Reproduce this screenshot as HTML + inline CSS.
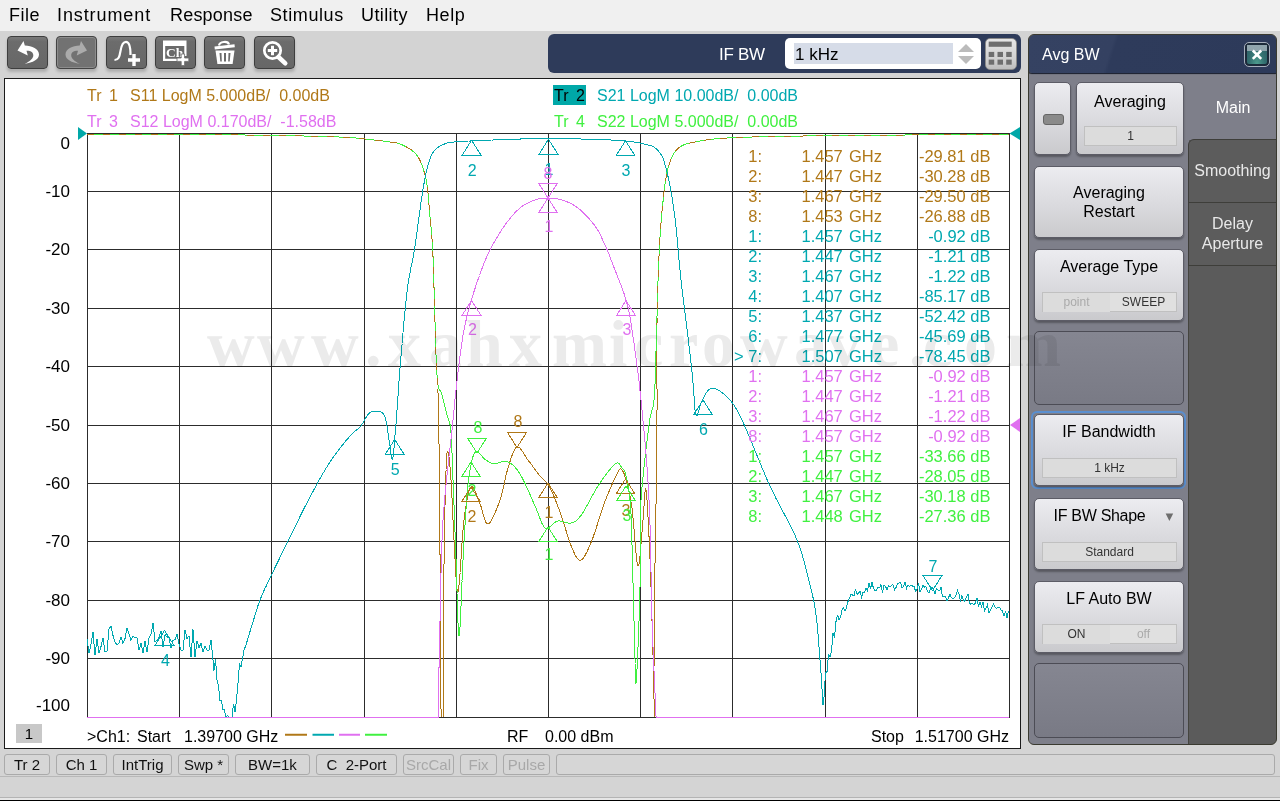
<!DOCTYPE html>
<html><head><meta charset="utf-8">
<style>
*{margin:0;padding:0;box-sizing:border-box}
html,body{width:1280px;height:801px;overflow:hidden;background:#d4d4d4;font-family:"Liberation Sans",sans-serif}
.abs{position:absolute}
#menubar{position:absolute;left:0;top:0;width:1280px;height:31px;background:#f0f0f0}
#menubar span{position:absolute;top:5px;font-size:18px;color:#000}
#toolbar{position:absolute;left:0;top:31px;width:1280px;height:47px;background:#d3d3d3}
.tb{position:absolute;top:36px;width:41px;height:33px;border-radius:4px;background:linear-gradient(#7a7a7a,#6c6c6c 15%,#676767);border:1px solid #3e3e3e;box-shadow:0 3px 3px rgba(0,0,0,0.18)}
.tb.dis{background:#727272;border-color:#444;box-shadow:inset 0 0 0 1px #8c8c8c,0 3px 3px rgba(0,0,0,0.18)}
#ifbw{position:absolute;left:548px;top:34px;width:473px;height:39px;background:#2e3b5a;border-radius:6px}
#chart{position:absolute;left:4px;top:78px;width:1017px;height:671px;background:#fff;border:1px solid #1a1a1a}
.bt{position:absolute;top:728px;font-size:16px;line-height:18px;white-space:pre;color:#000}
.leg{position:absolute;font-size:16px;white-space:pre;line-height:18px}
.mr{position:absolute;left:0;height:20px;font-size:16.5px;line-height:20px;white-space:pre}
.mr span{position:absolute;top:0}
.ma{left:720px;width:42px;text-align:right}
.mb{left:801.5px}
.mc{left:849px}
.md{left:881.5px;width:109px;text-align:right}
.yl{position:absolute;left:20px;width:50px;text-align:right;font-size:17px;line-height:20px;color:#000}
#panel{position:absolute;left:1028px;top:34px;width:249px;height:711px;border-radius:6px;background:#5b5b5b;border:1px solid #3a3a30;overflow:hidden}
#phead{position:absolute;left:0;top:0;width:249px;height:38px;border-radius:5px 5px 3px 3px;background:linear-gradient(108deg,#354262 0%,#344161 33%,#2e3b5b 34.5%,#2d3a5a 100%);box-shadow:0 1px 1px #1a2030}
#pleft{position:absolute;left:0;top:39px;width:160px;height:672px;background:#7e7f8a}
#maintab{position:absolute;left:159px;top:39px;width:90px;height:66px;background:#7e7f8a}
.tab{position:absolute;left:159px;width:89px;background:#5c5c5c;border:1px solid #3e3e3a;color:#e8e8e8;font-size:16px;text-align:center}
.btn{position:absolute;left:5px;width:150px;border-radius:5px;background:linear-gradient(#ececf0,#d8d8dc 60%,#cacacd);border:1px solid #5c5c66;box-shadow:0 2px 2px rgba(0,0,0,0.3);text-align:center;font-size:16px;color:#000}
.blank{position:absolute;left:5px;width:150px;border-radius:5px;background:linear-gradient(#858691,#797a85);border:1px solid #4c4c55}
.val{position:absolute;left:7px;width:135px;height:20px;background:#dcdcdc;border:1px solid #c0c0c0;font-size:12px;line-height:19px;color:#333;text-align:center}
.tog{position:absolute;left:7px;width:135px;height:20px;background:#e0e0e0;border:1px solid #c0c0c0;font-size:12px;line-height:19px}
.tog span{position:absolute;top:0;width:67px;text-align:center}
#status{position:absolute;left:0;top:749px;width:1280px;height:52px;background:#d3d3d3}
.sb{position:absolute;top:754px;height:21px;border:1px solid #aaa;border-radius:3px;background:#d6d6d6;font-size:15px;line-height:19px;text-align:center;color:#111}
.sb.dis{color:#a8a8a8}
</style></head><body>
<div id="menubar">
<span style="left:9px;letter-spacing:0.5px">File</span><span style="left:57px;letter-spacing:0.9px">Instrument</span><span style="left:170px;letter-spacing:0.2px">Response</span><span style="left:270px;letter-spacing:0.6px">Stimulus</span><span style="left:361px;letter-spacing:0.4px">Utility</span><span style="left:426px;letter-spacing:0.6px">Help</span>
</div>
<div id="toolbar"></div>
<div class="tb" style="left:7px"><svg width="41" height="33" style="position:absolute;left:-1px;top:-1px"><path d="M10.5 14.5 L16.5 5 L17.8 9.5 C25 9.5 32 13 32 18.5 C32 23.5 26 26.5 17.5 28 C23.5 25 26.5 22 26.3 19 C26 15.5 22.5 14.5 19.5 14.8 L20.8 19.5 Z" fill="#fff"/></svg></div>
<div class="tb dis" style="left:56px"><svg width="41" height="33" style="position:absolute;left:-1px;top:-1px"><path d="M31 14.5 L25 5 L23.7 9.5 C16.5 9.5 9.5 13 9.5 18.5 C9.5 23.5 15.5 26.5 24 28 C18 25 15 22 15.2 19 C15.5 15.5 19 14.5 22 14.8 L20.7 19.5 Z" fill="#ababab"/></svg></div>
<div class="tb" style="left:106px"><svg width="41" height="33" style="position:absolute;left:-1px;top:-1px"><path d="M8.5 24 C12.5 24 13.5 21 14.5 15 C15.5 8.5 17 5.8 20 5.8 C23.5 5.8 24.5 11 24.5 19" fill="none" stroke="#fff" stroke-width="2.2"/><path d="M26.3 18 h3.4 v4.3 h4.3 v3.4 h-4.3 v4.3 h-3.4 v-4.3 h-4.3 v-3.4 h4.3 z" fill="#fff"/></svg></div>
<div class="tb" style="left:155px"><svg width="41" height="33" style="position:absolute;left:-1px;top:-1px"><path d="M8 4.5 H31.5 V20 H24 V25 H8 Z M10.2 10 V22.8 H24 V20 H29.3 V10 Z" fill="#fff" fill-rule="evenodd"/><text x="11" y="21" font-family="Liberation Serif" font-weight="bold" font-size="13.5" fill="#fff">Ch</text><path d="M26.2 18 h3.4 v4 h4.2 v3.4 h-4.2 v4.2 h-3.4 v-4.2 h-4.2 v-3.4 h4.2 z" fill="#fff" stroke="#6a6a6a" stroke-width="0.8"/></svg></div>
<div class="tb" style="left:204px"><svg width="41" height="33" style="position:absolute;left:-1px;top:-1px"><path d="M15 9.5 C15.5 5.5 24 4.5 25 8.5" fill="none" stroke="#fff" stroke-width="2.2"/><path d="M10.5 10.5 L30.5 8.2 L30.8 11.2 L10.8 13.5 Z" fill="#fff"/><path d="M11.5 14.5 L30.5 14.5 L28.6 28 L13.4 28 Z" fill="#fff"/><path d="M15.5 17 L17.5 17 L17.8 25.5 L16.3 25.5 Z M20 17 L22 17 L22 25.5 L20 25.5 Z M24.5 17 L26.5 17 L25.7 25.5 L24.2 25.5 Z" fill="#6a6a6a"/></svg></div>
<div class="tb" style="left:254px"><svg width="41" height="33" style="position:absolute;left:-1px;top:-1px"><circle cx="18.5" cy="14.5" r="8.2" fill="none" stroke="#fff" stroke-width="2.7"/><path d="M13.8 14.5 h9.4 M18.5 9.8 v9.4" stroke="#fff" stroke-width="3"/><path d="M24.5 21 L31.3 27.3" stroke="#fff" stroke-width="4.5" stroke-linecap="round"/></svg></div>

<div id="ifbw">
<div class="abs" style="left:171px;top:11px;font-size:17px;color:#fff;letter-spacing:-0.3px">IF BW</div>
<div class="abs" style="left:237px;top:4px;width:196px;height:31px;background:#fff;border-radius:5px"></div>
<div class="abs" style="left:246px;top:9px;width:159px;height:21px;background:#d6dce8"></div>
<div class="abs" style="left:247px;top:10px;font-size:17px;color:#000;line-height:21px">1 kHz</div>
<svg class="abs" style="left:408px;top:8px" width="22" height="24"><path d="M2 10 L10 2 L18 10 Z" fill="#bbb"/><path d="M2 14 L10 22 L18 14 Z" fill="#bbb"/></svg>
<div class="abs" style="left:437px;top:4px;width:32px;height:32px;border-radius:5px;background:linear-gradient(#e6e6e6,#cfcfcf 70%,#bdbdbd);border:1px solid #8a8a8a">
<svg width="29" height="29" style="position:absolute;left:0;top:0"><rect x="2.7" y="2.6" width="23" height="5.2" fill="#6e6e6e"/><rect x="2.7" y="12.9" width="5.5" height="5.1" fill="#6e6e6e"/><rect x="11.5" y="12.9" width="5.5" height="5.1" fill="#6e6e6e"/><rect x="20.2" y="12.9" width="5.5" height="5.1" fill="#6e6e6e"/><rect x="2.7" y="20.6" width="5.5" height="5.1" fill="#6e6e6e"/><rect x="11.5" y="20.6" width="5.5" height="5.1" fill="#6e6e6e"/><rect x="20.2" y="20.6" width="5.5" height="5.1" fill="#6e6e6e"/></svg></div>
</div>

<div id="chart"></div>
<svg width="1280" height="801" style="position:absolute;left:0;top:0">
<line x1="87.5" y1="133" x2="87.5" y2="718" stroke="#2c2c2c" stroke-width="1" shape-rendering="crispEdges"/>
<line x1="179.5" y1="133" x2="179.5" y2="718" stroke="#2c2c2c" stroke-width="1" shape-rendering="crispEdges"/>
<line x1="271.5" y1="133" x2="271.5" y2="718" stroke="#2c2c2c" stroke-width="1" shape-rendering="crispEdges"/>
<line x1="364.5" y1="133" x2="364.5" y2="718" stroke="#2c2c2c" stroke-width="1" shape-rendering="crispEdges"/>
<line x1="456.5" y1="133" x2="456.5" y2="718" stroke="#2c2c2c" stroke-width="1" shape-rendering="crispEdges"/>
<line x1="548.5" y1="133" x2="548.5" y2="718" stroke="#2c2c2c" stroke-width="1" shape-rendering="crispEdges"/>
<line x1="640.5" y1="133" x2="640.5" y2="718" stroke="#2c2c2c" stroke-width="1" shape-rendering="crispEdges"/>
<line x1="732.5" y1="133" x2="732.5" y2="718" stroke="#2c2c2c" stroke-width="1" shape-rendering="crispEdges"/>
<line x1="825.5" y1="133" x2="825.5" y2="718" stroke="#2c2c2c" stroke-width="1" shape-rendering="crispEdges"/>
<line x1="917.5" y1="133" x2="917.5" y2="718" stroke="#2c2c2c" stroke-width="1" shape-rendering="crispEdges"/>
<line x1="1009.5" y1="133" x2="1009.5" y2="718" stroke="#2c2c2c" stroke-width="1" shape-rendering="crispEdges"/>
<line x1="87" y1="133.5" x2="1010" y2="133.5" stroke="#2c2c2c" stroke-width="1" shape-rendering="crispEdges"/>
<line x1="87" y1="191.5" x2="1010" y2="191.5" stroke="#2c2c2c" stroke-width="1" shape-rendering="crispEdges"/>
<line x1="87" y1="249.5" x2="1010" y2="249.5" stroke="#2c2c2c" stroke-width="1" shape-rendering="crispEdges"/>
<line x1="87" y1="308.5" x2="1010" y2="308.5" stroke="#2c2c2c" stroke-width="1" shape-rendering="crispEdges"/>
<line x1="87" y1="366.5" x2="1010" y2="366.5" stroke="#2c2c2c" stroke-width="1" shape-rendering="crispEdges"/>
<line x1="87" y1="425.5" x2="1010" y2="425.5" stroke="#2c2c2c" stroke-width="1" shape-rendering="crispEdges"/>
<line x1="87" y1="483.5" x2="1010" y2="483.5" stroke="#2c2c2c" stroke-width="1" shape-rendering="crispEdges"/>
<line x1="87" y1="541.5" x2="1010" y2="541.5" stroke="#2c2c2c" stroke-width="1" shape-rendering="crispEdges"/>
<line x1="87" y1="600.5" x2="1010" y2="600.5" stroke="#2c2c2c" stroke-width="1" shape-rendering="crispEdges"/>
<line x1="87" y1="658.5" x2="1010" y2="658.5" stroke="#2c2c2c" stroke-width="1" shape-rendering="crispEdges"/>
<line x1="87" y1="717.5" x2="1010" y2="717.5" stroke="#2c2c2c" stroke-width="1" shape-rendering="crispEdges"/>
<polyline fill="none" stroke="#b07818" stroke-width="1" shape-rendering="crispEdges" points="437.8,388.5 437.8,389.4 437.8,390.3 437.9,391.2 437.9,392.1 438.0,393.1 438.0,394.0 438.0,395.0 438.1,395.9 438.1,396.7 438.1,397.5 438.2,398.3 438.2,399.0 438.2,399.6 438.3,400.3 438.3,400.9 438.3,401.5 438.3,402.0 438.3,402.6 438.4,403.2 438.4,403.7 438.4,404.3 438.4,404.9 438.4,405.5 438.5,406.2 438.5,406.9 438.5,407.6 438.5,408.4 438.5,409.2 438.5,410.1 438.5,411.1 438.6,412.1 438.6,413.2 438.6,414.4 438.6,415.7 438.6,417.1 438.7,418.6 438.7,420.2 438.7,421.9 438.7,423.7 438.7,425.7 438.8,427.8 438.8,430.0 438.8,430.6 438.8,431.3 438.8,431.9 438.8,432.6 438.8,433.3 438.8,434.0 438.9,434.7 438.9,435.4 438.9,436.1 438.9,436.8 438.9,437.5 438.9,438.3 438.9,439.0 438.9,439.7 438.9,440.5 438.9,441.3 438.9,442.1 438.9,442.8 439.0,443.6 439.0,444.4 439.0,445.2 439.0,446.1 439.0,446.9 439.0,447.7 439.0,448.5 439.0,449.4 439.0,450.2 439.0,451.1 439.0,452.0 439.1,452.8 439.1,453.7 439.1,454.6 439.1,455.5 439.1,456.4 439.1,457.3 439.1,458.2 439.1,459.1 439.1,460.0 439.1,461.0 439.1,461.9 439.2,462.8 439.2,463.8 439.2,464.7 439.2,465.7 439.2,466.7 439.2,467.6 439.2,468.6 439.2,469.6 439.2,470.6 439.2,471.5 439.2,472.5 439.3,473.5 439.3,474.5 439.3,475.5 439.3,476.6 439.3,477.6 439.3,478.6 439.3,479.6 439.3,480.7 439.3,481.7 439.3,482.7 439.4,483.8 439.4,484.8 439.4,485.9 439.4,486.9 439.4,488.0 439.4,489.0 439.4,490.1 439.4,491.2 439.4,492.2 439.4,493.3 439.5,494.4 439.5,495.5 439.5,496.5 439.5,497.6 439.5,498.7 439.5,499.8 439.5,500.9 439.5,502.0 439.5,503.1 439.5,504.2 439.5,505.3 439.6,506.4 439.6,507.5 439.6,508.6 439.6,509.7 439.6,510.8 439.6,511.9 439.6,513.0 439.6,514.2 439.6,515.3 439.6,516.4 439.7,517.5 439.7,518.6 439.7,519.7 439.7,520.9 439.7,522.0 439.7,523.1 439.7,524.2 439.7,525.4 439.7,526.5 439.7,527.6 439.7,528.7 439.8,529.9 439.8,531.0 439.8,532.1 439.8,533.2 439.8,534.4 439.8,535.5 439.8,536.6 439.8,537.7 439.8,538.9 439.8,540.0 439.9,541.1 439.9,542.2 439.9,543.4 439.9,544.5 439.9,545.6 439.9,546.7 439.9,547.8 439.9,548.9 439.9,550.1 439.9,551.2 439.9,552.3 439.9,553.4 440.0,554.5 440.0,555.6 440.0,556.7 440.0,557.8 440.0,558.9 440.0,560.0 440.0,560.9 440.0,561.8 440.0,562.8 440.0,563.7 440.0,564.6 440.0,565.6 440.0,566.6 440.1,567.5 440.1,568.5 440.1,569.5 440.1,570.5 440.1,571.5 440.1,572.5 440.1,573.5 440.1,574.5 440.1,575.5 440.1,576.5 440.1,577.6 440.1,578.6 440.1,579.7 440.2,580.7 440.2,581.8 440.2,582.8 440.2,583.9 440.2,585.0 440.2,586.1 440.2,587.1 440.2,588.2 440.2,589.3 440.2,590.4 440.2,591.5 440.2,592.6 440.2,593.7 440.2,594.8 440.3,596.0 440.3,597.1 440.3,598.2 440.3,599.3 440.3,600.5 440.3,601.6 440.3,602.7 440.3,603.9 440.3,605.0 440.3,606.2 440.3,607.3 440.3,608.5 440.3,609.6 440.4,610.8 440.4,611.9 440.4,613.1 440.4,614.2 440.4,615.4 440.4,616.5 440.4,617.7 440.4,618.9 440.4,620.0 440.4,621.2 440.4,622.3 440.4,623.5 440.4,624.7 440.4,625.8 440.5,627.0 440.5,628.2 440.5,629.3 440.5,630.5 440.5,631.6 440.5,632.8 440.5,634.0 440.5,635.1 440.5,636.3 440.5,637.4 440.5,638.6 440.5,639.7 440.5,640.9 440.5,642.0 440.6,643.2 440.6,644.3 440.6,645.5 440.6,646.6 440.6,647.8 440.6,648.9 440.6,650.0 440.6,651.2 440.6,652.3 440.6,653.4 440.6,654.5 440.6,655.6 440.6,656.8 440.6,657.9 440.6,659.0 440.7,660.1 440.7,661.2 440.7,662.3 440.7,663.3 440.7,664.4 440.7,665.5 440.7,666.6 440.7,667.6 440.7,668.7 440.7,669.8 440.7,670.8 440.7,671.9 440.7,672.9 440.7,673.9 440.7,675.0 440.8,676.0 440.8,677.0 440.8,678.0 440.8,679.0 440.8,680.0 440.8,681.0 440.8,682.0 440.8,682.9 440.8,683.9 440.8,684.9 440.8,685.8 440.8,686.8 440.8,687.7 440.8,688.6 440.8,689.5 440.8,690.4 440.8,691.4 440.8,692.2 440.9,693.1 440.9,694.0 440.9,694.9 440.9,695.7 440.9,696.6 440.9,697.4 440.9,698.2 440.9,699.1 440.9,699.9 440.9,700.7 440.9,701.5 440.9,702.2 440.9,703.0 440.9,703.8 440.9,704.5 440.9,705.3 440.9,706.0 440.9,706.7 440.9,707.4 440.9,708.1 440.9,708.8 441.0,709.4 441.0,710.1 441.0,710.7 441.0,711.4 441.0,712.0 441.0,712.6 441.0,713.2 441.0,713.8 441.0,714.3 441.0,714.9 441.0,715.4 441.0,716.0 441.0,716.5 441.0,717.0"/>
<polyline fill="none" stroke="#b07818" stroke-width="1" shape-rendering="crispEdges" points="443.0,717.0 443.0,716.5 443.0,716.0 443.0,715.4 443.0,714.9 443.0,714.3 443.0,713.8 443.0,713.2 443.0,712.6 443.0,711.9 443.0,711.3 443.0,710.6 443.0,710.0 443.0,709.3 443.0,708.6 443.1,707.9 443.1,707.2 443.1,706.5 443.1,705.8 443.1,705.0 443.1,704.2 443.1,703.5 443.1,702.7 443.1,701.9 443.1,701.1 443.1,700.3 443.1,699.4 443.1,698.6 443.1,697.7 443.1,696.9 443.1,696.0 443.1,695.1 443.1,694.2 443.1,693.3 443.1,692.4 443.1,691.5 443.1,690.5 443.1,689.6 443.1,688.7 443.2,687.7 443.2,686.7 443.2,685.8 443.2,684.8 443.2,683.8 443.2,682.8 443.2,681.8 443.2,680.8 443.2,679.7 443.2,678.7 443.2,677.7 443.2,676.6 443.2,675.6 443.2,674.5 443.2,673.5 443.2,672.4 443.2,671.3 443.2,670.2 443.2,669.1 443.3,668.1 443.3,667.0 443.3,665.9 443.3,664.7 443.3,663.6 443.3,662.5 443.3,661.4 443.3,660.3 443.3,659.1 443.3,658.0 443.3,656.9 443.3,655.7 443.3,654.6 443.3,653.4 443.3,652.3 443.3,651.1 443.3,650.0 443.4,648.8 443.4,647.6 443.4,646.5 443.4,645.3 443.4,644.1 443.4,643.0 443.4,641.8 443.4,640.6 443.4,639.4 443.4,638.3 443.4,637.1 443.4,635.9 443.4,634.7 443.4,633.5 443.4,632.4 443.4,631.2 443.5,630.0 443.5,628.8 443.5,627.6 443.5,626.5 443.5,625.3 443.5,624.1 443.5,622.9 443.5,621.7 443.5,620.6 443.5,619.4 443.5,618.2 443.5,617.1 443.5,615.9 443.5,614.7 443.6,613.6 443.6,612.4 443.6,611.3 443.6,610.1 443.6,609.0 443.6,607.8 443.6,606.7 443.6,605.5 443.6,604.4 443.6,603.3 443.6,602.1 443.6,601.0 443.6,599.9 443.7,598.8 443.7,597.7 443.7,596.6 443.7,595.5 443.7,594.4 443.7,593.3 443.7,592.2 443.7,591.1 443.7,590.1 443.7,589.0 443.7,587.9 443.7,586.9 443.7,585.8 443.8,584.8 443.8,583.8 443.8,582.7 443.8,581.7 443.8,580.7 443.8,579.7 443.8,578.7 443.8,577.7 443.8,576.8 443.8,575.8 443.8,574.8 443.9,573.9 443.9,572.9 443.9,572.0 443.9,571.1 443.9,570.2 443.9,569.3 443.9,568.4 443.9,567.5 443.9,566.6 443.9,565.7 443.9,564.9 444.0,564.1 444.0,563.2 444.0,562.4 444.0,561.6 444.0,560.8 444.0,560.0 444.0,558.7 444.0,557.3 444.0,556.0 444.1,554.7 444.1,553.4 444.1,552.1 444.1,550.8 444.1,549.5 444.2,548.2 444.2,546.9 444.2,545.7 444.2,544.4 444.2,543.2 444.2,541.9 444.3,540.7 444.3,539.5 444.3,538.3 444.3,537.0 444.3,535.8 444.4,534.6 444.4,533.5 444.4,532.3 444.4,531.1 444.5,529.9 444.5,528.8 444.5,527.6 444.5,526.5 444.5,525.4 444.6,524.2 444.6,523.1 444.6,522.0 444.6,520.9 444.6,519.8 444.7,518.7 444.7,517.6 444.7,516.6 444.7,515.5 444.8,514.5 444.8,513.4 444.8,512.4 444.8,511.3 444.8,510.3 444.9,509.3 444.9,508.3 444.9,507.3 444.9,506.3 445.0,505.3 445.0,504.4 445.0,503.4 445.0,502.4 445.1,501.5 445.1,500.6 445.1,499.6 445.1,498.7 445.1,497.8 445.2,496.9 445.2,496.0 445.2,495.1 445.2,494.2 445.3,493.3 445.3,492.5 445.3,491.6 445.3,490.8 445.4,489.9 445.4,489.1 445.4,488.3 445.4,487.5 445.5,486.7 445.5,485.9 445.5,485.1 445.5,484.3 445.5,483.5 445.6,482.8 445.6,482.0 445.6,481.3 445.6,480.5 445.7,479.8 445.7,479.1 445.7,478.4 445.7,477.7 445.8,477.0 445.8,476.3 445.8,475.6 445.8,475.0 445.8,474.3 445.9,473.7 445.9,473.0 445.9,472.4 445.9,471.8 446.0,471.2 446.0,470.6 446.0,470.0 446.1,467.4 446.2,465.1 446.3,463.0 446.4,461.1 446.5,459.4 446.6,457.9 446.7,456.5 446.8,455.4 446.8,454.4 446.9,453.6 447.0,453.0 447.1,452.4 447.2,452.0 447.3,451.8 447.4,451.6 447.5,451.5 447.6,451.5 447.8,451.6 447.9,451.8 448.0,452.0 448.1,452.2 448.2,452.4 448.3,452.8 448.3,453.1 448.4,453.6 448.5,454.0 448.6,454.6 448.7,455.2 448.8,455.8 448.9,456.5 449.0,457.2 449.1,458.0 449.2,458.9 449.3,459.7 449.4,460.7 449.5,461.6 449.6,462.6 449.7,463.6 449.8,464.7 449.9,465.8 450.0,467.0 450.1,468.2 450.2,469.4 450.3,470.6 450.4,471.9 450.5,473.2 450.6,474.5 450.7,475.8 450.8,477.2 450.9,478.6 451.0,480.0 451.0,480.7 451.1,481.4 451.1,482.2 451.2,482.9 451.2,483.7 451.3,484.5 451.3,485.3 451.4,486.1 451.4,487.0 451.5,487.8 451.5,488.7 451.6,489.5 451.6,490.4 451.6,491.3 451.7,492.2 451.7,493.2 451.8,494.1 451.8,495.0 451.9,496.0 451.9,497.0 452.0,497.9 452.0,498.9 452.1,499.9 452.1,500.9 452.1,501.9 452.2,502.9 452.2,503.9 452.3,504.9 452.3,505.9 452.4,507.0 452.4,508.0 452.5,509.0 452.5,510.1 452.6,511.1 452.6,512.1 452.6,513.2 452.7,514.2 452.7,515.2 452.8,516.3 452.8,517.3 452.9,518.4 452.9,519.4 453.0,520.4 453.0,521.5 453.1,522.5 453.1,523.5 453.2,524.6 453.2,525.6 453.3,526.6 453.3,527.6 453.4,528.6 453.4,529.6 453.5,530.6 453.5,531.6 453.6,532.5 453.6,533.5 453.7,534.5 453.7,535.4 453.8,536.4 453.8,537.3 453.9,538.2 453.9,539.1 454.0,540.0 454.1,541.0 454.1,542.1 454.2,543.1 454.3,544.3 454.3,545.4 454.4,546.5 454.4,547.7 454.5,548.9 454.6,550.2 454.6,551.4 454.7,552.6 454.8,553.9 454.8,555.2 454.9,556.5 454.9,557.8 455.0,559.1 455.1,560.4 455.1,561.7 455.2,563.0 455.3,564.2 455.3,565.5 455.4,566.8 455.5,568.1 455.5,569.4 455.6,570.6 455.7,571.8 455.7,573.1 455.8,574.2 455.9,575.4 456.0,576.6 456.0,577.7 456.1,578.8 456.2,579.9 456.2,580.9 456.3,581.9 456.4,582.9 456.5,583.8 456.5,584.7 456.6,585.6 456.7,586.4 456.8,587.2 456.8,587.9 456.9,588.6 457.0,589.2 457.1,589.8 457.2,590.3 457.2,590.7 457.3,591.1 457.4,591.5 457.5,591.8 457.6,592.0 457.7,592.1 457.7,592.2 457.8,592.2 457.9,592.1 458.0,592.0 458.1,591.8 458.1,591.7 458.2,591.4 458.3,591.1 458.3,590.8 458.4,590.4 458.5,590.0 458.5,589.6 458.6,589.1 458.7,588.5 458.7,588.0 458.8,587.4 458.9,586.7 458.9,586.1 459.0,585.3 459.1,584.6 459.2,583.8 459.2,583.1 459.3,582.2 459.4,581.4 459.4,580.5 459.5,579.6 459.6,578.7 459.7,577.7 459.7,576.7 459.8,575.7 459.9,574.7 460.0,573.7 460.0,572.6 460.1,571.6 460.2,570.5 460.3,569.4 460.3,568.3 460.4,567.1 460.5,566.0 460.6,564.8 460.7,563.7 460.7,562.5 460.8,561.3 460.9,560.1 461.0,558.9 461.0,557.7 461.1,556.5 461.2,555.3 461.3,554.1 461.4,552.9 461.4,551.7 461.5,550.5 461.6,549.3 461.7,548.1 461.8,546.9 461.9,545.7 461.9,544.5 462.0,543.3 462.1,542.2 462.2,541.0 462.3,539.9 462.3,538.7 462.4,537.6 462.5,536.5 462.6,535.4 462.7,534.3 462.8,533.3 462.8,532.2 462.9,531.2 463.0,530.2 463.1,529.2 463.2,528.2 463.3,527.3 463.3,526.4 463.4,525.5 463.5,524.6 463.6,523.8 463.7,522.9 463.8,522.2 463.8,521.4 463.9,520.7 464.0,520.0 464.2,518.7 464.3,517.4 464.5,516.1 464.7,514.9 464.8,513.7 465.0,512.5 465.1,511.3 465.3,510.1 465.5,509.0 465.6,507.8 465.8,506.7 466.0,505.7 466.1,504.6 466.3,503.6 466.5,502.6 466.6,501.6 466.8,500.6 467.0,499.7 467.1,498.8 467.3,497.9 467.5,497.1 467.7,496.3 467.8,495.5 468.0,494.7 468.2,494.0 468.4,493.3 468.5,492.6 468.7,492.0 468.9,491.4 469.1,490.8 469.3,490.3 469.5,489.8 469.6,489.3 469.8,488.9 470.0,488.5 470.2,488.1 470.4,487.8 470.6,487.5 470.8,487.2 471.0,487.0 471.3,486.8 471.6,486.7 472.0,486.7 472.3,486.8 472.6,487.1 473.0,487.4 473.3,487.9 473.7,488.4 474.0,489.1 474.4,489.8 474.7,490.5 475.1,491.3 475.4,492.2 475.8,493.1 476.2,494.0 476.5,495.0 476.9,495.9 477.2,496.9 477.6,497.9 478.0,498.8 478.3,499.8 478.7,500.7 479.0,501.6 479.3,502.5 479.7,503.3 480.0,504.0 480.3,504.7 480.6,505.4 480.9,506.2 481.2,507.1 481.4,508.0 481.7,508.9 482.0,509.8 482.2,510.8 482.5,511.7 482.8,512.7 483.0,513.7 483.3,514.7 483.5,515.6 483.8,516.6 484.1,517.5 484.3,518.3 484.6,519.2 484.9,520.0 485.2,520.7 485.5,521.4 485.7,522.0 486.0,522.6 486.3,523.0 486.7,523.4 487.0,523.7 487.3,523.9 487.6,524.0 488.0,524.0 488.3,523.9 488.6,523.8 488.9,523.6 489.2,523.3 489.5,523.0 489.8,522.6 490.1,522.2 490.5,521.8 490.8,521.3 491.2,520.7 491.5,520.2 491.9,519.6 492.2,518.9 492.6,518.2 492.9,517.5 493.3,516.8 493.6,516.0 494.0,515.2 494.4,514.4 494.7,513.6 495.1,512.8 495.4,511.9 495.8,511.1 496.1,510.2 496.5,509.3 496.8,508.5 497.2,507.6 497.5,506.7 497.9,505.8 498.2,505.0 498.5,504.1 498.8,503.3 499.1,502.4 499.4,501.6 499.7,500.8 500.0,500.0 500.2,499.3 500.5,498.6 500.7,497.8 501.0,497.1 501.2,496.3 501.4,495.5 501.6,494.7 501.8,493.9 502.1,493.1 502.3,492.3 502.5,491.5 502.7,490.6 502.9,489.8 503.1,489.0 503.2,488.1 503.4,487.2 503.6,486.4 503.8,485.5 504.0,484.7 504.2,483.8 504.4,483.0 504.6,482.1 504.7,481.2 504.9,480.4 505.1,479.5 505.3,478.7 505.5,477.9 505.7,477.0 505.8,476.2 506.0,475.4 506.2,474.6 506.4,473.8 506.6,473.0 506.8,472.3 507.0,471.5 507.2,470.8 507.4,470.1 507.6,469.4 507.8,468.7 508.0,468.0 508.3,467.1 508.6,466.2 508.9,465.3 509.1,464.4 509.4,463.5 509.7,462.6 510.0,461.6 510.3,460.7 510.6,459.8 510.9,458.9 511.1,458.0 511.4,457.2 511.7,456.3 512.0,455.5 512.3,454.7 512.6,453.9 512.9,453.1 513.2,452.4 513.5,451.7 513.8,451.1 514.1,450.5 514.4,449.9 514.7,449.3 515.1,448.8 515.4,448.4 515.7,448.0 516.0,447.7 516.3,447.4 516.7,447.2 517.0,447.0 517.4,446.9 517.8,446.9 518.3,447.0 518.7,447.2 519.1,447.4 519.6,447.8 520.0,448.2 520.5,448.7 520.9,449.3 521.4,449.9 521.9,450.5 522.3,451.2 522.8,451.9 523.2,452.6 523.7,453.4 524.2,454.2 524.7,455.0 525.1,455.7 525.6,456.5 526.1,457.3 526.6,458.0 527.0,458.7 527.5,459.4 528.0,460.0 528.4,460.5 528.8,461.1 529.3,461.6 529.7,462.2 530.1,462.8 530.6,463.3 531.0,463.9 531.4,464.5 531.9,465.1 532.3,465.7 532.8,466.3 533.2,467.0 533.7,467.6 534.1,468.2 534.6,468.8 535.0,469.4 535.5,470.0 535.9,470.6 536.3,471.2 536.8,471.8 537.2,472.4 537.6,472.9 538.0,473.5 538.4,474.0 538.8,474.5 539.2,475.0 539.6,475.5 540.0,476.0 540.5,476.6 541.1,477.2 541.6,477.7 542.1,478.2 542.5,478.7 543.0,479.1 543.5,479.4 543.9,479.8 544.3,480.2 544.8,480.6 545.2,481.0 545.7,481.4 546.1,481.9 546.6,482.4 547.0,482.9 547.5,483.6 548.0,484.3 548.5,485.1 549.0,486.0 549.3,486.5 549.5,487.0 549.8,487.5 550.1,488.1 550.4,488.6 550.7,489.2 550.9,489.8 551.2,490.4 551.5,491.0 551.8,491.6 552.1,492.2 552.4,492.9 552.7,493.6 553.0,494.2 553.3,494.9 553.6,495.6 553.9,496.3 554.2,497.0 554.5,497.7 554.8,498.5 555.1,499.2 555.4,500.0 555.7,500.7 556.0,501.5 556.3,502.3 556.6,503.0 556.9,503.8 557.2,504.6 557.5,505.4 557.8,506.2 558.1,507.0 558.4,507.9 558.8,508.7 559.1,509.5 559.4,510.3 559.7,511.2 560.0,512.0 560.2,512.7 560.5,513.3 560.7,514.0 561.0,514.7 561.2,515.4 561.5,516.2 561.7,516.9 562.0,517.7 562.2,518.5 562.5,519.3 562.7,520.1 563.0,520.9 563.3,521.7 563.5,522.5 563.8,523.3 564.0,524.1 564.3,525.0 564.6,525.8 564.8,526.7 565.1,527.5 565.3,528.3 565.6,529.2 565.9,530.0 566.1,530.9 566.4,531.7 566.6,532.5 566.9,533.4 567.2,534.2 567.4,535.0 567.7,535.8 567.9,536.6 568.2,537.4 568.4,538.2 568.7,539.0 568.9,539.7 569.2,540.5 569.4,541.2 569.7,541.9 569.9,542.6 570.2,543.3 570.4,543.9 570.6,544.6 570.9,545.2 571.1,545.8 571.3,546.4 571.6,547.0 571.8,547.5 572.0,548.0 572.5,549.1 573.0,550.2 573.4,551.3 573.9,552.3 574.3,553.2 574.7,554.1 575.1,555.0 575.6,555.8 576.0,556.5 576.4,557.2 576.8,557.8 577.2,558.4 577.6,558.8 578.0,559.3 578.4,559.6 578.8,559.9 579.2,560.1 579.6,560.2 580.1,560.2 580.5,560.1 581.0,560.0 581.3,559.8 581.7,559.6 582.0,559.4 582.3,559.1 582.6,558.8 583.0,558.4 583.3,558.0 583.7,557.5 584.0,557.0 584.4,556.5 584.7,555.9 585.1,555.3 585.4,554.7 585.8,554.0 586.1,553.4 586.5,552.6 586.9,551.9 587.2,551.2 587.6,550.4 587.9,549.6 588.3,548.8 588.7,547.9 589.0,547.1 589.4,546.2 589.8,545.4 590.1,544.5 590.5,543.6 590.9,542.7 591.3,541.8 591.6,540.9 592.0,540.0 592.2,539.4 592.5,538.8 592.7,538.2 593.0,537.5 593.2,536.9 593.5,536.2 593.7,535.5 593.9,534.8 594.2,534.1 594.4,533.4 594.7,532.7 594.9,531.9 595.2,531.2 595.4,530.4 595.7,529.7 595.9,528.9 596.2,528.1 596.4,527.3 596.7,526.5 596.9,525.7 597.2,524.9 597.4,524.1 597.7,523.3 597.9,522.5 598.2,521.7 598.4,520.9 598.7,520.1 598.9,519.2 599.2,518.4 599.5,517.6 599.7,516.8 600.0,516.0 600.2,515.2 600.5,514.4 600.7,513.6 601.0,512.8 601.2,512.0 601.5,511.3 601.7,510.5 602.0,509.7 602.2,509.0 602.5,508.2 602.7,507.5 603.0,506.8 603.2,506.1 603.5,505.4 603.7,504.7 604.0,504.0 604.3,503.2 604.6,502.4 604.9,501.6 605.2,500.8 605.5,500.0 605.9,499.2 606.2,498.4 606.5,497.6 606.8,496.7 607.2,495.9 607.5,495.1 607.8,494.4 608.1,493.6 608.5,492.8 608.8,492.0 609.1,491.2 609.5,490.4 609.8,489.7 610.1,488.9 610.4,488.2 610.8,487.5 611.1,486.7 611.4,486.0 611.7,485.3 612.0,484.6 612.3,483.9 612.6,483.3 612.9,482.6 613.2,482.0 613.5,481.3 613.8,480.7 614.0,480.1 614.3,479.5 614.6,479.0 614.8,478.4 615.1,477.9 615.3,477.4 615.6,476.9 615.8,476.4 616.0,476.0 616.7,474.6 617.2,473.4 617.7,472.4 618.2,471.4 618.6,470.7 618.9,470.1 619.3,469.6 619.6,469.2 619.9,469.0 620.2,468.9 620.6,468.9 621.0,469.0 621.3,469.2 621.6,469.4 621.9,469.7 622.2,470.1 622.5,470.5 622.8,471.1 623.1,471.7 623.4,472.3 623.7,473.0 624.1,473.8 624.4,474.7 624.7,475.6 625.0,476.6 625.3,477.7 625.7,478.8 626.0,480.0 626.2,480.6 626.3,481.2 626.5,481.7 626.7,482.3 626.8,482.9 627.0,483.5 627.2,484.2 627.3,484.8 627.5,485.4 627.7,486.1 627.9,486.7 628.0,487.4 628.2,488.1 628.4,488.8 628.6,489.6 628.8,490.3 628.9,491.1 629.1,491.8 629.3,492.7 629.5,493.5 629.7,494.3 629.8,495.2 630.0,496.1 630.2,497.0 630.4,498.0 630.6,499.0 630.7,500.0 630.9,501.0 631.1,502.1 631.3,503.2 631.5,504.4 631.6,505.5 631.8,506.8 632.0,508.0 632.1,508.7 632.2,509.4 632.3,510.2 632.4,511.0 632.5,511.8 632.6,512.7 632.7,513.6 632.8,514.5 632.9,515.5 632.9,516.5 633.0,517.5 633.1,518.5 633.2,519.6 633.3,520.6 633.4,521.7 633.5,522.8 633.6,524.0 633.7,525.1 633.8,526.2 633.9,527.4 634.0,528.6 634.1,529.7 634.2,530.9 634.3,532.1 634.4,533.3 634.5,534.5 634.6,535.7 634.7,536.9 634.8,538.1 634.9,539.3 635.0,540.5 635.1,541.6 635.2,542.8 635.3,543.9 635.3,545.1 635.4,546.2 635.5,547.3 635.6,548.4 635.7,549.5 635.8,550.5 635.9,551.6 636.0,552.6 636.1,553.6 636.2,554.5 636.3,555.5 636.4,556.4 636.5,557.3 636.6,558.1 636.7,558.9 636.8,559.7 636.8,560.4 636.9,561.1 637.0,561.8 637.1,562.4 637.2,563.0 637.3,563.5 637.4,564.0 637.5,564.4 637.6,564.8 637.7,565.2 637.7,565.5 637.8,565.7 637.9,565.9 638.0,566.0 638.1,566.1 638.2,566.1 638.3,566.0 638.4,565.8 638.5,565.6 638.6,565.3 638.8,564.9 638.9,564.4 639.0,563.9 639.1,563.3 639.2,562.7 639.3,562.0 639.4,561.2 639.5,560.4 639.6,559.6 639.7,558.7 639.8,557.8 639.9,556.8 640.0,555.8 640.1,554.7 640.2,553.7 640.3,552.6 640.4,551.4 640.5,550.3 640.6,549.1 640.7,547.9 640.8,546.7 640.9,545.5 641.0,544.2 641.1,543.0 641.2,541.7 641.3,540.5 641.4,539.2 641.5,538.0 641.6,536.8 641.7,535.5 641.8,534.3 641.9,533.1 642.0,531.9 642.1,530.8 642.2,529.6 642.3,528.5 642.3,527.4 642.4,526.3 642.5,525.3 642.6,524.3 642.7,523.4 642.8,522.5 642.8,521.6 642.9,520.8 643.0,520.0 643.1,518.8 643.2,517.6 643.3,516.3 643.5,515.0 643.6,513.6 643.7,512.2 643.8,510.8 643.8,509.4 643.9,508.0 644.0,506.5 644.1,505.1 644.2,503.7 644.3,502.3 644.4,501.0 644.4,499.6 644.5,498.4 644.6,497.1 644.7,496.0 644.8,494.9 644.8,493.8 644.9,492.9 645.0,492.0 645.1,491.2 645.2,490.5 645.2,490.0 645.3,489.5 645.4,489.2 645.5,488.9 645.6,488.9 645.7,488.9 645.8,489.1 645.9,489.5 646.0,490.0 646.0,490.3 646.1,490.6 646.1,491.0 646.2,491.3 646.2,491.7 646.3,492.2 646.3,492.6 646.4,493.1 646.4,493.6 646.5,494.2 646.6,494.8 646.6,495.4 646.7,496.0 646.7,496.6 646.8,497.3 646.8,498.0 646.9,498.7 646.9,499.5 647.0,500.2 647.0,501.0 647.1,501.8 647.1,502.6 647.2,503.5 647.3,504.3 647.3,505.2 647.4,506.1 647.4,507.0 647.5,508.0 647.5,508.9 647.6,509.9 647.7,510.9 647.7,511.9 647.8,512.9 647.8,513.9 647.9,514.9 647.9,516.0 648.0,517.1 648.1,518.1 648.1,519.2 648.2,520.3 648.2,521.4 648.3,522.5 648.3,523.7 648.4,524.8 648.5,525.9 648.5,527.1 648.6,528.2 648.6,529.4 648.7,530.6 648.7,531.7 648.8,532.9 648.9,534.1 648.9,535.3 649.0,536.5 649.0,537.7 649.1,538.9 649.1,540.0 649.2,541.2 649.2,542.4 649.3,543.6 649.3,544.8 649.4,546.0 649.4,547.2 649.5,548.4 649.6,549.6 649.6,550.8 649.7,551.9 649.7,553.1 649.8,554.3 649.8,555.4 649.9,556.6 649.9,557.7 650.0,558.9 650.0,560.0 650.0,560.8 650.1,561.7 650.1,562.6 650.1,563.5 650.2,564.4 650.2,565.3 650.2,566.2 650.3,567.1 650.3,568.1 650.4,569.0 650.4,570.0 650.4,571.0 650.5,572.0 650.5,573.0 650.5,574.0 650.6,575.0 650.6,576.1 650.6,577.1 650.7,578.2 650.7,579.2 650.7,580.3 650.8,581.4 650.8,582.4 650.9,583.5 650.9,584.6 650.9,585.7 651.0,586.8 651.0,587.9 651.0,589.1 651.1,590.2 651.1,591.3 651.1,592.4 651.2,593.5 651.2,594.7 651.2,595.8 651.3,597.0 651.3,598.1 651.3,599.2 651.4,600.4 651.4,601.5 651.5,602.7 651.5,603.8 651.5,604.9 651.6,606.1 651.6,607.2 651.6,608.4 651.7,609.5 651.7,610.6 651.7,611.7 651.8,612.9 651.8,614.0 651.8,615.1 651.8,616.2 651.9,617.3 651.9,618.4 651.9,619.5 652.0,620.6 652.0,621.7 652.0,622.8 652.1,623.9 652.1,625.0 652.1,626.0 652.2,627.1 652.2,628.1 652.2,629.1 652.2,630.2 652.3,631.2 652.3,632.2 652.3,633.2 652.4,634.2 652.4,635.2 652.4,636.1 652.4,637.1 652.5,638.0 652.5,638.9 652.5,639.9 652.5,640.8 652.6,641.6 652.6,642.5 652.6,643.4 652.6,644.2 652.7,645.1 652.7,645.9 652.7,646.7 652.7,647.4 652.7,648.2 652.8,649.0 652.8,649.7 652.8,650.4 652.8,651.1 652.8,651.8 652.9,652.4 652.9,653.1 652.9,653.7 652.9,654.3 652.9,654.9 653.0,655.4 653.0,656.0 653.0,656.5 653.0,657.0"/>
<polyline fill="none" stroke="#b07818" stroke-width="1" shape-rendering="crispEdges" points="654.0,717.0 654.0,716.5 654.0,716.0 654.0,715.4 654.0,714.8 654.0,714.2 654.0,713.6 654.0,713.0 654.0,712.3 654.0,711.6 654.0,710.9 654.0,710.2 654.0,709.4 654.0,708.7 654.0,707.9 654.0,707.1 654.0,706.3 654.0,705.4 654.0,704.6 654.0,703.7 654.0,702.8 654.0,701.9 654.0,701.0 654.0,700.0 654.0,699.1 653.9,698.1 653.9,697.1 653.9,696.1 653.9,695.1 653.9,694.1 653.9,693.1 653.9,692.0 653.9,690.9 653.9,689.9 653.9,688.8 653.9,687.7 653.9,686.5 653.9,685.4 653.9,684.3 653.9,683.1 653.9,682.0 653.9,680.8 653.9,679.6 653.9,678.4 653.9,677.2 653.9,676.0 653.9,674.8 653.9,673.6 653.9,672.3 653.9,671.1 653.9,669.8 653.9,668.6 653.9,667.3 654.0,666.0 654.0,664.8 654.0,663.5 654.0,662.2 654.0,660.9 654.0,659.6 654.0,658.3 654.0,657.0 654.0,656.2 654.0,655.4 654.0,654.5 654.0,653.7 654.0,652.9 654.0,652.0 654.0,651.1 654.0,650.2 654.1,649.4 654.1,648.5 654.1,647.5 654.1,646.6 654.1,645.7 654.1,644.8 654.1,643.8 654.1,642.9 654.1,641.9 654.1,640.9 654.1,640.0 654.1,639.0 654.1,638.0 654.2,637.0 654.2,636.0 654.2,635.0 654.2,634.0 654.2,633.0 654.2,631.9 654.2,630.9 654.2,629.9 654.2,628.8 654.2,627.8 654.3,626.7 654.3,625.7 654.3,624.6 654.3,623.6 654.3,622.5 654.3,621.4 654.3,620.4 654.3,619.3 654.3,618.2 654.3,617.2 654.4,616.1 654.4,615.0 654.4,613.9 654.4,612.8 654.4,611.8 654.4,610.7 654.4,609.6 654.4,608.5 654.4,607.4 654.5,606.3 654.5,605.2 654.5,604.2 654.5,603.1 654.5,602.0 654.5,600.9 654.5,599.8 654.5,598.8 654.6,597.7 654.6,596.6 654.6,595.6 654.6,594.5 654.6,593.4 654.6,592.4 654.6,591.3 654.6,590.3 654.6,589.2 654.7,588.2 654.7,587.1 654.7,586.1 654.7,585.1 654.7,584.0 654.7,583.0 654.7,582.0 654.7,581.0 654.8,580.0 654.8,579.0 654.8,578.0 654.8,577.0 654.8,576.1 654.8,575.1 654.8,574.1 654.8,573.2 654.8,572.2 654.9,571.3 654.9,570.4 654.9,569.5 654.9,568.5 654.9,567.6 654.9,566.8 654.9,565.9 654.9,565.0 654.9,564.1 655.0,563.3 655.0,562.5 655.0,561.6 655.0,560.8 655.0,560.0 655.0,558.7 655.0,557.5 655.0,556.3 655.1,555.1 655.1,553.9 655.1,552.8 655.1,551.7 655.1,550.6 655.1,549.5 655.2,548.5 655.2,547.5 655.2,546.5 655.2,545.5 655.2,544.5 655.2,543.6 655.3,542.6 655.3,541.7 655.3,540.8 655.3,539.9 655.3,539.0 655.3,538.2 655.4,537.3 655.4,536.4 655.4,535.6 655.4,534.8 655.4,533.9 655.4,533.1 655.5,532.3 655.5,531.4 655.5,530.6 655.5,529.8 655.5,528.9 655.5,528.1 655.6,527.3 655.6,526.5 655.6,525.6 655.6,524.8 655.6,523.9 655.6,523.0 655.7,522.2 655.7,521.3 655.7,520.4 655.7,519.5 655.7,518.6 655.7,517.7 655.8,516.7 655.8,515.7 655.8,514.8 655.8,513.8 655.8,512.7 655.8,511.7 655.9,510.7 655.9,509.6 655.9,508.5 655.9,507.3 655.9,506.2 655.9,505.0 656.0,503.8 656.0,502.6 656.0,501.3 656.0,500.0 656.0,499.2 656.0,498.4 656.0,497.6 656.0,496.7 656.1,495.9 656.1,495.0 656.1,494.2 656.1,493.3 656.1,492.4 656.1,491.5 656.1,490.6 656.1,489.7 656.1,488.7 656.2,487.8 656.2,486.8 656.2,485.9 656.2,484.9 656.2,483.9 656.2,482.9 656.2,482.0 656.2,481.0 656.2,480.0 656.3,478.9 656.3,477.9 656.3,476.9 656.3,475.9 656.3,474.8 656.3,473.8 656.3,472.7 656.3,471.7 656.4,470.6 656.4,469.6 656.4,468.5 656.4,467.4 656.4,466.3 656.4,465.3 656.4,464.2 656.4,463.1 656.5,462.0 656.5,460.9 656.5,459.8 656.5,458.7 656.5,457.6 656.5,456.5 656.5,455.4 656.5,454.3 656.6,453.2 656.6,452.1 656.6,451.0 656.6,449.9 656.6,448.8 656.6,447.7 656.6,446.6 656.6,445.5 656.6,444.4 656.7,443.3 656.7,442.2 656.7,441.1 656.7,440.1 656.7,439.0 656.7,437.9 656.7,436.8 656.7,435.7 656.7,434.7 656.8,433.6 656.8,432.5 656.8,431.5 656.8,430.4 656.8,429.4 656.8,428.3 656.8,427.3 656.8,426.2 656.8,425.2 656.8,424.2 656.8,423.2 656.9,422.2 656.9,421.2 656.9,420.2 656.9,419.2 656.9,418.2 656.9,417.2 656.9,416.3 656.9,415.3 656.9,414.4 656.9,413.5 656.9,412.5 656.9,411.6 656.9,410.7 657.0,409.8 657.0,408.9 657.0,408.1 657.0,407.2 657.0,406.4 657.0,405.5 657.0,404.7 657.0,403.9 657.0,403.1 657.0,402.3 657.0,401.5 657.0,400.7 657.0,400.0 657.0,398.5 657.0,397.1 657.0,395.8 657.0,394.4 657.0,393.2 657.0,392.0 657.0,390.8 657.0,389.7 657.0,388.6 656.9,387.5 656.9,386.5 656.9,385.5 656.9,384.6 656.9,383.6 656.9,382.7 656.8,381.9 656.8,381.0 656.8,380.2 656.8,379.4 656.8,378.6 656.7,377.8 656.7,377.0 656.7,376.2 656.7,375.5 656.7,374.7 656.6,373.9 656.6,373.2 656.6,372.4 656.6,371.6 656.6,370.8 656.5,370.0 656.5,369.2 656.5,368.4 656.5,367.6 656.5,366.7 656.5,365.9 656.5,365.0 656.4,364.0 656.4,363.1 656.4,362.1 656.4,361.1 656.4,360.0 656.4,358.9 656.4,357.8 656.4,356.6 656.4,355.4 656.5,354.1 656.5,352.8 656.5,351.4 656.5,350.0 656.5,349.2 656.5,348.5 656.5,347.7 656.5,346.9 656.6,346.1 656.6,345.3 656.6,344.5 656.6,343.6 656.6,342.8 656.6,341.9 656.6,341.1 656.7,340.2 656.7,339.3 656.7,338.4 656.7,337.5 656.7,336.6 656.7,335.6 656.7,334.7 656.8,333.7 656.8,332.8 656.8,331.8 656.8,330.9 656.8,329.9 656.9,328.9 656.9,327.9 656.9,326.9 656.9,325.9 656.9,324.9 656.9,323.9 657.0,322.9 657.0,321.9 657.0,320.8"/>
<polyline fill="none" stroke="#40f040" stroke-width="1" shape-rendering="crispEdges" points="87.0,134.0 87.5,134.0 88.0,134.0 88.6,134.0 89.2,134.0 89.7,134.0 90.4,134.0 91.0,134.0 91.6,134.0 92.3,134.0 93.0,134.0 93.7,134.0 94.4,134.0 95.1,134.0 95.8,134.0 96.6,134.0 97.4,134.0 98.2,134.0 99.0,134.0 99.8,134.0 100.7,134.1 101.5,134.1 102.4,134.1 103.2,134.1 104.1,134.1 105.0,134.1 106.0,134.1 106.9,134.1 107.8,134.1 108.8,134.1 109.8,134.1 110.7,134.1 111.7,134.1 112.7,134.1 113.7,134.1 114.8,134.1 115.8,134.1 116.8,134.1 117.9,134.1 118.9,134.1 120.0,134.1 121.1,134.1 122.1,134.1 123.2,134.1 124.3,134.1 125.4,134.1 126.5,134.1 127.7,134.1 128.8,134.2 129.9,134.2 131.0,134.2 132.2,134.2 133.3,134.2 134.5,134.2 135.6,134.2 136.8,134.2 137.9,134.2 139.1,134.2 140.2,134.2 141.4,134.2 142.6,134.2 143.8,134.2 144.9,134.2 146.1,134.2 147.3,134.2 148.5,134.2 149.6,134.2 150.8,134.2 152.0,134.2 153.2,134.2 154.3,134.3 155.5,134.3 156.7,134.3 157.9,134.3 159.0,134.3 160.2,134.3 161.4,134.3 162.5,134.3 163.7,134.3 164.9,134.3 166.0,134.3 167.2,134.3 168.3,134.3 169.4,134.3 170.6,134.3 171.7,134.3 172.8,134.3 173.9,134.3 175.1,134.3 176.2,134.4 177.3,134.4 178.4,134.4 179.4,134.4 180.5,134.4 181.6,134.4 182.7,134.4 183.7,134.4 184.7,134.4 185.8,134.4 186.8,134.4 187.8,134.4 188.8,134.4 189.8,134.4 190.8,134.4 191.8,134.4 192.7,134.4 193.7,134.5 194.6,134.5 195.6,134.5 196.5,134.5 197.4,134.5 198.3,134.5 199.1,134.5 200.0,134.5 201.2,134.5 202.4,134.5 203.5,134.5 204.7,134.5 205.9,134.5 207.0,134.6 208.2,134.6 209.3,134.6 210.4,134.6 211.6,134.6 212.7,134.6 213.8,134.6 214.9,134.6 216.0,134.6 217.1,134.6 218.2,134.7 219.3,134.7 220.4,134.7 221.5,134.7 222.5,134.7 223.6,134.7 224.6,134.7 225.7,134.7 226.7,134.7 227.8,134.8 228.8,134.8 229.9,134.8 230.9,134.8 231.9,134.8 232.9,134.8 233.9,134.8 234.9,134.8 235.9,134.8 236.9,134.9 237.9,134.9 238.9,134.9 239.9,134.9 240.9,134.9 241.9,134.9 242.8,134.9 243.8,134.9 244.8,135.0 245.7,135.0 246.7,135.0 247.6,135.0 248.6,135.0 249.5,135.0 250.5,135.0 251.4,135.0 252.3,135.1 253.3,135.1 254.2,135.1 255.1,135.1 256.0,135.1 257.0,135.1 257.9,135.1 258.8,135.2 259.7,135.2 260.6,135.2 261.5,135.2 262.4,135.2 263.3,135.2 264.2,135.2 265.1,135.2 266.0,135.3 266.9,135.3 267.8,135.3 268.6,135.3 269.5,135.3 270.4,135.3 271.3,135.3 272.2,135.4 273.0,135.4 273.9,135.4 274.8,135.4 275.7,135.4 276.5,135.4 277.4,135.5 278.3,135.5 279.1,135.5 280.0,135.5 281.1,135.5 282.3,135.5 283.4,135.6 284.6,135.6 285.7,135.6 286.8,135.6 288.0,135.6 289.1,135.7 290.2,135.7 291.3,135.7 292.4,135.7 293.5,135.7 294.6,135.8 295.7,135.8 296.8,135.8 297.9,135.8 299.0,135.9 300.1,135.9 301.2,135.9 302.2,135.9 303.3,135.9 304.4,136.0 305.4,136.0 306.5,136.0 307.5,136.0 308.5,136.1 309.6,136.1 310.6,136.1 311.6,136.1 312.6,136.1 313.6,136.2 314.6,136.2 315.6,136.2 316.6,136.2 317.6,136.3 318.5,136.3 319.5,136.3 320.5,136.3 321.4,136.4 322.3,136.4 323.3,136.4 324.2,136.4 325.1,136.5 326.0,136.5 326.9,136.5 327.8,136.5 328.7,136.6 329.5,136.6 330.4,136.6 331.3,136.7 332.1,136.7 332.9,136.7 333.8,136.8 334.6,136.8 335.4,136.8 336.2,136.8 337.0,136.9 337.7,136.9 338.5,136.9 339.3,137.0 340.0,137.0 341.4,137.1 342.7,137.1 344.0,137.2 345.3,137.3 346.5,137.3 347.6,137.4 348.8,137.5 349.8,137.6 350.9,137.6 351.9,137.7 352.9,137.8 353.9,137.9 354.8,137.9 355.7,138.0 356.6,138.1 357.5,138.2 358.3,138.3 359.2,138.4 360.0,138.4 360.8,138.5 361.6,138.6 362.4,138.7 363.1,138.8 363.9,138.9 364.7,138.9 365.4,139.0 366.2,139.1 366.9,139.2 367.7,139.3 368.5,139.3 369.2,139.4 370.0,139.5 371.1,139.6 372.2,139.7 373.3,139.8 374.4,140.0 375.4,140.1 376.4,140.2 377.4,140.3 378.4,140.4 379.4,140.5 380.3,140.7 381.2,140.8 382.1,140.9 383.0,141.0 383.9,141.1 384.7,141.2 385.5,141.4 386.3,141.5 387.1,141.6 387.9,141.7 388.6,141.8 389.3,141.9 390.0,142.0 391.2,142.2 392.2,142.3 393.2,142.4 394.0,142.5 394.8,142.6 395.5,142.8 396.2,142.9 396.9,143.0 397.6,143.2 398.3,143.4 399.1,143.7 400.0,144.0 400.6,144.2 401.3,144.5 401.9,144.8 402.6,145.1 403.3,145.4 404.0,145.8 404.8,146.1 405.5,146.5 406.2,146.9 406.9,147.3 407.6,147.7 408.3,148.1 409.0,148.5 409.6,148.9 410.3,149.3 410.9,149.7 411.5,150.1 412.0,150.5 412.6,151.0 413.2,151.5 413.8,151.9 414.3,152.4 414.8,152.9 415.3,153.4 415.7,153.8 416.2,154.3 416.6,154.9 417.0,155.4 417.4,156.0 417.8,156.6 418.2,157.2 418.6,157.8 419.0,158.5 419.3,159.1 419.7,159.7 420.0,160.4 420.3,161.1 420.6,161.7 420.9,162.5 421.2,163.2 421.5,163.9 421.8,164.7 422.0,165.4 422.3,166.2 422.6,167.0 422.8,167.7 423.1,168.5 423.3,169.3 423.5,170.0 423.8,170.8 424.0,171.5 424.2,172.3 424.5,173.0 424.7,173.7 424.9,174.4 425.1,175.1 425.3,175.8 425.5,176.4 425.7,177.1 425.8,177.8 426.0,178.6 426.2,179.4 426.3,180.3 426.5,181.2 426.7,182.2 426.8,183.3 427.0,184.5 427.1,185.2 427.2,185.9 427.3,186.7 427.4,187.4 427.5,188.2 427.5,189.0 427.6,189.8 427.7,190.7 427.8,191.5 427.9,192.4 428.0,193.3 428.0,194.2 428.1,195.1 428.2,196.0 428.3,197.0 428.4,197.9 428.4,198.9 428.5,199.9 428.6,200.9 428.7,201.9 428.8,202.9 428.9,204.0 429.0,205.0 429.0,206.1 429.1,207.1 429.2,208.2 429.3,209.3 429.4,210.4 429.5,211.5 429.6,212.3 429.6,213.1 429.7,213.9 429.8,214.7 429.9,215.5 429.9,216.4 430.0,217.2 430.1,218.0 430.2,218.8 430.3,219.7 430.3,220.5 430.4,221.3 430.5,222.2 430.6,223.1 430.7,223.9 430.8,224.8 430.8,225.7 430.9,226.6 431.0,227.4 431.1,228.3 431.2,229.3 431.3,230.2 431.3,231.1 431.4,232.0 431.5,233.0 431.6,233.9 431.7,234.9 431.7,235.9 431.8,236.9 431.9,237.9 432.0,238.9 432.1,239.9 432.1,240.9 432.2,242.0 432.3,243.0 432.3,244.1 432.4,245.2 432.5,246.3 432.5,247.4 432.6,248.5 432.6,249.3 432.7,250.2 432.7,251.0 432.8,251.9 432.8,252.7 432.9,253.6 432.9,254.5 432.9,255.4 433.0,256.3 433.0,257.2 433.0,258.1 433.1,259.1 433.1,260.0 433.2,260.9 433.2,261.9 433.2,262.8 433.3,263.8 433.3,264.8 433.3,265.7 433.4,266.7 433.4,267.7 433.4,268.7 433.5,269.7 433.5,270.7 433.5,271.7 433.5,272.7 433.6,273.7 433.6,274.7 433.6,275.7 433.7,276.7 433.7,277.7 433.7,278.8 433.8,279.8 433.8,280.8 433.8,281.8 433.8,282.8 433.9,283.9 433.9,284.9 433.9,285.9 434.0,286.9 434.0,287.9 434.0,289.0 434.0,290.0 434.1,291.0 434.1,292.0 434.1,293.0 434.2,294.0 434.2,295.1 434.2,296.1 434.2,297.1 434.3,298.1 434.3,299.0 434.3,300.0 434.4,301.0 434.4,302.0 434.4,303.0 434.5,304.0 434.5,305.0 434.5,306.0 434.6,307.0 434.6,308.0 434.6,309.0 434.6,310.1 434.7,311.1 434.7,312.1 434.7,313.2 434.8,314.2 434.8,315.3 434.8,316.3 434.8,317.4 434.9,318.4 434.9,319.5 434.9,320.5 435.0,321.6 435.0,322.7 435.0,323.7 435.0,324.8 435.1,325.8 435.1,326.9 435.1,327.9 435.1,329.0 435.2,330.0 435.2,331.1 435.2,332.1 435.3,333.1 435.3,334.1 435.3,335.2 435.3,336.2 435.4,337.2 435.4,338.2 435.4,339.2 435.5,340.2 435.5,341.1 435.5,342.1 435.5,343.1 435.6,344.0 435.6,344.9 435.6,345.9 435.7,346.8 435.7,347.7 435.7,348.6 435.7,349.5 435.8,350.3 435.8,351.2 435.8,352.0 435.9,352.9 435.9,353.7 435.9,354.5 436.0,355.2 436.0,356.0 436.1,357.3 436.1,358.6 436.2,359.9 436.2,361.1 436.3,362.3 436.3,363.5 436.4,364.6 436.4,365.8 436.5,366.8 436.6,367.9 436.6,368.9 436.7,370.0 436.7,370.9 436.8,371.9 436.8,372.9 436.9,373.8 437.0,374.7 437.0,375.5 437.1,376.4 437.1,377.2 437.2,378.0 437.3,378.8 437.4,379.6 437.4,380.3 437.5,381.0 437.6,381.7 437.7,382.4 437.7,383.1 437.8,383.7 437.9,384.4 438.0,385.0 438.2,386.4 438.5,387.5 438.8,388.4 439.0,389.0 439.3,389.6 439.6,390.0 440.0,390.4 440.3,390.9 440.6,391.4 441.0,392.0 441.3,392.9 441.7,394.0 441.9,394.6 442.1,395.2 442.2,395.9 442.4,396.6 442.6,397.4 442.8,398.1 443.1,399.0 443.3,399.8 443.5,400.6 443.7,401.5 443.9,402.3 444.1,403.2 444.4,404.1 444.6,405.0 444.8,405.9 445.0,406.8 445.2,407.7 445.4,408.6 445.6,409.5 445.9,410.3 446.1,411.2 446.3,412.0 446.5,412.8 446.6,413.5 446.8,414.3 447.0,415.0 447.2,415.9 447.5,416.7 447.7,417.4 448.0,418.1 448.2,418.6 448.4,419.1 448.6,419.7 448.8,420.2 449.0,420.7 449.2,421.3 449.4,421.9 449.6,422.6 449.8,423.5 450.0,424.4 450.2,425.5 450.4,426.8 450.5,428.3 450.7,430.0 450.8,430.6 450.8,431.3 450.9,431.9 450.9,432.6 451.0,433.3 451.0,434.0 451.1,434.7 451.1,435.5 451.2,436.2 451.2,437.0 451.3,437.7 451.3,438.5 451.4,439.3 451.4,440.2 451.4,441.0 451.5,441.8 451.5,442.7 451.6,443.5 451.6,444.4 451.7,445.3 451.7,446.2 451.7,447.1 451.8,448.1 451.8,449.0 451.9,450.0 451.9,450.9 451.9,451.9 452.0,452.9 452.0,453.9 452.0,454.9 452.1,456.0 452.1,457.0 452.2,458.0 452.2,459.1 452.2,460.2 452.3,461.3 452.3,462.4 452.4,463.5 452.4,464.6 452.5,465.7 452.5,466.8 452.5,468.0 452.6,469.1 452.6,470.3 452.7,471.5 452.7,472.7 452.8,473.9 452.8,475.1 452.9,476.3 452.9,477.5 452.9,478.8 453.0,480.0 453.0,480.8 453.1,481.6 453.1,482.4 453.1,483.2 453.2,484.0 453.2,484.9 453.2,485.7 453.3,486.5 453.3,487.4 453.3,488.3 453.4,489.1 453.4,490.0 453.4,490.9 453.5,491.8 453.5,492.7 453.5,493.6 453.6,494.5 453.6,495.4 453.6,496.4 453.7,497.3 453.7,498.2 453.7,499.2 453.8,500.1 453.8,501.1 453.9,502.0 453.9,503.0 453.9,503.9 454.0,504.9 454.0,505.9 454.0,506.9 454.1,507.9 454.1,508.8 454.1,509.8 454.2,510.8 454.2,511.8 454.3,512.8 454.3,513.8 454.3,514.8 454.4,515.8 454.4,516.9 454.4,517.9 454.5,518.9 454.5,519.9 454.5,520.9 454.6,521.9 454.6,523.0 454.7,524.0 454.7,525.0 454.7,526.0 454.8,527.1 454.8,528.1 454.8,529.1 454.9,530.1 454.9,531.2 455.0,532.2 455.0,533.2 455.0,534.2 455.1,535.2 455.1,536.3 455.1,537.3 455.2,538.3 455.2,539.3 455.3,540.3 455.3,541.4 455.3,542.4 455.4,543.4 455.4,544.4 455.4,545.4 455.5,546.4 455.5,547.4 455.6,548.4 455.6,549.4 455.6,550.4 455.7,551.3 455.7,552.3 455.7,553.3 455.8,554.3 455.8,555.2 455.9,556.2 455.9,557.2 455.9,558.1 456.0,559.1 456.0,560.0 456.0,561.0 456.1,562.0 456.1,563.1 456.2,564.1 456.2,565.2 456.2,566.3 456.3,567.4 456.3,568.6 456.3,569.7 456.4,570.9 456.4,572.1 456.4,573.3 456.5,574.5 456.5,575.7 456.6,576.9 456.6,578.1 456.6,579.4 456.7,580.6 456.7,581.9 456.7,583.2 456.8,584.4 456.8,585.7 456.8,587.0 456.9,588.3 456.9,589.5 457.0,590.8 457.0,592.1 457.0,593.4 457.1,594.7 457.1,596.0 457.1,597.2 457.2,598.5 457.2,599.8 457.2,601.0 457.3,602.3 457.3,603.5 457.3,604.7 457.4,605.9 457.4,607.2 457.5,608.3 457.5,609.5 457.5,610.7 457.6,611.9 457.6,613.0 457.6,614.1 457.7,615.2 457.7,616.3 457.8,617.4 457.8,618.4 457.8,619.4 457.9,620.5 457.9,621.4 457.9,622.4 458.0,623.3 458.0,624.2 458.1,625.1 458.1,626.0 458.1,626.8 458.2,627.6 458.2,628.4 458.2,629.1 458.3,629.8 458.3,630.5 458.4,631.1 458.4,631.7 458.4,632.3 458.5,632.8 458.5,633.3 458.6,633.7 458.6,634.2 458.7,634.5 458.7,634.9 458.7,635.2 458.8,635.4 458.8,635.6 458.9,635.8 458.9,635.9 459.0,636.0 459.0,636.0 459.0,636.0 459.1,635.9 459.1,635.8 459.2,635.6 459.2,635.4 459.3,635.1 459.3,634.8 459.4,634.5 459.4,634.1 459.5,633.7 459.5,633.2 459.5,632.7 459.6,632.2 459.6,631.6 459.7,631.0 459.7,630.4 459.8,629.7 459.8,629.0 459.9,628.2 459.9,627.4 460.0,626.6 460.0,625.8 460.1,624.9 460.1,624.0 460.2,623.1 460.2,622.2 460.3,621.2 460.3,620.2 460.4,619.2 460.4,618.1 460.5,617.1 460.5,616.0 460.6,614.9 460.6,613.8 460.7,612.7 460.7,611.5 460.8,610.4 460.8,609.2 460.9,608.0 460.9,606.8 461.0,605.6 461.0,604.4 461.1,603.2 461.1,601.9 461.2,600.7 461.2,599.4 461.3,598.2 461.4,596.9 461.4,595.6 461.5,594.4 461.5,593.1 461.6,591.8 461.6,590.6 461.7,589.3 461.7,588.0 461.8,586.8 461.8,585.5 461.9,584.3 461.9,583.0 462.0,581.8 462.0,580.6 462.1,579.3 462.1,578.1 462.2,576.9 462.2,575.7 462.3,574.6 462.3,573.4 462.4,572.3 462.4,571.1 462.5,570.0 462.5,568.9 462.6,567.8 462.6,566.8 462.7,565.7 462.7,564.7 462.8,563.7 462.8,562.8 462.9,561.8 462.9,560.9 463.0,560.0 463.1,559.0 463.1,558.0 463.2,556.9 463.2,555.9 463.3,554.9 463.3,553.8 463.4,552.8 463.5,551.8 463.5,550.7 463.6,549.7 463.6,548.6 463.7,547.6 463.8,546.6 463.8,545.5 463.9,544.5 463.9,543.5 464.0,542.4 464.0,541.4 464.1,540.3 464.2,539.3 464.2,538.3 464.3,537.2 464.3,536.2 464.4,535.2 464.4,534.2 464.5,533.2 464.6,532.1 464.6,531.1 464.7,530.1 464.7,529.1 464.8,528.1 464.9,527.1 464.9,526.1 465.0,525.1 465.0,524.1 465.1,523.2 465.1,522.2 465.2,521.2 465.3,520.2 465.3,519.3 465.4,518.3 465.4,517.4 465.5,516.4 465.6,515.5 465.6,514.6 465.7,513.7 465.7,512.8 465.8,511.9 465.8,511.0 465.9,510.1 466.0,509.2 466.0,508.3 466.1,507.5 466.1,506.6 466.2,505.8 466.2,504.9 466.3,504.1 466.4,503.3 466.4,502.5 466.5,501.7 466.5,500.9 466.6,500.1 466.7,499.3 466.7,498.6 466.8,497.9 466.8,497.1 466.9,496.4 466.9,495.7 467.0,495.0 467.1,493.6 467.2,492.3 467.3,491.0 467.5,489.8 467.6,488.6 467.7,487.4 467.8,486.3 467.9,485.2 468.0,484.1 468.1,483.1 468.3,482.1 468.4,481.1 468.5,480.2 468.6,479.3 468.7,478.4 468.8,477.6 468.9,476.8 469.1,475.9 469.2,475.2 469.3,474.4 469.4,473.7 469.5,472.9 469.6,472.2 469.8,471.5 469.9,470.8 470.0,470.1 470.1,469.5 470.2,468.8 470.4,468.2 470.5,467.5 470.6,466.9 470.7,466.3 470.9,465.6 471.0,465.0 471.2,463.8 471.5,462.7 471.7,461.6 471.9,460.6 472.2,459.6 472.4,458.6 472.6,457.7 472.9,456.9 473.1,456.1 473.4,455.4 473.6,454.7 473.9,454.1 474.2,453.6 474.5,453.2 474.9,452.8 475.2,452.4 475.6,452.2 476.0,452.0 476.4,451.9 476.9,452.0 477.4,452.2 477.9,452.4 478.5,452.8 479.0,453.3 479.6,453.8 480.2,454.4 480.8,455.0 481.4,455.6 482.0,456.2 482.6,456.9 483.2,457.5 483.8,458.1 484.4,458.7 484.9,459.2 485.5,459.6 486.0,460.0 486.8,460.5 487.5,460.9 488.2,461.4 488.8,461.8 489.5,462.1 490.1,462.5 490.8,462.8 491.5,463.1 492.2,463.3 492.9,463.5 493.7,463.6 494.6,463.7 495.4,463.7 496.2,463.6 497.1,463.4 497.9,463.1 498.8,462.8 499.8,462.4 500.7,462.1 501.6,461.8 502.6,461.5 503.6,461.3 504.5,461.2 505.4,461.2 506.4,461.3 507.3,461.6 507.8,461.8 508.3,462.0 508.8,462.3 509.3,462.6 509.8,462.8 510.3,463.1 510.8,463.5 511.3,463.8 511.8,464.2 512.3,464.6 512.8,465.0 513.3,465.4 513.8,465.9 514.3,466.4 514.8,466.9 515.3,467.5 515.8,468.1 516.3,468.7 516.8,469.3 517.3,470.0 517.8,470.8 518.4,471.5 518.9,472.3 519.4,473.1 520.0,474.0 520.3,474.5 520.6,475.0 520.9,475.5 521.2,476.1 521.5,476.6 521.9,477.2 522.2,477.8 522.5,478.4 522.8,479.1 523.2,479.7 523.5,480.4 523.8,481.1 524.2,481.8 524.5,482.5 524.8,483.2 525.2,483.9 525.5,484.6 525.9,485.4 526.2,486.1 526.6,486.9 526.9,487.6 527.3,488.4 527.6,489.1 527.9,489.9 528.3,490.7 528.6,491.4 529.0,492.2 529.3,493.0 529.6,493.7 530.0,494.5 530.3,495.2 530.6,496.0 530.9,496.7 531.3,497.5 531.6,498.2 531.9,498.9 532.2,499.6 532.5,500.3 532.8,501.0 533.1,501.7 533.4,502.4 533.7,503.0 534.0,503.6 534.2,504.3 534.5,504.9 534.7,505.4 535.0,506.0 535.4,506.9 535.8,507.8 536.2,508.8 536.6,509.6 536.9,510.5 537.3,511.4 537.6,512.3 538.0,513.1 538.3,514.0 538.6,514.8 538.9,515.6 539.2,516.4 539.5,517.2 539.8,517.9 540.1,518.6 540.4,519.4 540.6,520.1 540.9,520.7 541.2,521.4 541.4,522.0 541.7,522.6 541.9,523.2 542.2,523.7 542.4,524.2 542.7,524.7 542.9,525.2 543.2,525.6 543.4,526.0 544.4,527.4 545.2,528.1 546.0,528.3 546.8,528.2 547.6,527.8 548.7,527.4 549.2,527.2 549.7,526.9 550.2,526.5 550.8,526.0 551.4,525.5 552.0,525.0 552.6,524.4 553.2,523.9 553.8,523.3 554.5,522.8 555.2,522.3 555.8,521.9 556.5,521.5 557.3,521.2 558.0,521.0 558.8,520.9 559.6,520.9 560.4,521.0 561.3,521.2 562.1,521.4 563.0,521.7 564.0,522.0 564.9,522.3 565.8,522.5 566.7,522.8 567.6,523.0 568.5,523.1 569.4,523.2 570.2,523.2 571.0,523.0 571.6,522.8 572.2,522.7 572.7,522.5 573.3,522.3 573.8,522.1 574.3,521.8 574.8,521.6 575.3,521.3 575.8,521.0 576.3,520.6 576.8,520.2 577.3,519.7 577.9,519.2 578.4,518.6 579.0,517.9 579.6,517.2 580.2,516.4 580.9,515.6 581.6,514.6 581.9,514.2 582.2,513.7 582.5,513.3 582.8,512.8 583.2,512.3 583.5,511.7 583.8,511.2 584.2,510.6 584.5,510.0 584.9,509.4 585.2,508.8 585.6,508.2 585.9,507.5 586.3,506.9 586.7,506.2 587.0,505.5 587.4,504.9 587.8,504.2 588.2,503.5 588.5,502.8 588.9,502.0 589.3,501.3 589.7,500.6 590.1,499.9 590.5,499.2 590.9,498.4 591.3,497.7 591.6,497.0 592.0,496.2 592.4,495.5 592.8,494.8 593.2,494.1 593.6,493.4 594.0,492.7 594.4,492.0 594.8,491.3 595.2,490.6 595.6,489.9 596.0,489.3 596.3,488.6 596.7,488.0 597.1,487.3 597.5,486.7 597.9,486.1 598.2,485.6 598.6,485.0 599.1,484.3 599.5,483.6 600.0,483.0 600.4,482.3 600.9,481.6 601.4,480.9 601.9,480.2 602.4,479.5 602.9,478.8 603.3,478.1 603.8,477.5 604.3,476.8 604.8,476.1 605.3,475.4 605.8,474.8 606.3,474.1 606.8,473.5 607.3,472.9 607.8,472.2 608.2,471.6 608.7,471.0 609.2,470.4 609.7,469.9 610.1,469.3 610.6,468.8 611.0,468.3 611.5,467.7 611.9,467.3 612.3,466.8 612.7,466.4 613.1,465.9 613.5,465.5 613.9,465.2 614.3,464.8 614.6,464.5 615.0,464.2 615.3,463.9 615.6,463.7 616.7,463.1 617.6,462.9 618.4,463.0 619.0,463.4 619.6,464.0 620.1,464.8 620.6,465.6 621.0,466.5 621.5,467.3 622.0,468.0 622.4,468.5 622.8,468.9 623.2,469.2 623.5,469.6 623.8,470.0 624.1,470.4 624.4,470.9 624.7,471.6 625.0,472.4 625.3,473.4 625.7,474.6 626.0,476.0 626.1,476.6 626.3,477.1 626.4,477.7 626.5,478.3 626.7,478.9 626.8,479.5 626.9,480.2 627.1,480.8 627.2,481.5 627.4,482.2 627.5,482.9 627.6,483.6 627.8,484.3 627.9,485.1 628.1,485.9 628.2,486.7 628.4,487.5 628.5,488.4 628.7,489.2 628.8,490.1 628.9,491.1 629.1,492.0 629.2,493.0 629.3,494.0 629.5,495.1 629.6,496.1 629.7,497.2 629.8,498.4 630.0,499.6 630.1,500.8 630.2,502.0 630.3,503.3 630.4,504.6 630.5,506.0 630.5,506.7 630.6,507.5 630.6,508.2 630.7,509.0 630.7,509.7 630.8,510.5 630.8,511.3 630.9,512.1 630.9,513.0 631.0,513.8 631.0,514.6 631.0,515.5 631.1,516.4 631.1,517.2 631.1,518.1 631.2,519.0 631.2,519.9 631.3,520.8 631.3,521.8 631.3,522.7 631.4,523.6 631.4,524.6 631.4,525.6 631.4,526.5 631.5,527.5 631.5,528.5 631.5,529.5 631.6,530.4 631.6,531.4 631.6,532.5 631.7,533.5 631.7,534.5 631.7,535.5 631.7,536.5 631.8,537.6 631.8,538.6 631.8,539.6 631.8,540.7 631.9,541.7 631.9,542.8 631.9,543.8 632.0,544.9 632.0,545.9 632.0,547.0 632.0,548.0 632.1,549.1 632.1,550.1 632.1,551.2 632.1,552.3 632.2,553.3 632.2,554.4 632.2,555.4 632.2,556.5 632.3,557.5 632.3,558.6 632.3,559.6 632.3,560.7 632.4,561.7 632.4,562.8 632.4,563.8 632.5,564.9 632.5,565.9 632.5,566.9 632.5,568.0 632.6,569.0 632.6,570.0 632.6,570.9 632.7,571.9 632.7,572.9 632.7,573.8 632.7,574.8 632.8,575.8 632.8,576.8 632.8,577.8 632.9,578.8 632.9,579.8 632.9,580.8 632.9,581.8 633.0,582.8 633.0,583.8 633.0,584.9 633.0,585.9 633.1,586.9 633.1,588.0 633.1,589.0 633.2,590.1 633.2,591.1 633.2,592.1 633.2,593.2 633.3,594.2 633.3,595.3 633.3,596.3 633.4,597.4 633.4,598.4 633.4,599.5 633.4,600.5 633.5,601.6 633.5,602.6 633.5,603.7 633.5,604.7 633.6,605.8 633.6,606.8 633.6,607.9 633.7,608.9 633.7,610.0 633.7,611.0 633.7,612.0 633.8,613.0 633.8,614.1 633.8,615.1 633.8,616.1 633.9,617.1 633.9,618.1 633.9,619.1 633.9,620.1 634.0,621.1 634.0,622.1 634.0,623.0 634.1,624.0 634.1,625.0 634.1,625.9 634.1,626.9 634.2,627.8 634.2,628.8 634.2,629.7 634.2,630.6 634.3,631.5 634.3,632.4 634.3,633.3 634.3,634.2 634.4,635.0 634.4,635.9 634.4,636.7 634.4,637.6 634.5,638.4 634.5,639.2 634.5,640.0 634.5,641.3 634.6,642.6 634.6,644.0 634.6,645.3 634.7,646.7 634.7,648.1 634.7,649.5 634.8,650.9 634.8,652.3 634.8,653.7 634.9,655.1 634.9,656.5 634.9,657.9 635.0,659.3 635.0,660.7 635.0,662.1 635.0,663.4 635.1,664.8 635.1,666.1 635.1,667.3 635.2,668.6 635.2,669.8 635.2,671.0 635.2,672.1 635.3,673.3 635.3,674.3 635.3,675.3 635.4,676.3 635.4,677.2 635.4,678.1 635.5,678.9 635.5,679.6 635.5,680.3 635.6,681.0 635.6,681.5 635.6,682.0 635.7,682.4 635.7,682.7 635.8,683.0 635.8,683.2 635.9,683.3 635.9,683.3 635.9,683.2 636.0,683.0 636.0,682.8 636.1,682.6 636.1,682.3 636.1,682.0 636.2,681.6 636.2,681.2 636.3,680.8 636.3,680.3 636.3,679.8 636.4,679.2 636.4,678.6 636.5,678.0 636.5,677.3 636.6,676.6 636.6,675.8 636.7,675.0 636.7,674.2 636.8,673.4 636.8,672.5 636.8,671.6 636.9,670.7 636.9,669.7 637.0,668.8 637.0,667.8 637.1,666.7 637.1,665.7 637.2,664.6 637.2,663.6 637.3,662.5 637.3,661.4 637.4,660.2 637.4,659.1 637.5,657.9 637.6,656.8 637.6,655.6 637.7,654.4 637.7,653.2 637.8,652.0 637.8,650.8 637.9,649.6 637.9,648.4 638.0,647.1 638.0,645.9 638.1,644.7 638.1,643.5 638.2,642.3 638.2,641.0 638.2,639.8 638.3,638.6 638.3,637.4 638.4,636.2 638.4,635.0 638.5,633.9 638.5,632.7 638.6,631.6 638.6,630.4 638.7,629.3 638.7,628.2 638.7,627.1 638.8,626.0 638.8,625.0 638.9,623.9 638.9,622.9 638.9,621.9 639.0,620.9 639.0,620.0 639.0,619.0 639.1,618.0 639.1,617.0 639.1,616.0 639.2,615.0 639.2,614.0 639.2,613.0 639.3,612.0 639.3,611.0 639.3,610.0 639.4,609.0 639.4,608.0 639.4,607.0 639.5,606.0 639.5,605.0 639.5,604.0 639.6,603.1 639.6,602.1 639.6,601.1 639.6,600.1 639.7,599.1 639.7,598.1 639.7,597.2 639.7,596.2 639.8,595.2 639.8,594.2 639.8,593.2 639.8,592.3 639.9,591.3 639.9,590.3 639.9,589.3 639.9,588.3 640.0,587.4 640.0,586.4 640.0,585.4 640.0,584.4 640.1,583.5 640.1,582.5 640.1,581.5 640.1,580.5 640.1,579.6 640.2,578.6 640.2,577.6 640.2,576.6 640.2,575.7 640.2,574.7 640.3,573.7 640.3,572.7 640.3,571.8 640.3,570.8 640.3,569.8 640.3,568.8 640.4,567.8 640.4,566.9 640.4,565.9 640.4,564.9 640.4,563.9 640.5,562.9 640.5,562.0 640.5,561.0 640.5,560.0 640.5,559.0 640.5,558.0 640.5,557.0 640.5,556.0 640.6,555.0 640.6,554.1 640.6,553.1 640.6,552.1 640.6,551.1 640.6,550.2 640.5,549.2 640.5,548.2 640.5,547.3 640.5,546.3 640.5,545.4 640.5,544.4 640.5,543.4 640.5,542.5 640.5,541.5 640.5,540.6 640.5,539.6 640.4,538.6 640.4,537.7 640.4,536.7 640.4,535.8 640.4,534.8 640.4,533.8 640.4,532.9 640.4,531.9 640.3,530.9 640.3,530.0 640.3,529.0 640.3,528.0 640.3,527.0 640.3,526.1 640.3,525.1 640.3,524.1 640.3,523.1 640.3,522.1 640.3,521.1 640.3,520.1 640.3,519.1 640.3,518.1 640.4,517.1 640.4,516.1 640.4,515.0 640.4,514.0 640.4,513.0 640.5,511.9 640.5,510.9 640.5,509.8 640.6,508.8 640.6,507.7 640.7,506.6 640.7,505.5 640.8,504.4 640.8,503.3 640.9,502.2 640.9,501.1 641.0,500.0 641.1,499.2 641.1,498.4 641.2,497.5 641.2,496.7 641.3,495.8 641.4,494.9 641.4,494.0 641.5,493.2 641.6,492.3 641.6,491.3 641.7,490.4 641.8,489.5 641.9,488.6 641.9,487.6 642.0,486.7 642.1,485.7 642.2,484.8 642.3,483.8 642.4,482.8 642.5,481.9 642.6,480.9 642.7,479.9 642.8,478.9 642.9,477.9 643.0,476.9 643.1,475.9 643.2,474.9 643.3,473.9 643.4,472.9 643.5,471.9 643.6,470.9 643.7,469.9 643.8,468.9 643.9,467.9 644.0,466.9 644.1,465.8 644.2,464.8 644.3,463.8 644.4,462.8 644.6,461.8 644.7,460.8 644.8,459.8 644.9,458.8 645.0,457.8 645.1,456.8 645.2,455.8 645.3,454.9 645.5,453.9 645.6,452.9 645.7,451.9 645.8,451.0 645.9,450.0 646.0,449.0 646.1,448.1 646.2,447.2 646.4,446.2 646.5,445.3 646.6,444.4 646.7,443.5 646.8,442.6 646.9,441.7 647.0,440.8 647.1,439.9 647.2,439.1 647.3,438.2 647.4,437.4 647.5,436.5 647.6,435.7 647.7,434.9 647.8,434.1 647.9,433.3 648.0,432.6 648.1,431.8 648.2,431.1 648.3,430.3 648.4,429.6 648.5,428.9 648.6,428.2 648.7,427.5 648.8,426.9 648.8,426.2 648.9,425.6 649.0,425.0 649.2,423.4 649.4,421.9 649.6,420.6 649.8,419.4 650.0,418.2 650.2,417.2 650.4,416.3 650.6,415.4 650.8,414.6 651.0,413.9 651.2,413.2 651.4,412.6 651.5,412.0 651.7,411.5 651.9,410.9 652.0,410.4 652.2,409.9 652.4,409.4 652.5,408.9 652.7,408.3 652.8,407.8 653.0,407.2 653.1,406.5 653.2,405.8 653.4,405.0 653.5,404.2 653.6,403.3 653.8,402.3 653.9,401.2 654.0,400.0 654.1,399.3 654.1,398.6 654.2,397.8 654.2,397.1 654.3,396.4 654.4,395.6 654.4,394.9 654.5,394.1 654.5,393.4 654.6,392.6 654.6,391.9 654.6,391.1 654.7,390.3 654.7,389.5 654.8,388.7 654.8,387.9 654.8,387.1 654.9,386.3 654.9,385.5 654.9,384.6 655.0,383.8 655.0,382.9 655.0,382.1 655.1,381.2 655.1,380.3 655.1,379.4 655.2,378.5 655.2,377.5 655.2,376.6 655.2,375.6 655.3,374.6 655.3,373.6 655.3,372.6 655.4,371.6 655.4,370.6 655.4,369.5 655.4,368.4 655.5,367.4 655.5,366.2 655.5,365.1 655.6,364.0 655.6,362.8 655.6,361.6 655.7,360.4 655.7,359.2 655.7,357.9 655.8,356.7 655.8,355.4 655.9,354.1 655.9,352.7 656.0,351.4 656.0,350.0 656.0,349.3 656.1,348.5 656.1,347.7 656.1,346.9 656.1,346.1 656.2,345.3 656.2,344.5 656.2,343.7 656.2,342.9 656.3,342.0 656.3,341.1 656.3,340.3 656.3,339.4 656.4,338.5 656.4,337.6 656.4,336.7 656.4,335.8 656.5,334.9 656.5,333.9 656.5,333.0 656.5,332.0 656.6,331.1 656.6,330.1 656.6,329.2 656.6,328.2 656.7,327.2 656.7,326.2 656.7,325.2 656.8,324.2 656.8,323.2 656.8,322.2 656.8,321.2 656.9,320.1 656.9,319.1 656.9,318.1 656.9,317.0 657.0,316.0 657.0,315.0 657.0,313.9 657.1,312.9 657.1,311.8 657.1,310.8 657.1,309.7 657.2,308.6 657.2,307.6 657.2,306.5 657.3,305.4 657.3,304.4 657.3,303.3 657.3,302.2 657.4,301.2 657.4,300.1 657.4,299.0 657.5,298.0 657.5,296.9 657.5,295.8 657.6,294.8 657.6,293.7 657.6,292.6 657.6,291.6 657.7,290.5 657.7,289.5 657.7,288.4 657.8,287.4 657.8,286.3 657.8,285.3 657.9,284.2 657.9,283.2 657.9,282.2 658.0,281.1 658.0,280.1 658.0,279.1 658.1,278.1 658.1,277.1 658.1,276.0 658.2,275.0 658.2,274.1 658.2,273.1 658.3,272.1 658.3,271.1 658.3,270.1 658.4,269.2 658.4,268.2 658.5,267.3 658.5,266.3 658.5,265.4 658.6,264.5 658.6,263.6 658.6,262.7 658.7,261.8 658.7,260.9 658.8,260.0 658.8,259.2 658.8,258.3 658.9,257.5 658.9,256.6 659.0,255.8 659.0,255.0 659.1,253.8 659.1,252.7 659.2,251.5 659.2,250.4 659.3,249.3 659.4,248.2 659.4,247.0 659.5,245.9 659.6,244.8 659.6,243.7 659.7,242.6 659.7,241.5 659.8,240.5 659.9,239.4 659.9,238.3 660.0,237.3 660.1,236.2 660.2,235.2 660.2,234.1 660.3,233.1 660.4,232.1 660.4,231.1 660.5,230.1 660.6,229.1 660.6,228.1 660.7,227.1 660.8,226.1 660.9,225.1 660.9,224.2 661.0,223.2 661.1,222.3 661.2,221.3 661.2,220.4 661.3,219.4 661.4,218.5 661.5,217.6 661.5,216.7 661.6,215.8 661.7,214.9 661.8,214.0 661.8,213.1 661.9,212.2 662.0,211.4 662.1,210.5 662.2,209.7 662.2,208.8 662.3,208.0 662.4,207.1 662.5,206.3 662.6,205.5 662.6,204.7 662.7,203.9 662.8,203.1 662.9,202.3 663.0,201.5 663.0,200.7 663.1,200.0 663.2,199.2 663.3,198.5 663.4,197.7 663.4,197.0 663.5,196.2 663.6,195.5 663.7,194.8 663.8,194.1 663.8,193.4 663.9,192.7 664.0,192.0 664.2,190.7 664.3,189.5 664.5,188.3 664.6,187.1 664.7,186.0 664.9,184.9 665.0,183.9 665.2,182.8 665.3,181.8 665.5,180.9 665.6,179.9 665.8,179.0 665.9,178.1 666.1,177.2 666.2,176.4 666.4,175.6 666.5,174.8 666.7,174.0 666.8,173.2 667.0,172.5 667.2,171.8 667.3,171.1 667.5,170.4 667.7,169.7 667.8,169.0 668.0,168.3 668.2,167.7 668.4,167.0 668.6,166.4 668.8,165.8 669.0,165.1 669.2,164.5 669.4,163.9 669.6,163.2 669.8,162.6 670.0,162.0 670.3,161.1 670.6,160.3 671.0,159.4 671.3,158.7 671.6,157.9 671.9,157.2 672.2,156.5 672.6,155.8 672.9,155.1 673.2,154.5 673.6,153.9 673.9,153.3 674.3,152.7 674.7,152.2 675.1,151.6 675.5,151.1 675.9,150.6 676.4,150.1 676.8,149.6 677.3,149.2 677.8,148.7 678.3,148.3 678.8,147.9 679.4,147.4 680.0,147.0 680.6,146.6 681.2,146.2 681.8,145.9 682.5,145.6 683.1,145.2 683.8,144.9 684.5,144.7 685.2,144.4 685.9,144.1 686.6,143.9 687.4,143.7 688.2,143.5 688.9,143.2 689.7,143.1 690.5,142.9 691.3,142.7 692.2,142.5 693.0,142.3 693.8,142.2 694.7,142.0 695.6,141.8 696.4,141.7 697.3,141.5 698.2,141.3 699.1,141.2 700.0,141.0 700.8,140.9 701.6,140.7 702.3,140.6 703.1,140.4 703.9,140.3 704.7,140.2 705.5,140.1 706.3,139.9 707.1,139.8 707.9,139.7 708.7,139.6 709.5,139.5 710.4,139.4 711.2,139.3 712.1,139.2 712.9,139.1 713.8,139.0 714.7,138.9 715.6,138.9 716.6,138.8 717.5,138.7 718.5,138.6 719.5,138.5 720.5,138.5 721.5,138.4 722.5,138.3 723.6,138.2 724.7,138.2 725.8,138.1 727.0,138.0 727.8,137.9 728.6,137.9 729.4,137.9 730.3,137.8 731.1,137.8 732.0,137.7 732.8,137.7 733.7,137.6 734.6,137.6 735.4,137.5 736.3,137.5 737.2,137.5 738.2,137.4 739.1,137.4 740.0,137.4 741.0,137.3 741.9,137.3 742.9,137.2 743.8,137.2 744.8,137.2 745.8,137.1 746.8,137.1 747.7,137.1 748.7,137.0 749.7,137.0 750.8,137.0 751.8,137.0 752.8,136.9 753.8,136.9 754.9,136.9 755.9,136.8 757.0,136.8 758.0,136.8 759.1,136.8 760.2,136.7 761.2,136.7 762.3,136.7 763.4,136.7 764.5,136.6 765.6,136.6 766.7,136.6 767.8,136.6 768.9,136.5 770.0,136.5 770.9,136.5 771.8,136.5 772.7,136.4 773.6,136.4 774.5,136.4 775.4,136.4 776.3,136.4 777.2,136.3 778.1,136.3 779.0,136.3 779.9,136.3 780.8,136.3 781.7,136.3 782.7,136.2 783.6,136.2 784.5,136.2 785.5,136.2 786.4,136.2 787.3,136.2 788.3,136.2 789.2,136.1 790.2,136.1 791.1,136.1 792.1,136.1 793.1,136.1 794.0,136.1 795.0,136.1 796.0,136.0 797.0,136.0 798.0,136.0 799.0,136.0 800.0,136.0 801.0,136.0 802.0,136.0 803.0,136.0 804.1,135.9 805.1,135.9 806.1,135.9 807.2,135.9 808.2,135.9 809.3,135.9 810.4,135.9 811.4,135.9 812.5,135.8 813.6,135.8 814.7,135.8 815.8,135.8 816.9,135.8 818.1,135.8 819.2,135.8 820.3,135.8 821.5,135.7 822.7,135.7 823.8,135.7 825.0,135.7 825.9,135.7 826.7,135.7 827.6,135.7 828.5,135.7 829.3,135.7 830.2,135.6 831.1,135.6 832.0,135.6 832.9,135.6 833.7,135.6 834.6,135.6 835.5,135.6 836.4,135.6 837.3,135.6 838.2,135.6 839.1,135.5 840.0,135.5 840.9,135.5 841.8,135.5 842.7,135.5 843.6,135.5 844.5,135.5 845.4,135.5 846.3,135.5 847.3,135.5 848.2,135.5 849.1,135.5 850.0,135.4 851.0,135.4 851.9,135.4 852.9,135.4 853.8,135.4 854.8,135.4 855.7,135.4 856.7,135.4 857.7,135.4 858.6,135.4 859.6,135.4 860.6,135.3 861.6,135.3 862.6,135.3 863.6,135.3 864.6,135.3 865.6,135.3 866.6,135.3 867.6,135.3 868.6,135.3 869.7,135.3 870.7,135.3 871.7,135.3 872.8,135.2 873.8,135.2 874.9,135.2 876.0,135.2 877.0,135.2 878.1,135.2 879.2,135.2 880.3,135.2 881.4,135.2 882.5,135.2 883.6,135.1 884.7,135.1 885.9,135.1 887.0,135.1 888.1,135.1 889.3,135.1 890.5,135.1 891.6,135.1 892.8,135.1 894.0,135.1 895.2,135.0 896.4,135.0 897.6,135.0 898.8,135.0 900.0,135.0 900.8,135.0 901.7,135.0 902.6,135.0 903.5,135.0 904.4,135.0 905.3,135.0 906.2,134.9 907.1,134.9 908.1,134.9 909.0,134.9 910.0,134.9 911.0,134.9 912.0,134.9 913.0,134.9 914.0,134.9 915.0,134.9 916.1,134.9 917.1,134.8 918.2,134.8 919.2,134.8 920.3,134.8 921.4,134.8 922.5,134.8 923.5,134.8 924.6,134.8 925.7,134.8 926.9,134.8 928.0,134.7 929.1,134.7 930.2,134.7 931.4,134.7 932.5,134.7 933.6,134.7 934.8,134.7 935.9,134.7 937.1,134.7 938.2,134.6 939.4,134.6 940.6,134.6 941.7,134.6 942.9,134.6 944.0,134.6 945.2,134.6 946.4,134.6 947.6,134.6 948.7,134.6 949.9,134.5 951.1,134.5 952.2,134.5 953.4,134.5 954.6,134.5 955.7,134.5 956.9,134.5 958.0,134.5 959.2,134.5 960.3,134.4 961.5,134.4 962.6,134.4 963.8,134.4 964.9,134.4 966.0,134.4 967.2,134.4 968.3,134.4 969.4,134.4 970.5,134.4 971.6,134.3 972.7,134.3 973.8,134.3 974.9,134.3 976.0,134.3 977.0,134.3 978.1,134.3 979.1,134.3 980.2,134.3 981.2,134.3 982.2,134.2 983.2,134.2 984.2,134.2 985.2,134.2 986.2,134.2 987.2,134.2 988.1,134.2 989.1,134.2 990.0,134.2 990.9,134.2 991.9,134.2 992.7,134.1 993.6,134.1 994.5,134.1 995.4,134.1 996.2,134.1 997.0,134.1 997.8,134.1 998.6,134.1 999.4,134.1 1000.2,134.1 1000.9,134.1 1001.6,134.1 1002.4,134.1 1003.1,134.1 1003.7,134.0 1004.4,134.0 1005.0,134.0 1005.7,134.0 1006.3,134.0 1006.9,134.0 1007.4,134.0 1008.0,134.0 1008.5,134.0 1009.0,134.0"/>
<polyline fill="none" stroke="#b07818" stroke-dasharray="7 9" stroke-width="1" shape-rendering="crispEdges" points="87.0,134.0 87.5,134.0 88.0,134.0 88.6,134.0 89.2,134.0 89.7,134.0 90.4,134.0 91.0,134.0 91.6,134.0 92.3,134.0 93.0,134.0 93.7,134.0 94.4,134.0 95.1,134.0 95.8,134.0 96.6,134.0 97.4,134.0 98.2,134.0 99.0,134.0 99.8,134.0 100.7,134.1 101.5,134.1 102.4,134.1 103.2,134.1 104.1,134.1 105.0,134.1 106.0,134.1 106.9,134.1 107.8,134.1 108.8,134.1 109.8,134.1 110.7,134.1 111.7,134.1 112.7,134.1 113.7,134.1 114.8,134.1 115.8,134.1 116.8,134.1 117.9,134.1 118.9,134.1 120.0,134.1 121.1,134.1 122.1,134.1 123.2,134.1 124.3,134.1 125.4,134.1 126.5,134.1 127.7,134.1 128.8,134.2 129.9,134.2 131.0,134.2 132.2,134.2 133.3,134.2 134.5,134.2 135.6,134.2 136.8,134.2 137.9,134.2 139.1,134.2 140.2,134.2 141.4,134.2 142.6,134.2 143.8,134.2 144.9,134.2 146.1,134.2 147.3,134.2 148.5,134.2 149.6,134.2 150.8,134.2 152.0,134.2 153.2,134.2 154.3,134.3 155.5,134.3 156.7,134.3 157.9,134.3 159.0,134.3 160.2,134.3 161.4,134.3 162.5,134.3 163.7,134.3 164.9,134.3 166.0,134.3 167.2,134.3 168.3,134.3 169.4,134.3 170.6,134.3 171.7,134.3 172.8,134.3 173.9,134.3 175.1,134.3 176.2,134.4 177.3,134.4 178.4,134.4 179.4,134.4 180.5,134.4 181.6,134.4 182.7,134.4 183.7,134.4 184.7,134.4 185.8,134.4 186.8,134.4 187.8,134.4 188.8,134.4 189.8,134.4 190.8,134.4 191.8,134.4 192.7,134.4 193.7,134.5 194.6,134.5 195.6,134.5 196.5,134.5 197.4,134.5 198.3,134.5 199.1,134.5 200.0,134.5 201.2,134.5 202.4,134.5 203.5,134.5 204.7,134.5 205.9,134.5 207.0,134.6 208.2,134.6 209.3,134.6 210.4,134.6 211.6,134.6 212.7,134.6 213.8,134.6 214.9,134.6 216.0,134.6 217.1,134.6 218.2,134.7 219.3,134.7 220.4,134.7 221.5,134.7 222.5,134.7 223.6,134.7 224.6,134.7 225.7,134.7 226.7,134.7 227.8,134.8 228.8,134.8 229.9,134.8 230.9,134.8 231.9,134.8 232.9,134.8 233.9,134.8 234.9,134.8 235.9,134.8 236.9,134.9 237.9,134.9 238.9,134.9 239.9,134.9 240.9,134.9 241.9,134.9 242.8,134.9 243.8,134.9 244.8,135.0 245.7,135.0 246.7,135.0 247.6,135.0 248.6,135.0 249.5,135.0 250.5,135.0 251.4,135.0 252.3,135.1 253.3,135.1 254.2,135.1 255.1,135.1 256.0,135.1 257.0,135.1 257.9,135.1 258.8,135.2 259.7,135.2 260.6,135.2 261.5,135.2 262.4,135.2 263.3,135.2 264.2,135.2 265.1,135.2 266.0,135.3 266.9,135.3 267.8,135.3 268.6,135.3 269.5,135.3 270.4,135.3 271.3,135.3 272.2,135.4 273.0,135.4 273.9,135.4 274.8,135.4 275.7,135.4 276.5,135.4 277.4,135.5 278.3,135.5 279.1,135.5 280.0,135.5 281.1,135.5 282.3,135.5 283.4,135.6 284.6,135.6 285.7,135.6 286.8,135.6 288.0,135.6 289.1,135.7 290.2,135.7 291.3,135.7 292.4,135.7 293.5,135.7 294.6,135.8 295.7,135.8 296.8,135.8 297.9,135.8 299.0,135.9 300.1,135.9 301.2,135.9 302.2,135.9 303.3,135.9 304.4,136.0 305.4,136.0 306.5,136.0 307.5,136.0 308.5,136.1 309.6,136.1 310.6,136.1 311.6,136.1 312.6,136.1 313.6,136.2 314.6,136.2 315.6,136.2 316.6,136.2 317.6,136.3 318.5,136.3 319.5,136.3 320.5,136.3 321.4,136.4 322.3,136.4 323.3,136.4 324.2,136.4 325.1,136.5 326.0,136.5 326.9,136.5 327.8,136.5 328.7,136.6 329.5,136.6 330.4,136.6 331.3,136.7 332.1,136.7 332.9,136.7 333.8,136.8 334.6,136.8 335.4,136.8 336.2,136.8 337.0,136.9 337.7,136.9 338.5,136.9 339.3,137.0 340.0,137.0 341.4,137.1 342.7,137.1 344.0,137.2 345.3,137.3 346.5,137.3 347.6,137.4 348.8,137.5 349.8,137.6 350.9,137.6 351.9,137.7 352.9,137.8 353.9,137.9 354.8,137.9 355.7,138.0 356.6,138.1 357.5,138.2 358.3,138.3 359.2,138.4 360.0,138.4 360.8,138.5 361.6,138.6 362.4,138.7 363.1,138.8 363.9,138.9 364.7,138.9 365.4,139.0 366.2,139.1 366.9,139.2 367.7,139.3 368.5,139.3 369.2,139.4 370.0,139.5 371.1,139.6 372.2,139.7 373.3,139.8 374.4,140.0 375.4,140.1 376.4,140.2 377.4,140.3 378.4,140.4 379.4,140.5 380.3,140.7 381.2,140.8 382.1,140.9 383.0,141.0 383.9,141.1 384.7,141.2 385.5,141.4 386.3,141.5 387.1,141.6 387.9,141.7 388.6,141.8 389.3,141.9 390.0,142.0 391.2,142.2 392.2,142.3 393.2,142.4 394.0,142.5 394.8,142.6 395.5,142.8 396.2,142.9 396.9,143.0 397.6,143.2 398.3,143.4 399.1,143.7 400.0,144.0 400.6,144.2 401.3,144.5 401.9,144.8 402.6,145.1 403.3,145.4 404.0,145.8 404.8,146.1 405.5,146.5 406.2,146.9 406.9,147.3 407.6,147.7 408.3,148.1 409.0,148.5 409.6,148.9 410.3,149.3 410.9,149.7 411.5,150.1 412.0,150.5 412.6,151.0 413.2,151.5 413.8,151.9 414.3,152.4 414.8,152.9 415.3,153.4 415.7,153.8 416.2,154.3 416.6,154.9 417.0,155.4 417.4,156.0 417.8,156.6 418.2,157.2 418.6,157.8 419.0,158.5 419.3,159.1 419.7,159.7 420.0,160.4 420.3,161.1 420.6,161.7 420.9,162.5 421.2,163.2 421.5,163.9 421.8,164.7 422.0,165.4 422.3,166.2 422.6,167.0 422.8,167.7 423.1,168.5 423.3,169.3 423.5,170.0 423.8,170.8 424.0,171.5 424.2,172.3 424.5,173.0 424.7,173.7 424.9,174.4 425.1,175.1 425.3,175.8 425.5,176.4 425.7,177.1 425.8,177.8 426.0,178.6 426.2,179.4 426.3,180.3 426.5,181.2 426.7,182.2 426.8,183.3 427.0,184.5 427.1,185.2 427.2,185.9 427.3,186.7 427.4,187.4 427.5,188.2 427.5,189.0 427.6,189.8 427.7,190.6 427.8,191.5 427.9,192.4 428.0,193.2 428.0,194.2 428.1,195.1 428.2,196.0 428.3,196.9 428.4,197.9 428.4,198.9 428.5,199.9 428.6,200.9 428.7,201.9 428.8,202.9 428.9,203.9 429.0,205.0 429.0,206.1 429.1,207.1 429.2,208.2 429.3,209.3 429.4,210.4 429.5,211.5 429.6,212.3 429.6,213.1 429.7,213.9 429.8,214.8 429.9,215.6 429.9,216.4 430.0,217.2 430.1,218.1 430.2,218.9 430.3,219.8 430.3,220.6 430.4,221.5 430.5,222.3 430.6,223.2 430.7,224.1 430.8,225.0 430.8,225.8 430.9,226.7 431.0,227.6 431.1,228.6 431.2,229.5 431.3,230.4 431.3,231.4 431.4,232.3 431.5,233.3 431.6,234.2 431.7,235.2 431.7,236.2 431.8,237.2 431.9,238.2 432.0,239.2 432.1,240.3 432.1,241.3 432.2,242.4 432.3,243.5 432.3,244.5 432.4,245.6 432.5,246.7 432.5,247.9 432.6,249.0 432.6,249.8 432.7,250.7 432.7,251.5 432.8,252.4 432.8,253.3 432.9,254.2 432.9,255.1 432.9,256.0 433.0,256.9 433.0,257.8 433.0,258.7 433.1,259.7 433.1,260.6 433.2,261.6 433.2,262.5 433.2,263.5 433.3,264.5 433.3,265.5 433.3,266.4 433.4,267.4 433.4,268.4 433.4,269.4 433.5,270.4 433.5,271.4 433.5,272.4 433.5,273.4 433.6,274.5 433.6,275.5 433.6,276.5 433.7,277.5 433.7,278.6 433.7,279.6 433.8,280.6 433.8,281.6 433.8,282.7 433.8,283.7 433.9,284.7 433.9,285.8 433.9,286.8 434.0,287.8 434.0,288.9 434.0,289.9 434.0,290.9 434.1,291.9 434.1,293.0 434.1,294.0 434.2,295.0 434.2,296.0 434.2,297.0 434.2,298.0 434.3,299.0 434.3,300.0 434.3,301.0 434.4,302.0 434.4,303.0 434.4,304.0 434.5,305.0 434.5,306.0 434.5,307.0 434.6,308.0 434.6,309.0 434.6,310.0 434.6,311.0 434.7,312.0 434.7,313.0 434.7,314.1 434.8,315.1 434.8,316.1 434.8,317.2 434.8,318.2 434.9,319.2 434.9,320.3 434.9,321.3 435.0,322.3 435.0,323.4 435.0,324.4 435.0,325.4 435.1,326.4 435.1,327.5 435.1,328.5 435.1,329.5 435.2,330.6 435.2,331.6 435.2,332.6 435.3,333.6 435.3,334.6 435.3,335.6 435.3,336.6 435.4,337.6 435.4,338.6 435.4,339.6 435.5,340.6 435.5,341.6 435.5,342.5 435.5,343.5 435.6,344.5 435.6,345.4 435.6,346.4 435.7,347.3 435.7,348.2 435.7,349.1 435.7,350.0 435.8,351.0 435.8,351.8 435.8,352.7 435.9,353.6 435.9,354.5 435.9,355.3 436.0,356.2 436.0,357.0 436.0,358.2 436.1,359.3 436.1,360.4 436.2,361.5 436.2,362.6 436.3,363.6 436.4,364.7 436.4,365.7 436.5,366.7 436.5,367.7 436.6,368.7 436.6,369.7 436.7,370.6 436.7,371.6 436.8,372.5 436.9,373.4 436.9,374.4 437.0,375.3 437.0,376.2 437.1,377.1 437.1,378.0 437.2,378.9 437.2,379.7 437.3,380.6 437.4,381.5 437.4,382.4 437.5,383.2 437.5,384.1 437.6,385.0 437.6,385.9 437.7,386.8 437.7,387.6 437.8,388.5 437.8,389.4 437.8,390.3 437.9,391.2"/>
<polyline fill="none" stroke="#b07818" stroke-dasharray="7 9" stroke-width="1" shape-rendering="crispEdges" points="656.9,324.9 656.9,323.9 657.0,322.9 657.0,321.9 657.0,320.8 657.0,319.8 657.1,318.8 657.1,317.7 657.1,316.7 657.1,315.6 657.1,314.6 657.2,313.5 657.2,312.4 657.2,311.4 657.2,310.3 657.3,309.2 657.3,308.2 657.3,307.1 657.3,306.0 657.4,304.9 657.4,303.9 657.4,302.8 657.4,301.7 657.5,300.6 657.5,299.5 657.5,298.5 657.6,297.4 657.6,296.3 657.6,295.2 657.6,294.1 657.7,293.1 657.7,292.0 657.7,290.9 657.8,289.9 657.8,288.8 657.8,287.7 657.8,286.7 657.9,285.6 657.9,284.6 657.9,283.5 658.0,282.5 658.0,281.4 658.0,280.4 658.1,279.3 658.1,278.3 658.1,277.3 658.2,276.3 658.2,275.3 658.2,274.3 658.3,273.3 658.3,272.3 658.3,271.3 658.4,270.3 658.4,269.3 658.4,268.4 658.5,267.4 658.5,266.5 658.6,265.5 658.6,264.6 658.6,263.7 658.7,262.8 658.7,261.9 658.7,261.0 658.8,260.1 658.8,259.2 658.8,258.3 658.9,257.5 658.9,256.7 659.0,255.8 659.0,255.0 659.1,253.8 659.1,252.7 659.2,251.5 659.2,250.4 659.3,249.3 659.3,248.2 659.4,247.0 659.5,245.9 659.5,244.8 659.6,243.7 659.7,242.6 659.7,241.5 659.8,240.5 659.9,239.4 659.9,238.3 660.0,237.3 660.1,236.2 660.1,235.2 660.2,234.1 660.3,233.1 660.3,232.1 660.4,231.1 660.5,230.1 660.5,229.1 660.6,228.1 660.7,227.1 660.8,226.1 660.8,225.1 660.9,224.2 661.0,223.2 661.1,222.3 661.1,221.3 661.2,220.4 661.3,219.4 661.4,218.5 661.4,217.6 661.5,216.7 661.6,215.8 661.7,214.9 661.7,214.0 661.8,213.1 661.9,212.2 662.0,211.4 662.1,210.5 662.1,209.7 662.2,208.8 662.3,208.0 662.4,207.1 662.5,206.3 662.5,205.5 662.6,204.7 662.7,203.9 662.8,203.1 662.9,202.3 662.9,201.5 663.0,200.7 663.1,200.0 663.2,199.2 663.3,198.5 663.4,197.7 663.4,197.0 663.5,196.2 663.6,195.5 663.7,194.8 663.8,194.1 663.8,193.4 663.9,192.7 664.0,192.0 664.2,190.7 664.3,189.5 664.5,188.3 664.6,187.1 664.7,186.0 664.9,184.9 665.0,183.9 665.2,182.8 665.3,181.8 665.5,180.9 665.6,179.9 665.8,179.0 665.9,178.1 666.1,177.2 666.2,176.4 666.4,175.6 666.5,174.8 666.7,174.0 666.8,173.2 667.0,172.5 667.2,171.8 667.3,171.1 667.5,170.4 667.7,169.7 667.8,169.0 668.0,168.3 668.2,167.7 668.4,167.0 668.6,166.4 668.8,165.8 669.0,165.1 669.2,164.5 669.4,163.9 669.6,163.2 669.8,162.6 670.0,162.0 670.3,161.1 670.6,160.3 671.0,159.4 671.3,158.7 671.6,157.9 671.9,157.2 672.2,156.5 672.6,155.8 672.9,155.1 673.2,154.5 673.6,153.9 673.9,153.3 674.3,152.7 674.7,152.2 675.1,151.6 675.5,151.1 675.9,150.6 676.4,150.1 676.8,149.6 677.3,149.2 677.8,148.7 678.3,148.3 678.8,147.9 679.4,147.4 680.0,147.0 680.6,146.6 681.2,146.2 681.8,145.9 682.5,145.6 683.1,145.2 683.8,144.9 684.5,144.7 685.2,144.4 685.9,144.1 686.6,143.9 687.4,143.7 688.2,143.5 688.9,143.2 689.7,143.1 690.5,142.9 691.3,142.7 692.2,142.5 693.0,142.3 693.8,142.2 694.7,142.0 695.6,141.8 696.4,141.7 697.3,141.5 698.2,141.3 699.1,141.2 700.0,141.0 700.8,140.9 701.6,140.7 702.3,140.6 703.1,140.4 703.9,140.3 704.7,140.2 705.5,140.1 706.3,139.9 707.1,139.8 707.9,139.7 708.7,139.6 709.5,139.5 710.4,139.4 711.2,139.3 712.1,139.2 712.9,139.1 713.8,139.0 714.7,138.9 715.6,138.9 716.6,138.8 717.5,138.7 718.5,138.6 719.5,138.5 720.5,138.5 721.5,138.4 722.5,138.3 723.6,138.2 724.7,138.2 725.8,138.1 727.0,138.0 727.8,137.9 728.6,137.9 729.4,137.9 730.3,137.8 731.1,137.8 732.0,137.7 732.8,137.7 733.7,137.6 734.6,137.6 735.4,137.5 736.3,137.5 737.2,137.5 738.2,137.4 739.1,137.4 740.0,137.4 741.0,137.3 741.9,137.3 742.9,137.2 743.8,137.2 744.8,137.2 745.8,137.1 746.8,137.1 747.7,137.1 748.7,137.0 749.7,137.0 750.8,137.0 751.8,137.0 752.8,136.9 753.8,136.9 754.9,136.9 755.9,136.8 757.0,136.8 758.0,136.8 759.1,136.8 760.2,136.7 761.2,136.7 762.3,136.7 763.4,136.7 764.5,136.6 765.6,136.6 766.7,136.6 767.8,136.6 768.9,136.5 770.0,136.5 770.9,136.5 771.8,136.5 772.7,136.4 773.6,136.4 774.5,136.4 775.4,136.4 776.3,136.4 777.2,136.3 778.1,136.3 779.0,136.3 779.9,136.3 780.8,136.3 781.7,136.3 782.7,136.2 783.6,136.2 784.5,136.2 785.5,136.2 786.4,136.2 787.3,136.2 788.3,136.2 789.2,136.1 790.2,136.1 791.1,136.1 792.1,136.1 793.1,136.1 794.0,136.1 795.0,136.1 796.0,136.0 797.0,136.0 798.0,136.0 799.0,136.0 800.0,136.0 801.0,136.0 802.0,136.0 803.0,136.0 804.1,135.9 805.1,135.9 806.1,135.9 807.2,135.9 808.2,135.9 809.3,135.9 810.4,135.9 811.4,135.9 812.5,135.8 813.6,135.8 814.7,135.8 815.8,135.8 816.9,135.8 818.1,135.8 819.2,135.8 820.3,135.8 821.5,135.7 822.7,135.7 823.8,135.7 825.0,135.7 825.9,135.7 826.7,135.7 827.6,135.7 828.5,135.7 829.3,135.7 830.2,135.6 831.1,135.6 832.0,135.6 832.9,135.6 833.7,135.6 834.6,135.6 835.5,135.6 836.4,135.6 837.3,135.6 838.2,135.6 839.1,135.5 840.0,135.5 840.9,135.5 841.8,135.5 842.7,135.5 843.6,135.5 844.5,135.5 845.4,135.5 846.3,135.5 847.3,135.5 848.2,135.5 849.1,135.5 850.0,135.4 851.0,135.4 851.9,135.4 852.9,135.4 853.8,135.4 854.8,135.4 855.7,135.4 856.7,135.4 857.7,135.4 858.6,135.4 859.6,135.4 860.6,135.3 861.6,135.3 862.6,135.3 863.6,135.3 864.6,135.3 865.6,135.3 866.6,135.3 867.6,135.3 868.6,135.3 869.7,135.3 870.7,135.3 871.7,135.3 872.8,135.2 873.8,135.2 874.9,135.2 876.0,135.2 877.0,135.2 878.1,135.2 879.2,135.2 880.3,135.2 881.4,135.2 882.5,135.2 883.6,135.1 884.7,135.1 885.9,135.1 887.0,135.1 888.1,135.1 889.3,135.1 890.5,135.1 891.6,135.1 892.8,135.1 894.0,135.1 895.2,135.0 896.4,135.0 897.6,135.0 898.8,135.0 900.0,135.0 900.8,135.0 901.7,135.0 902.6,135.0 903.5,135.0 904.4,135.0 905.3,135.0 906.2,134.9 907.1,134.9 908.1,134.9 909.0,134.9 910.0,134.9 911.0,134.9 912.0,134.9 913.0,134.9 914.0,134.9 915.0,134.9 916.1,134.9 917.1,134.8 918.2,134.8 919.2,134.8 920.3,134.8 921.4,134.8 922.5,134.8 923.5,134.8 924.6,134.8 925.7,134.8 926.9,134.8 928.0,134.7 929.1,134.7 930.2,134.7 931.4,134.7 932.5,134.7 933.6,134.7 934.8,134.7 935.9,134.7 937.1,134.7 938.2,134.6 939.4,134.6 940.6,134.6 941.7,134.6 942.9,134.6 944.0,134.6 945.2,134.6 946.4,134.6 947.6,134.6 948.7,134.6 949.9,134.5 951.1,134.5 952.2,134.5 953.4,134.5 954.6,134.5 955.7,134.5 956.9,134.5 958.0,134.5 959.2,134.5 960.3,134.4 961.5,134.4 962.6,134.4 963.8,134.4 964.9,134.4 966.0,134.4 967.2,134.4 968.3,134.4 969.4,134.4 970.5,134.4 971.6,134.3 972.7,134.3 973.8,134.3 974.9,134.3 976.0,134.3 977.0,134.3 978.1,134.3 979.1,134.3 980.2,134.3 981.2,134.3 982.2,134.2 983.2,134.2 984.2,134.2 985.2,134.2 986.2,134.2 987.2,134.2 988.1,134.2 989.1,134.2 990.0,134.2 990.9,134.2 991.9,134.2 992.7,134.1 993.6,134.1 994.5,134.1 995.4,134.1 996.2,134.1 997.0,134.1 997.8,134.1 998.6,134.1 999.4,134.1 1000.2,134.1 1000.9,134.1 1001.6,134.1 1002.4,134.1 1003.1,134.1 1003.7,134.0 1004.4,134.0 1005.0,134.0 1005.7,134.0 1006.3,134.0 1006.9,134.0 1007.4,134.0 1008.0,134.0 1008.5,134.0 1009.0,134.0"/>
<polyline fill="none" stroke="#00a8b0" stroke-width="1" shape-rendering="crispEdges" points="87.0,638.6 89.0,653.1 91.0,644.4 93.0,632.1 95.0,655.0 97.0,638.6 99.0,652.8 101.0,646.6 103.0,637.7 105.0,651.7 107.0,651.1 109.0,629.1 111.0,626.0 113.0,635.4 115.0,642.4 117.0,644.7 119.0,643.2 121.0,636.7 123.0,643.4 125.0,638.6 127.0,628.4 129.0,634.2 131.0,640.4 133.0,636.4 135.0,637.9 137.0,637.9 139.0,650.4 141.0,643.3 143.0,652.9 145.0,640.6 147.0,652.4 149.0,638.1 151.0,634.3 153.0,623.1 155.0,641.5 157.0,640.5 159.0,637.4 161.0,631.3 163.0,647.2 165.0,634.7 167.0,636.8 169.0,637.6 171.0,647.8 173.0,640.4 175.0,639.6 177.0,633.9 179.0,643.7 181.0,650.4 183.0,650.3 185.0,629.6 187.0,638.7 189.0,635.9 191.0,657.0 193.0,629.4 195.0,656.9 197.0,640.7 199.0,647.7 201.0,643.4 203.0,651.8 205.0,646.4 207.0,650.0 209.0,650.6 211.0,639.8 214.0,670.5 215.5,658.9 217.0,680.2 218.5,686.0 220.0,700.8 221.5,700.5 223.0,709.6 224.5,710.0 226.0,717.5 227.5,715.6 229.0,717.3 230.5,717.5 232.0,717.1 233.5,703.8 235.0,711.8 236.5,700.2 238.0,683.2 239.5,663.8 241.0,667.0 242.5,658.6 244.0,650.0 246.0,645.0 246.1,644.6 246.3,644.1 246.4,643.6 246.6,643.1 246.7,642.5 246.9,641.9 247.1,641.2 247.3,640.5 247.6,639.8 247.8,639.0 248.0,638.2 248.3,637.4 248.5,636.6 248.8,635.7 249.0,634.8 249.3,634.0 249.5,633.1 249.8,632.2 250.1,631.3 250.4,630.4 250.6,629.5 250.9,628.6 251.2,627.7 251.5,626.8 251.7,625.9 252.0,625.0 252.2,624.3 252.4,623.6 252.6,622.9 252.9,622.2 253.1,621.5 253.3,620.7 253.5,620.0 253.8,619.2 254.0,618.5 254.2,617.7 254.4,616.9 254.7,616.2 254.9,615.4 255.1,614.6 255.4,613.8 255.6,613.0 255.9,612.2 256.1,611.4 256.4,610.7 256.6,609.9 256.9,609.1 257.1,608.3 257.4,607.5 257.6,606.7 257.9,606.0 258.1,605.2 258.4,604.4 258.7,603.7 258.9,602.9 259.2,602.2 259.5,601.4 259.7,600.7 260.0,600.0 260.3,599.3 260.6,598.6 260.8,597.9 261.1,597.2 261.3,596.6 261.6,596.0 261.9,595.3 262.1,594.7 262.4,594.1 262.6,593.5 262.9,593.0 263.2,592.4 263.4,591.8 263.7,591.2 264.0,590.6 264.2,590.0 264.5,589.4 264.8,588.8 265.1,588.2 265.4,587.5 265.7,586.9 266.1,586.2 266.4,585.5 266.8,584.8 267.1,584.0 267.5,583.3 267.9,582.5 268.3,581.6 268.7,580.8 269.1,579.9 269.5,579.0 270.0,578.0 270.2,577.5 270.5,576.9 270.8,576.4 271.0,575.9 271.3,575.3 271.6,574.7 271.8,574.1 272.1,573.6 272.4,573.0 272.7,572.4 273.0,571.7 273.3,571.1 273.6,570.5 273.9,569.9 274.2,569.2 274.5,568.6 274.8,567.9 275.2,567.3 275.5,566.6 275.8,565.9 276.1,565.3 276.5,564.6 276.8,563.9 277.1,563.2 277.5,562.5 277.8,561.8 278.2,561.1 278.5,560.4 278.9,559.7 279.2,559.0 279.5,558.3 279.9,557.6 280.2,556.8 280.6,556.1 281.0,555.4 281.3,554.7 281.7,554.0 282.0,553.2 282.4,552.5 282.7,551.8 283.1,551.1 283.4,550.3 283.8,549.6 284.1,548.9 284.5,548.2 284.9,547.4 285.2,546.7 285.6,546.0 285.9,545.3 286.3,544.6 286.6,543.9 287.0,543.2 287.3,542.5 287.6,541.8 288.0,541.1 288.3,540.4 288.7,539.7 289.0,539.0 289.3,538.3 289.7,537.7 290.0,537.0 290.3,536.3 290.7,535.6 291.0,535.0 291.3,534.3 291.7,533.6 292.0,532.9 292.3,532.3 292.7,531.6 293.0,530.9 293.3,530.2 293.7,529.5 294.0,528.9 294.3,528.2 294.7,527.5 295.0,526.8 295.3,526.1 295.7,525.5 296.0,524.8 296.3,524.1 296.7,523.4 297.0,522.7 297.3,522.0 297.7,521.4 298.0,520.7 298.3,520.0 298.7,519.3 299.0,518.7 299.3,518.0 299.7,517.3 300.0,516.6 300.3,516.0 300.7,515.3 301.0,514.6 301.3,513.9 301.7,513.3 302.0,512.6 302.3,511.9 302.7,511.3 303.0,510.6 303.3,509.9 303.7,509.3 304.0,508.6 304.3,507.9 304.7,507.3 305.0,506.6 305.3,506.0 305.7,505.3 306.0,504.7 306.3,504.0 306.7,503.4 307.0,502.7 307.3,502.1 307.7,501.4 308.0,500.8 308.3,500.2 308.7,499.5 309.0,498.9 309.3,498.3 309.7,497.6 310.0,497.0 310.4,496.3 310.7,495.6 311.1,495.0 311.5,494.3 311.8,493.6 312.2,492.9 312.5,492.2 312.9,491.6 313.3,490.9 313.6,490.2 314.0,489.5 314.4,488.9 314.7,488.2 315.1,487.5 315.5,486.9 315.8,486.2 316.2,485.5 316.5,484.9 316.9,484.2 317.3,483.5 317.6,482.9 318.0,482.2 318.4,481.6 318.7,480.9 319.1,480.2 319.5,479.6 319.8,478.9 320.2,478.3 320.5,477.7 320.9,477.0 321.3,476.4 321.6,475.7 322.0,475.1 322.4,474.5 322.7,473.9 323.1,473.2 323.5,472.6 323.8,472.0 324.2,471.4 324.5,470.8 324.9,470.2 325.3,469.5 325.6,468.9 326.0,468.3 326.4,467.7 326.7,467.2 327.1,466.6 327.5,466.0 327.8,465.4 328.2,464.8 328.5,464.3 328.9,463.7 329.3,463.1 329.6,462.6 330.0,462.0 330.4,461.3 330.9,460.7 331.3,460.0 331.8,459.4 332.2,458.7 332.7,458.0 333.1,457.4 333.6,456.7 334.1,456.1 334.5,455.4 335.0,454.8 335.5,454.1 335.9,453.5 336.4,452.9 336.9,452.2 337.4,451.6 337.8,451.0 338.3,450.4 338.8,449.8 339.2,449.2 339.7,448.6 340.2,448.0 340.6,447.4 341.1,446.8 341.5,446.2 342.0,445.6 342.5,445.1 342.9,444.5 343.3,444.0 343.8,443.4 344.2,442.9 344.6,442.4 345.1,441.9 345.5,441.3 345.9,440.8 346.3,440.4 346.7,439.9 347.1,439.4 347.5,438.9 347.9,438.5 348.3,438.0 348.6,437.6 349.0,437.2 349.3,436.8 349.7,436.4 350.0,436.0 350.8,435.1 351.5,434.4 352.1,433.7 352.8,433.1 353.4,432.5 353.9,432.1 354.5,431.6 355.0,431.2 355.5,430.9 355.9,430.6 356.4,430.2 356.8,429.9 357.3,429.6 357.7,429.3 358.1,428.9 358.6,428.5 359.0,428.1 359.5,427.6 360.0,427.0 360.4,426.5 360.9,425.9 361.3,425.3 361.7,424.7 362.1,424.0 362.5,423.3 363.0,422.7 363.4,422.0 363.8,421.3 364.2,420.5 364.6,419.8 365.0,419.1 365.4,418.5 365.8,417.8 366.2,417.1 366.6,416.5 367.0,415.9 367.4,415.3 367.8,414.8 368.2,414.3 368.6,413.9 369.0,413.5 369.8,412.8 370.6,412.3 371.4,411.9 372.3,411.6 373.1,411.3 373.9,411.2 374.7,411.1 375.4,411.0 376.1,411.0 376.8,411.0 377.5,411.0 378.3,411.0 379.1,411.2 379.9,411.4 380.6,411.6 381.3,412.0 381.9,412.4 382.5,412.9 383.0,413.5 383.4,414.0 383.8,414.4 384.1,414.9 384.4,415.4 384.6,416.0 384.9,416.7 385.1,417.5 385.4,418.5 385.7,419.6 386.0,421.0 386.1,421.6 386.3,422.3 386.4,423.0 386.5,423.8 386.7,424.6 386.8,425.4 387.0,426.3 387.1,427.2 387.2,428.1 387.4,429.0 387.5,430.0 387.7,431.0 387.8,432.0 388.0,432.9 388.1,433.9 388.3,434.9 388.4,435.9 388.5,436.9 388.7,437.8 388.8,438.8 389.0,439.7 389.1,440.5 389.2,441.4 389.4,442.2 389.5,443.0 389.7,444.0 389.8,445.2 390.0,446.3 390.2,447.5 390.3,448.8 390.5,450.0 390.6,451.3 390.8,452.5 391.0,453.6 391.1,454.7 391.3,455.7 391.4,456.7 391.6,457.5 391.7,458.2 391.9,458.7 392.0,459.1 392.2,459.2 392.3,459.2 392.5,459.0 392.6,458.7 392.7,458.4 392.8,458.0 392.9,457.5 393.0,456.9 393.1,456.2 393.2,455.5 393.3,454.7 393.4,453.9 393.5,453.0 393.6,452.0 393.7,451.0 393.8,450.0 393.9,448.9 394.0,447.9 394.1,446.8 394.2,445.6 394.3,444.5 394.4,443.3 394.5,442.2 394.6,441.0 394.7,439.9 394.8,438.8 394.9,437.7 394.9,436.6 395.0,435.5 395.1,434.5 395.2,433.5 395.3,432.6 395.4,431.6 395.4,430.8 395.5,430.0 395.6,428.9 395.7,427.8 395.8,426.9 395.9,426.0 395.9,425.1 396.0,424.3 396.1,423.5 396.1,422.7 396.2,422.0 396.2,421.2 396.3,420.4 396.3,419.6 396.4,418.8 396.4,418.0 396.5,417.1 396.6,416.1 396.6,415.1 396.7,413.9 396.8,412.7 396.9,411.4 397.0,410.0 397.0,409.3 397.1,408.6 397.1,407.9 397.2,407.2 397.2,406.5 397.3,405.8 397.3,405.0 397.4,404.3 397.4,403.6 397.5,402.8 397.5,402.0 397.6,401.3 397.6,400.5 397.7,399.7 397.7,398.9 397.8,398.1 397.8,397.3 397.9,396.4 398.0,395.6 398.0,394.7 398.1,393.8 398.1,392.9 398.2,392.0 398.2,391.1 398.3,390.2 398.4,389.3 398.4,388.3 398.5,387.3 398.6,386.3 398.6,385.3 398.7,384.3 398.8,383.3 398.9,382.2 399.0,381.1 399.0,380.0 399.1,378.9 399.2,377.8 399.3,376.6 399.4,375.5 399.5,374.3 399.6,373.1 399.7,371.8 399.8,370.6 399.9,369.3 400.0,368.0 400.1,367.3 400.1,366.5 400.2,365.8 400.2,365.0 400.3,364.3 400.4,363.5 400.4,362.7 400.5,361.9 400.6,361.1 400.7,360.2 400.7,359.4 400.8,358.5 400.9,357.6 400.9,356.8 401.0,355.9 401.1,355.0 401.2,354.1 401.2,353.2 401.3,352.2 401.4,351.3 401.5,350.4 401.6,349.4 401.6,348.5 401.7,347.5 401.8,346.6 401.9,345.6 402.0,344.6 402.0,343.6 402.1,342.6 402.2,341.7 402.3,340.7 402.4,339.7 402.5,338.7 402.6,337.7 402.6,336.7 402.7,335.6 402.8,334.6 402.9,333.6 403.0,332.6 403.1,331.6 403.2,330.6 403.3,329.6 403.4,328.5 403.4,327.5 403.5,326.5 403.6,325.5 403.7,324.5 403.8,323.5 403.9,322.5 404.0,321.5 404.1,320.5 404.2,319.5 404.3,318.5 404.4,317.5 404.5,316.5 404.5,315.5 404.6,314.5 404.7,313.5 404.8,312.6 404.9,311.6 405.0,310.7 405.1,309.7 405.2,308.8 405.3,307.8 405.4,306.9 405.5,306.0 405.6,305.1 405.7,304.2 405.7,303.3 405.8,302.4 405.9,301.5 406.0,300.7 406.1,299.8 406.2,299.0 406.3,298.2 406.4,297.4 406.5,296.5 406.6,295.8 406.6,295.0 406.7,294.2 406.8,293.5 406.9,292.7 407.0,292.0 407.1,290.8 407.3,289.7 407.4,288.6 407.6,287.5 407.7,286.4 407.9,285.4 408.0,284.3 408.2,283.3 408.3,282.4 408.5,281.4 408.6,280.5 408.8,279.6 408.9,278.7 409.1,277.8 409.2,276.9 409.4,276.1 409.5,275.2 409.7,274.4 409.8,273.6 410.0,272.8 410.1,272.0 410.3,271.2 410.4,270.5 410.6,269.7 410.7,268.9 410.9,268.2 411.0,267.4 411.2,266.7 411.3,265.9 411.5,265.2 411.6,264.4 411.8,263.7 412.0,263.0 412.1,262.2 412.3,261.4 412.4,260.7 412.6,259.9 412.7,259.2 412.9,258.4 413.0,257.6 413.2,256.8 413.3,256.0 413.5,255.2 413.6,254.3 413.8,253.5 413.9,252.6 414.1,251.7 414.2,250.8 414.4,249.9 414.5,249.0 414.6,248.2 414.8,247.4 414.9,246.5 415.0,245.7 415.1,244.8 415.3,244.0 415.4,243.1 415.5,242.2 415.7,241.3 415.8,240.4 415.9,239.5 416.0,238.6 416.2,237.7 416.3,236.8 416.4,235.8 416.6,234.9 416.7,234.0 416.8,233.0 416.9,232.1 417.1,231.1 417.2,230.2 417.3,229.3 417.5,228.3 417.6,227.4 417.7,226.4 417.9,225.5 418.0,224.5 418.1,223.6 418.2,222.6 418.4,221.7 418.5,220.7 418.6,219.8 418.7,218.9 418.9,217.9 419.0,217.0 419.1,216.1 419.2,215.2 419.4,214.3 419.5,213.4 419.6,212.5 419.7,211.6 419.9,210.7 420.0,209.8 420.1,209.0 420.2,208.1 420.3,207.3 420.5,206.4 420.6,205.6 420.7,204.8 420.8,204.0 420.9,203.2 421.0,202.4 421.1,201.6 421.3,200.9 421.4,200.1 421.5,199.4 421.6,198.7 421.7,198.0 421.9,196.8 422.1,195.7 422.2,194.6 422.4,193.5 422.6,192.5 422.7,191.4 422.9,190.4 423.0,189.4 423.2,188.5 423.3,187.5 423.5,186.6 423.6,185.7 423.8,184.8 423.9,183.9 424.1,183.1 424.2,182.3 424.4,181.4 424.5,180.6 424.6,179.8 424.8,179.1 424.9,178.3 425.1,177.5 425.2,176.8 425.4,176.1 425.5,175.3 425.7,174.6 425.8,173.9 426.0,173.2 426.1,172.5 426.3,171.8 426.5,171.1 426.6,170.4 426.8,169.7 427.0,169.0 427.2,168.1 427.5,167.2 427.7,166.3 428.0,165.4 428.2,164.5 428.4,163.7 428.7,162.9 428.9,162.1 429.1,161.3 429.4,160.5 429.6,159.8 429.9,159.0 430.1,158.3 430.4,157.6 430.7,157.0 431.0,156.3 431.3,155.6 431.6,155.0 431.9,154.4 432.2,153.8 432.5,153.2 432.9,152.6 433.2,152.1 433.6,151.5 434.0,151.0 434.5,150.4 435.0,149.8 435.6,149.3 436.1,148.8 436.7,148.3 437.3,147.8 438.0,147.3 438.6,146.9 439.3,146.5 439.9,146.1 440.6,145.8 441.3,145.4 441.9,145.1 442.6,144.8 443.3,144.5 443.9,144.2 444.6,144.0 445.2,143.7 445.8,143.5 446.4,143.2 447.0,143.0 448.0,142.7 448.8,142.4 449.6,142.2 450.4,142.1 451.2,142.0 451.9,142.0 452.7,142.0 453.6,142.0 454.5,141.9 455.6,141.9 456.7,141.9 458.0,141.8 458.7,141.7 459.4,141.7 460.0,141.6 460.6,141.6 461.2,141.5 461.8,141.5 462.4,141.4 463.0,141.4 463.7,141.3 464.3,141.3 465.1,141.2 465.8,141.2 466.7,141.1 467.5,141.1 468.5,141.0 469.6,141.0 470.7,140.9 472.0,140.8 473.3,140.8 474.8,140.7 476.4,140.6 478.1,140.6 480.0,140.5 480.7,140.5 481.3,140.5 482.0,140.4 482.7,140.4 483.4,140.4 484.2,140.3 484.9,140.3 485.7,140.3 486.5,140.2 487.3,140.2 488.1,140.2 488.9,140.1 489.7,140.1 490.6,140.1 491.5,140.0 492.3,140.0 493.2,140.0 494.1,139.9 495.0,139.9 496.0,139.9 496.9,139.8 497.8,139.8 498.8,139.7 499.8,139.7 500.7,139.7 501.7,139.6 502.7,139.6 503.7,139.6 504.7,139.5 505.7,139.5 506.7,139.4 507.8,139.4 508.8,139.4 509.8,139.3 510.9,139.3 511.9,139.3 513.0,139.2 514.0,139.2 515.1,139.1 516.2,139.1 517.2,139.1 518.3,139.0 519.4,139.0 520.5,139.0 521.5,138.9 522.6,138.9 523.7,138.9 524.8,138.9 525.9,138.8 526.9,138.8 528.0,138.8 529.1,138.7 530.2,138.7 531.3,138.7 532.3,138.7 533.4,138.7 534.5,138.6 535.5,138.6 536.6,138.6 537.7,138.6 538.7,138.6 539.8,138.6 540.8,138.5 541.9,138.5 542.9,138.5 543.9,138.5 545.0,138.5 546.0,138.5 547.0,138.5 548.0,138.5 549.0,138.5 549.9,138.5 550.9,138.5 551.9,138.5 552.8,138.5 553.8,138.5 554.8,138.5 555.8,138.5 556.9,138.5 557.9,138.5 558.9,138.6 559.9,138.6 561.0,138.6 562.0,138.6 563.1,138.6 564.1,138.6 565.2,138.6 566.2,138.7 567.3,138.7 568.3,138.7 569.4,138.7 570.5,138.7 571.5,138.7 572.6,138.8 573.7,138.8 574.8,138.8 575.8,138.8 576.9,138.9 578.0,138.9 579.1,138.9 580.1,138.9 581.2,139.0 582.3,139.0 583.3,139.0 584.4,139.0 585.4,139.1 586.5,139.1 587.6,139.1 588.6,139.2 589.6,139.2 590.7,139.2 591.7,139.2 592.7,139.3 593.8,139.3 594.8,139.3 595.8,139.4 596.8,139.4 597.8,139.5 598.8,139.5 599.8,139.5 600.7,139.6 601.7,139.6 602.7,139.6 603.6,139.7 604.5,139.7 605.5,139.7 606.4,139.8 607.3,139.8 608.2,139.9 609.1,139.9 609.9,139.9 610.8,140.0 611.6,140.0 612.5,140.1 613.3,140.1 614.1,140.2 614.9,140.2 615.7,140.2 616.4,140.3 617.2,140.3 617.9,140.4 618.6,140.4 619.3,140.5 620.0,140.5 621.5,140.6 623.0,140.7 624.4,140.8 625.7,141.0 627.0,141.1 628.3,141.2 629.5,141.3 630.6,141.5 631.7,141.6 632.7,141.8 633.7,141.9 634.6,142.1 635.6,142.2 636.4,142.4 637.3,142.5 638.1,142.7 638.8,142.8 639.6,143.0 640.3,143.2 641.0,143.3 641.6,143.5 642.3,143.6 642.9,143.8 643.5,143.9 644.1,144.1 644.7,144.2 645.2,144.4 645.8,144.5 646.4,144.6 646.9,144.8 647.5,144.9 648.0,145.0 649.6,145.4 650.8,145.7 651.7,145.9 652.4,146.2 652.9,146.5 653.4,146.7 653.7,147.0 654.1,147.3 654.5,147.6 655.0,148.0 655.6,148.4 656.1,148.8 656.7,149.3 657.2,149.7 657.7,150.2 658.2,150.7 658.6,151.2 659.1,151.8 659.5,152.4 660.0,153.0 660.4,153.5 660.7,154.0 661.0,154.4 661.3,154.8 661.6,155.3 661.9,155.8 662.2,156.3 662.6,157.0 662.9,157.7 663.2,158.6 663.6,159.7 664.0,161.0 664.2,161.5 664.3,162.1 664.5,162.7 664.7,163.3 664.9,163.9 665.0,164.6 665.2,165.2 665.4,165.9 665.6,166.6 665.8,167.4 666.0,168.1 666.2,168.9 666.4,169.6 666.6,170.4 666.8,171.2 667.0,172.1 667.2,172.9 667.4,173.8 667.6,174.6 667.8,175.5 668.0,176.4 668.2,177.3 668.4,178.2 668.6,179.2 668.8,180.1 669.0,181.1 669.2,182.0 669.4,183.0 669.6,184.0 669.8,185.0 670.0,186.0 670.1,186.7 670.3,187.5 670.4,188.2 670.5,188.9 670.7,189.7 670.8,190.4 670.9,191.2 671.1,192.0 671.2,192.7 671.3,193.5 671.5,194.3 671.6,195.1 671.7,195.8 671.9,196.6 672.0,197.4 672.1,198.2 672.3,199.1 672.4,199.9 672.5,200.7 672.6,201.6 672.8,202.4 672.9,203.3 673.0,204.1 673.2,205.0 673.3,205.9 673.4,206.8 673.5,207.7 673.7,208.6 673.8,209.5 673.9,210.4 674.1,211.4 674.2,212.3 674.3,213.3 674.4,214.3 674.6,215.3 674.7,216.3 674.8,217.3 675.0,218.3 675.1,219.3 675.2,220.4 675.3,221.4 675.5,222.5 675.6,223.6 675.7,224.4 675.8,225.2 675.9,226.0 676.0,226.8 676.0,227.6 676.1,228.4 676.2,229.3 676.3,230.1 676.4,231.0 676.5,231.9 676.6,232.7 676.7,233.6 676.8,234.5 676.8,235.4 676.9,236.3 677.0,237.3 677.1,238.2 677.2,239.1 677.3,240.0 677.4,241.0 677.5,241.9 677.5,242.9 677.6,243.8 677.7,244.8 677.8,245.8 677.9,246.7 678.0,247.7 678.1,248.7 678.1,249.7 678.2,250.6 678.3,251.6 678.4,252.6 678.5,253.6 678.6,254.6 678.7,255.5 678.8,256.5 678.8,257.5 678.9,258.5 679.0,259.5 679.1,260.4 679.2,261.4 679.3,262.4 679.4,263.4 679.5,264.3 679.5,265.3 679.6,266.3 679.7,267.2 679.8,268.2 679.9,269.1 680.0,270.1 680.1,271.0 680.2,271.9 680.3,272.9 680.4,273.8 680.4,274.7 680.5,275.6 680.6,276.5 680.7,277.4 680.8,278.3 680.9,279.1 681.0,280.0 681.1,281.0 681.2,281.9 681.3,282.9 681.4,283.8 681.5,284.8 681.6,285.7 681.8,286.7 681.9,287.6 682.0,288.5 682.1,289.5 682.2,290.4 682.3,291.3 682.4,292.2 682.5,293.1 682.6,294.0 682.7,294.9 682.9,295.9 683.0,296.8 683.1,297.6 683.2,298.5 683.3,299.4 683.4,300.3 683.5,301.2 683.7,302.1 683.8,303.0 683.9,303.9 684.0,304.7 684.1,305.6 684.2,306.5 684.3,307.4 684.4,308.3 684.6,309.1 684.7,310.0 684.8,310.9 684.9,311.8 685.0,312.6 685.1,313.5 685.2,314.4 685.4,315.2 685.5,316.1 685.6,317.0 685.7,317.9 685.8,318.8 685.9,319.6 686.0,320.5 686.1,321.4 686.2,322.3 686.4,323.2 686.5,324.0 686.6,324.9 686.7,325.8 686.8,326.7 686.9,327.6 687.0,328.5 687.1,329.4 687.2,330.3 687.3,331.2 687.4,332.1 687.5,333.0 687.6,333.9 687.8,334.9 687.9,335.8 688.0,336.7 688.1,337.6 688.2,338.6 688.3,339.5 688.4,340.4 688.5,341.3 688.6,342.3 688.7,343.2 688.8,344.1 688.9,345.1 689.1,346.0 689.2,346.9 689.3,347.8 689.4,348.8 689.5,349.7 689.6,350.6 689.7,351.6 689.8,352.5 689.9,353.4 690.0,354.3 690.1,355.2 690.2,356.2 690.3,357.1 690.4,358.0 690.5,358.9 690.6,359.8 690.7,360.7 690.8,361.6 690.9,362.5 691.0,363.4 691.1,364.3 691.2,365.2 691.3,366.1 691.4,366.9 691.5,367.8 691.6,368.7 691.7,369.5 691.8,370.4 691.9,371.2 692.0,372.1 692.1,372.9 692.2,373.7 692.2,374.6 692.3,375.4 692.4,376.2 692.5,377.0 692.6,378.1 692.7,379.1 692.8,380.2 692.9,381.3 693.0,382.5 693.1,383.6 693.2,384.7 693.3,385.9 693.4,387.0 693.4,388.2 693.5,389.3 693.6,390.5 693.7,391.6 693.7,392.7 693.8,393.9 693.9,395.0 694.0,396.1 694.0,397.2 694.1,398.3 694.2,399.4 694.3,400.4 694.3,401.5 694.4,402.5 694.5,403.5 694.5,404.4 694.6,405.4 694.7,406.3 694.8,407.2 694.9,408.0 694.9,408.8 695.0,409.6 695.1,410.3 695.2,411.0 695.3,411.7 695.4,412.3 695.5,412.9 695.6,413.4 695.7,413.9 695.8,414.3 695.9,414.7 696.0,415.0 696.2,415.5 696.5,415.7 696.7,415.7 697.0,415.5 697.3,415.1 697.5,414.6 697.8,413.9 698.1,413.1 698.4,412.2 698.7,411.2 699.0,410.1 699.3,409.0 699.6,407.9 699.9,406.7 700.2,405.6 700.6,404.5 700.9,403.5 701.3,402.6 701.6,401.7 702.0,401.0 702.4,400.4 702.7,399.7 703.1,399.0 703.4,398.2 703.8,397.5 704.2,396.7 704.6,396.0 704.9,395.2 705.3,394.5 705.7,393.8 706.1,393.1 706.6,392.4 707.0,391.7 707.4,391.1 707.9,390.6 708.4,390.1 708.9,389.6 709.4,389.2 709.9,388.9 710.4,388.7 711.0,388.5 711.6,388.4 712.1,388.4 712.7,388.4 713.4,388.5 714.0,388.6 714.7,388.7 715.3,388.9 716.0,389.1 716.7,389.4 717.4,389.7 718.1,390.1 718.8,390.5 719.6,390.9 720.3,391.4 721.0,391.9 721.7,392.4 722.5,392.9 723.2,393.5 723.9,394.1 724.6,394.7 725.3,395.3 726.0,396.0 726.4,396.4 726.8,396.8 727.2,397.1 727.5,397.5 727.9,397.9 728.3,398.2 728.6,398.6 729.0,399.0 729.3,399.3 729.7,399.7 730.0,400.0 730.4,400.4 730.7,400.8 731.1,401.2 731.4,401.6 731.7,402.1 732.1,402.5 732.4,403.0 732.8,403.5 733.2,404.0 733.5,404.5 733.9,405.1 734.3,405.7 734.7,406.3 735.1,406.9 735.5,407.6 735.9,408.4 736.4,409.1 736.8,409.9 737.3,410.8 737.8,411.7 738.3,412.6 738.8,413.6 739.3,414.6 739.9,415.7 740.4,416.8 741.0,418.0 741.2,418.5 741.5,419.0 741.7,419.4 741.9,419.9 742.2,420.5 742.4,421.0 742.7,421.5 742.9,422.1 743.2,422.6 743.4,423.2 743.7,423.7 743.9,424.3 744.2,424.9 744.5,425.5 744.7,426.1 745.0,426.7 745.3,427.4 745.5,428.0 745.8,428.6 746.1,429.3 746.4,429.9 746.7,430.6 747.0,431.2 747.2,431.9 747.5,432.6 747.8,433.3 748.1,434.0 748.4,434.7 748.7,435.4 749.0,436.1 749.3,436.8 749.6,437.5 749.9,438.3 750.2,439.0 750.5,439.7 750.8,440.5 751.1,441.2 751.4,442.0 751.8,442.7 752.1,443.5 752.4,444.2 752.7,445.0 753.0,445.8 753.3,446.5 753.6,447.3 754.0,448.1 754.3,448.8 754.6,449.6 754.9,450.4 755.2,451.2 755.6,452.0 755.9,452.7 756.2,453.5 756.5,454.3 756.8,455.1 757.2,455.9 757.5,456.7 757.8,457.4 758.1,458.2 758.5,459.0 758.8,459.8 759.1,460.6 759.4,461.4 759.7,462.1 760.1,462.9 760.4,463.7 760.7,464.5 761.0,465.3 761.4,466.0 761.7,466.8 762.0,467.6 762.3,468.3 762.6,469.1 763.0,469.9 763.3,470.6 763.6,471.4 763.9,472.1 764.2,472.9 764.5,473.6 764.9,474.3 765.2,475.1 765.5,475.8 765.8,476.5 766.1,477.2 766.4,477.9 766.7,478.7 767.0,479.4 767.3,480.0 767.6,480.7 767.9,481.4 768.2,482.1 768.5,482.8 768.8,483.4 769.1,484.1 769.4,484.7 769.7,485.4 770.0,486.0 770.3,486.8 770.7,487.5 771.0,488.2 771.4,489.0 771.7,489.7 772.1,490.5 772.5,491.2 772.8,491.9 773.2,492.7 773.5,493.4 773.9,494.1 774.2,494.8 774.6,495.6 775.0,496.3 775.3,497.0 775.7,497.7 776.0,498.4 776.4,499.1 776.8,499.8 777.1,500.5 777.5,501.2 777.9,501.9 778.2,502.6 778.6,503.3 778.9,504.0 779.3,504.7 779.7,505.4 780.0,506.1 780.4,506.7 780.8,507.4 781.1,508.1 781.5,508.8 781.8,509.4 782.2,510.1 782.5,510.8 782.9,511.5 783.3,512.1 783.6,512.8 784.0,513.4 784.3,514.1 784.7,514.8 785.0,515.4 785.4,516.1 785.7,516.7 786.1,517.4 786.4,518.0 786.8,518.7 787.1,519.3 787.4,520.0 787.8,520.6 788.1,521.3 788.4,521.9 788.8,522.5 789.1,523.2 789.4,523.8 789.8,524.5 790.1,525.1 790.4,525.7 790.7,526.4 791.0,527.0 791.4,527.6 791.7,528.2 792.0,528.9 792.3,529.5 792.6,530.1 792.9,530.7 793.2,531.4 793.5,532.0 793.8,532.6 794.1,533.2 794.3,533.9 794.6,534.5 794.9,535.1 795.2,535.7 795.4,536.3 795.7,536.9 796.0,537.6 796.2,538.2 796.5,538.8 796.8,539.4 797.0,540.0 797.3,540.9 797.7,541.7 798.0,542.6 798.3,543.4 798.6,544.3 799.0,545.1 799.3,545.9 799.6,546.8 799.9,547.6 800.2,548.5 800.4,549.3 800.7,550.2 801.0,551.0 801.3,551.8 801.5,552.6 801.8,553.5 802.0,554.3 802.3,555.1 802.5,555.9 802.8,556.8 803.0,557.6 803.3,558.4 803.5,559.2 803.7,560.0 804.0,560.8 804.2,561.6 804.4,562.4 804.6,563.2 804.8,564.0 805.0,564.8 805.2,565.6 805.4,566.3 805.6,567.1 805.8,567.9 806.0,568.7 806.2,569.4 806.4,570.2 806.6,570.9 806.8,571.7 806.9,572.4 807.1,573.2 807.3,573.9 807.5,574.7 807.7,575.4 807.8,576.1 808.0,576.8 808.2,577.5 808.3,578.2 808.5,578.9 808.7,579.6 808.8,580.3 809.0,581.0 809.2,581.7 809.3,582.4 809.5,583.0 809.7,583.7 809.8,584.4 810.0,585.0 810.3,586.0 810.5,587.0 810.8,588.0 811.0,588.9 811.2,589.8 811.4,590.7 811.6,591.6 811.8,592.4 812.0,593.2 812.2,594.0 812.4,594.8 812.6,595.6 812.8,596.3 812.9,597.1 813.1,597.8 813.3,598.5 813.4,599.3 813.6,600.0 813.7,600.7 813.9,601.5 814.0,602.2 814.1,602.9 814.3,603.7 814.4,604.4 814.5,605.2 814.7,606.0 814.8,606.8 814.9,607.6 815.1,608.4 815.2,609.3 815.3,610.2 815.5,611.1 815.6,612.0 815.7,613.0 815.9,614.0 816.0,615.0 816.1,615.8 816.2,616.6 816.3,617.4 816.4,618.2 816.5,619.0 816.6,619.8 816.7,620.6 816.8,621.5 816.9,622.3 817.0,623.2 817.1,624.1 817.1,625.0 817.2,625.9 817.3,626.8 817.4,627.7 817.5,628.6 817.6,629.5 817.7,630.4 817.7,631.4 817.8,632.3 817.9,633.2 818.0,634.2 818.1,635.1 818.1,636.1 818.2,637.0 818.3,638.0 818.4,639.0 818.5,639.9 818.5,640.9 818.6,641.9 818.7,642.8 818.8,643.8 818.8,644.8 818.9,645.7 819.0,646.7 819.1,647.7 819.1,648.6 819.2,649.6 819.3,650.6 819.4,651.5 819.4,652.5 819.5,653.4 819.6,654.4 819.6,655.3 819.7,656.3 819.8,657.2 819.9,658.2 819.9,659.1 820.0,660.0 820.1,660.9 820.1,661.9 820.2,662.9 820.3,663.9 820.4,664.9 820.4,665.9 820.5,667.0 820.6,668.0 820.7,669.1 820.7,670.1 820.8,671.2 820.9,672.3 821.0,673.4 821.0,674.5 821.1,675.6 821.2,676.7 821.3,677.8 821.3,678.9 821.4,679.9 821.5,681.0 821.5,682.1 821.6,683.2 821.7,684.3 821.8,685.3 821.8,686.4 821.9,687.4 821.9,688.4 822.0,689.4 822.1,690.4 822.1,691.4 822.2,692.4 822.3,693.3 822.3,694.3 822.4,695.2 822.4,696.1 822.5,696.9 822.5,697.8 822.6,698.6 822.6,699.3 822.7,700.1 822.7,700.8 822.8,701.5 822.8,702.2 822.9,702.8 822.9,703.4 822.9,704.0 823.0,704.5 823.0,705.0 824.0,697.4 825.5,672.4 827.0,671.8 828.5,654.5 830.0,657.0 831.5,650.9 833.0,632.8 834.5,637.7 836.0,621.5 837.5,614.7 839.0,620.0 840.5,616.8 842.0,610.4 843.5,607.7 845.0,611.3 846.5,607.3 848.0,601.6 849.5,598.0 851.0,594.1 854.0,596.0 855.5,588.7 857.0,594.3 858.5,593.0 860.0,591.1 861.5,597.3 863.0,592.6 864.5,592.1 866.0,588.4 867.5,591.0 869.0,583.3 870.5,588.9 872.0,582.0 873.5,588.6 875.0,590.8 876.5,590.3 878.0,587.4 879.5,587.8 881.0,584.5 882.5,592.5 884.0,585.1 885.5,586.4 887.0,589.9 888.5,585.7 890.0,587.1 891.5,585.1 893.0,584.7 894.5,590.1 896.0,587.6 897.5,583.8 899.0,583.2 900.5,582.2 902.0,588.0 903.5,586.8 905.0,581.6 906.5,588.6 908.0,585.0 909.5,586.7 911.0,584.8 912.5,586.1 914.0,586.0 915.5,591.2 917.0,589.4 918.5,582.7 920.0,592.1 921.5,589.5 923.0,585.4 924.5,587.1 926.0,586.6 927.5,591.4 929.0,593.2 930.5,588.3 932.0,587.3 933.5,589.2 935.0,593.7 936.5,588.5 938.0,590.3 939.5,590.7 941.0,587.5 942.5,596.8 944.0,596.5 945.5,596.2 947.0,601.1 948.5,597.7 950.0,594.2 951.5,597.8 953.0,598.3 954.5,597.6 956.0,595.3 957.5,590.5 959.0,593.8 960.5,601.4 962.0,595.6 963.5,600.1 965.0,601.3 966.5,596.5 968.0,594.3 969.5,603.7 971.0,604.2 972.5,603.2 974.0,605.2 975.5,602.8 977.0,598.2 978.5,606.5 980.0,601.9 981.5,606.8 983.0,601.9 984.5,610.7 986.0,608.3 987.5,604.8 989.0,612.7 990.5,610.1 992.0,607.3 993.5,603.9 995.0,607.1 996.5,608.3 998.0,606.9 999.5,607.4 1001.0,610.0 1002.5,610.7 1004.0,616.2 1005.5,611.0 1007.0,618.0 1008.5,610.9"/>
<polyline fill="none" stroke="#e070f0" stroke-width="1" shape-rendering="crispEdges" points="87.0,717.5 438.0,717.5 438.0,717.0 438.0,716.5 438.0,716.0 438.0,715.4 438.0,714.9 438.1,714.3 438.1,713.7 438.1,713.1 438.1,712.5 438.1,711.8 438.1,711.2 438.1,710.5 438.1,709.8 438.2,709.1 438.2,708.4 438.2,707.6 438.2,706.9 438.2,706.1 438.2,705.3 438.2,704.5 438.3,703.7 438.3,702.9 438.3,702.0 438.3,701.2 438.3,700.3 438.3,699.4 438.4,698.5 438.4,697.6 438.4,696.7 438.4,695.8 438.4,694.8 438.4,693.9 438.5,692.9 438.5,692.0 438.5,691.0 438.5,690.0 438.5,689.0 438.6,688.0 438.6,687.0 438.6,685.9 438.6,684.9 438.6,683.9 438.7,682.8 438.7,681.8 438.7,680.7 438.7,679.6 438.7,678.6 438.8,677.5 438.8,676.4 438.8,675.3 438.8,674.2 438.8,673.1 438.9,672.0 438.9,670.9 438.9,669.8 438.9,668.6 439.0,667.5 439.0,666.4 439.0,665.3 439.0,664.1 439.0,663.0 439.1,661.9 439.1,660.7 439.1,659.6 439.1,658.4 439.2,657.3 439.2,656.1 439.2,655.0 439.2,653.9 439.3,652.7 439.3,651.6 439.3,650.4 439.3,649.3 439.4,648.2 439.4,647.0 439.4,645.9 439.4,644.8 439.4,643.6 439.5,642.5 439.5,641.4 439.5,640.2 439.5,639.1 439.6,638.0 439.6,636.9 439.6,635.8 439.6,634.7 439.7,633.6 439.7,632.5 439.7,631.4 439.7,630.4 439.8,629.3 439.8,628.2 439.8,627.2 439.8,626.1 439.9,625.1 439.9,624.1 439.9,623.0 439.9,622.0 440.0,621.0 440.0,620.0 440.0,619.0 440.0,618.1 440.1,617.1 440.1,616.2 440.1,615.2 440.1,614.2 440.2,613.3 440.2,612.3 440.2,611.4 440.2,610.4 440.2,609.4 440.3,608.5 440.3,607.5 440.3,606.5 440.3,605.6 440.3,604.6 440.4,603.6 440.4,602.6 440.4,601.7 440.4,600.7 440.4,599.7 440.5,598.7 440.5,597.8 440.5,596.8 440.5,595.8 440.5,594.8 440.6,593.9 440.6,592.9 440.6,591.9 440.6,590.9 440.6,590.0 440.6,589.0 440.7,588.0 440.7,587.0 440.7,586.1 440.7,585.1 440.7,584.1 440.8,583.1 440.8,582.1 440.8,581.2 440.8,580.2 440.8,579.2 440.9,578.2 440.9,577.2 440.9,576.2 440.9,575.3 440.9,574.3 441.0,573.3 441.0,572.3 441.0,571.3 441.0,570.4 441.0,569.4 441.1,568.4 441.1,567.4 441.1,566.4 441.1,565.5 441.2,564.5 441.2,563.5 441.2,562.5 441.2,561.5 441.3,560.6 441.3,559.6 441.3,558.6 441.3,557.6 441.4,556.7 441.4,555.7 441.4,554.7 441.5,553.7 441.5,552.7 441.5,551.8 441.6,550.8 441.6,549.8 441.6,548.9 441.7,547.9 441.7,546.9 441.7,545.9 441.8,545.0 441.8,544.0 441.8,543.0 441.9,542.1 441.9,541.1 442.0,540.1 442.0,539.1 442.0,538.2 442.1,537.2 442.1,536.3 442.2,535.3 442.2,534.3 442.3,533.4 442.3,532.4 442.3,531.4 442.4,530.5 442.4,529.5 442.5,528.6 442.5,527.6 442.6,526.7 442.7,525.7 442.7,524.7 442.8,523.8 442.8,522.8 442.9,521.9 442.9,520.9 443.0,520.0 443.1,519.1 443.1,518.1 443.2,517.2 443.3,516.2 443.3,515.3 443.4,514.3 443.5,513.4 443.5,512.4 443.6,511.5 443.7,510.5 443.7,509.5 443.8,508.6 443.9,507.6 444.0,506.6 444.1,505.7 444.1,504.7 444.2,503.7 444.3,502.7 444.4,501.8 444.5,500.8 444.6,499.8 444.7,498.8 444.7,497.9 444.8,496.9 444.9,495.9 445.0,494.9 445.1,493.9 445.2,493.0 445.3,492.0 445.4,491.0 445.5,490.0 445.6,489.0 445.7,488.0 445.8,487.1 445.9,486.1 446.0,485.1 446.1,484.1 446.2,483.1 446.3,482.2 446.4,481.2 446.5,480.2 446.6,479.2 446.7,478.3 446.8,477.3 446.9,476.3 447.0,475.3 447.1,474.4 447.2,473.4 447.3,472.4 447.4,471.5 447.5,470.5 447.6,469.6 447.7,468.6 447.8,467.7 447.9,466.7 448.0,465.7 448.1,464.8 448.2,463.9 448.3,462.9 448.4,462.0 448.5,461.0 448.6,460.1 448.7,459.2 448.8,458.3 448.9,457.3 449.0,456.4 449.2,455.5 449.3,454.6 449.4,453.7 449.5,452.8 449.6,451.9 449.7,451.0 449.8,450.1 449.9,449.2 450.0,448.3 450.1,447.4 450.2,446.6 450.3,445.7 450.4,444.8 450.4,444.0 450.5,443.1 450.6,442.2 450.7,441.4 450.8,440.6 450.9,439.7 451.0,438.9 451.1,438.1 451.2,437.3 451.3,436.4 451.4,435.6 451.5,434.8 451.5,434.0 451.6,433.2 451.7,432.5 451.8,431.7 451.9,430.9 452.0,430.2 452.0,429.4 452.1,428.6 452.2,427.9 452.3,427.2 452.4,426.4 452.4,425.7 452.5,425.0 452.6,423.7 452.8,422.5 452.9,421.3 453.0,420.1 453.1,418.9 453.2,417.7 453.3,416.6 453.5,415.4 453.6,414.3 453.7,413.2 453.8,412.2 453.9,411.1 454.0,410.1 454.1,409.0 454.2,408.0 454.3,407.0 454.4,406.1 454.5,405.1 454.6,404.1 454.7,403.2 454.8,402.3 454.9,401.3 454.9,400.4 455.0,399.5 455.1,398.6 455.2,397.8 455.3,396.9 455.4,396.0 455.5,395.2 455.6,394.3 455.6,393.5 455.7,392.7 455.8,391.9 455.9,391.0 456.0,390.2 456.1,389.4 456.1,388.6 456.2,387.8 456.3,387.0 456.4,386.2 456.5,385.5 456.6,384.7 456.6,383.9 456.7,383.1 456.8,382.3 456.9,381.5 457.0,380.8 457.1,380.0 457.2,379.2 457.2,378.4 457.3,377.6 457.4,376.8 457.5,376.0 457.6,375.2 457.7,374.4 457.8,373.6 457.9,372.8 458.0,372.0 458.1,371.0 458.2,370.0 458.4,369.1 458.5,368.1 458.6,367.1 458.7,366.1 458.8,365.2 459.0,364.2 459.1,363.3 459.2,362.3 459.3,361.4 459.4,360.4 459.5,359.5 459.7,358.6 459.8,357.7 459.9,356.7 460.0,355.8 460.1,354.9 460.3,354.0 460.4,353.1 460.5,352.2 460.6,351.3 460.8,350.4 460.9,349.6 461.0,348.7 461.1,347.8 461.2,347.0 461.4,346.1 461.5,345.2 461.6,344.4 461.7,343.5 461.9,342.7 462.0,341.9 462.1,341.0 462.3,340.2 462.4,339.4 462.5,338.6 462.6,337.8 462.8,337.0 462.9,336.2 463.0,335.4 463.2,334.6 463.3,333.8 463.4,333.0 463.6,332.3 463.7,331.5 463.9,330.8 464.0,330.0 464.2,329.0 464.4,328.1 464.6,327.1 464.7,326.2 464.9,325.3 465.1,324.4 465.3,323.5 465.5,322.6 465.7,321.8 465.9,320.9 466.1,320.1 466.3,319.2 466.5,318.4 466.7,317.6 466.9,316.8 467.1,316.0 467.3,315.2 467.5,314.4 467.7,313.6 467.9,312.8 468.1,312.1 468.3,311.3 468.5,310.5 468.7,309.8 468.9,309.0 469.2,308.3 469.4,307.5 469.6,306.8 469.8,306.0 470.0,305.3 470.2,304.5 470.4,303.8 470.6,303.0 470.9,302.3 471.1,301.5 471.3,300.8 471.5,300.0 471.7,299.2 472.0,298.4 472.2,297.6 472.4,296.7 472.7,295.9 472.9,295.1 473.2,294.4 473.4,293.6 473.6,292.8 473.9,292.0 474.1,291.2 474.4,290.4 474.6,289.7 474.9,288.9 475.1,288.1 475.3,287.4 475.6,286.6 475.8,285.9 476.1,285.1 476.3,284.4 476.6,283.6 476.8,282.9 477.1,282.1 477.4,281.4 477.6,280.6 477.9,279.9 478.1,279.2 478.4,278.4 478.7,277.7 478.9,276.9 479.2,276.2 479.5,275.5 479.7,274.7 480.0,274.0 480.3,273.3 480.5,272.5 480.8,271.8 481.1,271.1 481.3,270.4 481.6,269.7 481.9,268.9 482.1,268.2 482.4,267.5 482.7,266.8 482.9,266.1 483.2,265.4 483.5,264.7 483.8,264.0 484.0,263.3 484.3,262.6 484.6,261.9 484.9,261.2 485.2,260.5 485.5,259.9 485.7,259.2 486.0,258.5 486.3,257.8 486.6,257.1 487.0,256.4 487.3,255.7 487.6,255.0 487.9,254.3 488.2,253.6 488.6,252.9 488.9,252.1 489.3,251.4 489.6,250.7 490.0,250.0 490.3,249.4 490.6,248.8 491.0,248.1 491.3,247.5 491.6,246.9 492.0,246.2 492.3,245.6 492.7,244.9 493.0,244.3 493.4,243.6 493.8,243.0 494.1,242.3 494.5,241.7 494.9,241.0 495.3,240.3 495.6,239.7 496.0,239.0 496.4,238.4 496.8,237.7 497.2,237.1 497.6,236.4 498.0,235.8 498.4,235.1 498.8,234.5 499.2,233.8 499.6,233.2 499.9,232.6 500.3,231.9 500.7,231.3 501.1,230.7 501.5,230.1 501.9,229.5 502.3,228.9 502.7,228.3 503.1,227.7 503.5,227.2 503.9,226.6 504.2,226.1 504.6,225.5 505.0,225.0 505.5,224.3 505.9,223.7 506.4,223.1 506.9,222.4 507.3,221.8 507.8,221.2 508.3,220.6 508.8,220.0 509.2,219.4 509.7,218.8 510.2,218.2 510.6,217.6 511.1,217.1 511.6,216.5 512.0,216.0 512.5,215.4 513.0,214.9 513.4,214.4 513.9,213.9 514.4,213.4 514.8,212.9 515.3,212.4 515.8,211.9 516.2,211.4 516.7,211.0 517.2,210.5 517.7,210.1 518.1,209.6 518.6,209.2 519.1,208.8 519.5,208.4 520.0,208.0 520.7,207.5 521.3,207.0 522.0,206.5 522.6,206.0 523.3,205.6 524.0,205.1 524.6,204.7 525.3,204.3 526.0,203.9 526.6,203.6 527.3,203.2 528.0,202.9 528.6,202.6 529.3,202.3 529.9,202.0 530.6,201.7 531.2,201.4 531.9,201.2 532.5,200.9 533.1,200.7 533.8,200.4 534.4,200.2 535.0,200.0 535.9,199.7 536.8,199.4 537.7,199.2 538.6,198.9 539.4,198.7 540.3,198.6 541.1,198.4 542.0,198.3 542.8,198.2 543.7,198.1 544.5,198.1 545.4,198.0 546.2,198.0 547.1,198.0 548.0,198.0 548.8,198.0 549.7,198.0 550.5,198.0 551.4,198.1 552.2,198.1 553.1,198.2 553.9,198.3 554.8,198.4 555.7,198.5 556.6,198.6 557.4,198.8 558.3,199.0 559.2,199.2 560.1,199.4 561.1,199.7 562.0,200.0 562.6,200.2 563.3,200.4 563.9,200.6 564.5,200.9 565.2,201.1 565.8,201.3 566.5,201.6 567.1,201.9 567.8,202.1 568.5,202.4 569.1,202.7 569.8,203.0 570.5,203.3 571.2,203.7 571.8,204.0 572.5,204.4 573.2,204.8 573.9,205.2 574.6,205.6 575.3,206.0 575.9,206.5 576.6,207.0 577.3,207.5 578.0,208.0 578.5,208.4 579.0,208.8 579.4,209.2 579.9,209.6 580.4,210.0 580.9,210.5 581.4,210.9 582.0,211.4 582.5,211.9 583.0,212.4 583.5,212.9 584.0,213.4 584.5,213.9 585.1,214.4 585.6,215.0 586.1,215.5 586.6,216.0 587.1,216.6 587.6,217.1 588.2,217.7 588.7,218.2 589.2,218.8 589.7,219.4 590.1,219.9 590.6,220.5 591.1,221.1 591.6,221.6 592.0,222.2 592.5,222.7 592.9,223.3 593.4,223.8 593.8,224.4 594.2,224.9 594.6,225.5 595.0,226.0 595.5,226.6 595.9,227.3 596.3,227.9 596.7,228.5 597.1,229.1 597.5,229.8 597.9,230.4 598.3,231.0 598.6,231.6 599.0,232.2 599.3,232.9 599.6,233.5 600.0,234.1 600.3,234.7 600.6,235.4 600.9,236.0 601.2,236.7 601.5,237.3 601.8,238.0 602.1,238.6 602.4,239.3 602.7,240.0 603.0,240.7 603.4,241.4 603.7,242.1 604.0,242.8 604.3,243.5 604.7,244.2 605.0,245.0 605.3,245.6 605.6,246.3 605.9,246.9 606.1,247.6 606.4,248.2 606.7,248.9 607.0,249.5 607.3,250.2 607.5,250.9 607.8,251.6 608.1,252.2 608.4,252.9 608.7,253.6 609.0,254.3 609.2,255.0 609.5,255.7 609.8,256.5 610.1,257.2 610.4,257.9 610.6,258.6 610.9,259.4 611.2,260.1 611.5,260.8 611.8,261.6 612.1,262.3 612.4,263.1 612.6,263.8 612.9,264.6 613.2,265.3 613.5,266.1 613.8,266.9 614.1,267.7 614.4,268.4 614.7,269.2 615.0,270.0 615.3,270.7 615.5,271.4 615.8,272.0 616.1,272.7 616.3,273.4 616.6,274.1 616.9,274.8 617.2,275.5 617.4,276.3 617.7,277.0 618.0,277.7 618.3,278.4 618.6,279.1 618.9,279.9 619.2,280.6 619.5,281.3 619.7,282.1 620.0,282.8 620.3,283.6 620.6,284.3 620.9,285.1 621.2,285.8 621.5,286.6 621.7,287.3 622.0,288.1 622.3,288.8 622.6,289.6 622.8,290.3 623.1,291.1 623.4,291.8 623.6,292.6 623.9,293.3 624.2,294.1 624.4,294.8 624.6,295.6 624.9,296.3 625.1,297.1 625.3,297.8 625.6,298.5 625.8,299.3 626.0,300.0 626.2,300.8 626.5,301.6 626.7,302.4 626.9,303.1 627.1,303.8 627.3,304.5 627.4,305.2 627.6,305.9 627.8,306.6 627.9,307.2 628.1,307.9 628.3,308.5 628.4,309.2 628.6,309.8 628.7,310.5 628.8,311.1 629.0,311.8 629.1,312.5 629.3,313.2 629.4,313.9 629.5,314.7 629.7,315.4 629.8,316.2 630.0,317.0 630.1,317.9 630.3,318.8 630.4,319.7 630.6,320.6 630.7,321.6 630.9,322.7 631.1,323.8 631.2,324.9 631.4,326.1 631.6,327.3 631.8,328.6 632.0,330.0 632.1,330.6 632.2,331.3 632.3,331.9 632.4,332.6 632.5,333.3 632.6,333.9 632.7,334.6 632.8,335.3 632.9,336.0 633.0,336.7 633.1,337.4 633.2,338.2 633.3,338.9 633.4,339.6 633.5,340.4 633.6,341.1 633.8,341.9 633.9,342.6 634.0,343.4 634.1,344.2 634.2,345.0 634.3,345.8 634.4,346.6 634.5,347.4 634.7,348.2 634.8,349.0 634.9,349.8 635.0,350.6 635.1,351.5 635.2,352.3 635.4,353.2 635.5,354.0 635.6,354.9 635.7,355.8 635.8,356.6 636.0,357.5 636.1,358.4 636.2,359.3 636.3,360.2 636.4,361.1 636.6,362.0 636.7,362.9 636.8,363.8 636.9,364.7 637.0,365.7 637.2,366.6 637.3,367.5 637.4,368.5 637.5,369.4 637.6,370.4 637.8,371.4 637.9,372.3 638.0,373.3 638.1,374.3 638.2,375.2 638.4,376.2 638.5,377.2 638.6,378.2 638.7,379.2 638.8,380.2 639.0,381.2 639.1,382.2 639.2,383.2 639.3,384.3 639.4,385.3 639.5,386.3 639.7,387.3 639.8,388.4 639.9,389.4 640.0,390.5 640.1,391.5 640.2,392.6 640.3,393.6 640.5,394.7 640.6,395.7 640.7,396.8 640.8,397.9 640.9,398.9 641.0,400.0 641.1,400.8 641.2,401.6 641.2,402.4 641.3,403.2 641.4,404.0 641.5,404.8 641.6,405.6 641.6,406.4 641.7,407.2 641.8,408.0 641.9,408.9 642.0,409.7 642.0,410.5 642.1,411.3 642.2,412.2 642.3,413.0 642.4,413.9 642.4,414.7 642.5,415.5 642.6,416.4 642.7,417.2 642.8,418.1 642.9,419.0 642.9,419.8 643.0,420.7 643.1,421.6 643.2,422.4 643.3,423.3 643.4,424.2 643.4,425.0 643.5,425.9 643.6,426.8 643.7,427.7 643.8,428.6 643.8,429.5 643.9,430.4 644.0,431.3 644.1,432.2 644.2,433.1 644.3,434.0 644.3,434.9 644.4,435.8 644.5,436.7 644.6,437.6 644.7,438.5 644.7,439.4 644.8,440.4 644.9,441.3 645.0,442.2 645.1,443.1 645.1,444.1 645.2,445.0 645.3,445.9 645.4,446.9 645.5,447.8 645.5,448.8 645.6,449.7 645.7,450.6 645.8,451.6 645.8,452.5 645.9,453.5 646.0,454.4 646.1,455.4 646.1,456.4 646.2,457.3 646.3,458.3 646.4,459.2 646.4,460.2 646.5,461.2 646.6,462.1 646.7,463.1 646.7,464.1 646.8,465.0 646.9,466.0 647.0,467.0 647.0,468.0 647.1,469.0 647.2,469.9 647.2,470.9 647.3,471.9 647.4,472.9 647.4,473.9 647.5,474.9 647.6,475.9 647.6,476.8 647.7,477.8 647.8,478.8 647.8,479.8 647.9,480.8 648.0,481.8 648.0,482.8 648.1,483.8 648.2,484.8 648.2,485.8 648.3,486.8 648.3,487.8 648.4,488.9 648.5,489.9 648.5,490.9 648.6,491.9 648.6,492.9 648.7,493.9 648.7,494.9 648.8,495.9 648.8,496.9 648.9,498.0 648.9,499.0 649.0,500.0 649.0,500.9 649.1,501.8 649.1,502.7 649.2,503.6 649.2,504.5 649.3,505.4 649.3,506.4 649.3,507.3 649.4,508.2 649.4,509.1 649.5,510.1 649.5,511.0 649.5,512.0 649.6,512.9 649.6,513.8 649.6,514.8 649.7,515.7 649.7,516.7 649.7,517.7 649.8,518.6 649.8,519.6 649.8,520.6 649.9,521.5 649.9,522.5 649.9,523.5 649.9,524.5 650.0,525.4 650.0,526.4 650.0,527.4 650.1,528.4 650.1,529.4 650.1,530.4 650.1,531.4 650.2,532.4 650.2,533.4 650.2,534.4 650.2,535.4 650.3,536.4 650.3,537.4 650.3,538.4 650.3,539.4 650.4,540.4 650.4,541.4 650.4,542.4 650.4,543.4 650.4,544.4 650.5,545.4 650.5,546.4 650.5,547.5 650.5,548.5 650.5,549.5 650.6,550.5 650.6,551.5 650.6,552.5 650.6,553.6 650.6,554.6 650.7,555.6 650.7,556.6 650.7,557.6 650.7,558.7 650.7,559.7 650.8,560.7 650.8,561.7 650.8,562.7 650.8,563.8 650.8,564.8 650.8,565.8 650.9,566.8 650.9,567.8 650.9,568.8 650.9,569.9 650.9,570.9 651.0,571.9 651.0,572.9 651.0,573.9 651.0,574.9 651.0,575.9 651.0,576.9 651.1,577.9 651.1,579.0 651.1,580.0 651.1,581.0 651.1,582.0 651.1,583.0 651.2,584.0 651.2,585.0 651.2,586.0 651.2,586.9 651.2,587.9 651.3,588.9 651.3,589.9 651.3,590.9 651.3,591.9 651.3,592.9 651.3,593.8 651.4,594.8 651.4,595.8 651.4,596.8 651.4,597.7 651.4,598.7 651.5,599.7 651.5,600.6 651.5,601.6 651.5,602.5 651.6,603.5 651.6,604.4 651.6,605.4 651.6,606.3 651.6,607.3 651.7,608.2 651.7,609.1 651.7,610.0 651.7,611.0 651.8,611.9 651.8,612.8 651.8,613.7 651.8,614.6 651.9,615.5 651.9,616.4 651.9,617.3 651.9,618.2 652.0,619.1 652.0,620.0 652.0,621.1 652.1,622.2 652.1,623.2 652.1,624.3 652.2,625.4 652.2,626.5 652.3,627.6 652.3,628.7 652.3,629.8 652.4,631.0 652.4,632.1 652.5,633.2 652.5,634.3 652.5,635.4 652.6,636.6 652.6,637.7 652.7,638.8 652.7,639.9 652.7,641.1 652.8,642.2 652.8,643.3 652.9,644.5 652.9,645.6 653.0,646.7 653.0,647.9 653.1,649.0 653.1,650.1 653.1,651.3 653.2,652.4 653.2,653.5 653.3,654.6 653.3,655.8 653.4,656.9 653.4,658.0 653.5,659.1 653.5,660.2 653.6,661.4 653.6,662.5 653.7,663.6 653.7,664.7 653.7,665.8 653.8,666.9 653.8,668.0 653.9,669.0 653.9,670.1 654.0,671.2 654.0,672.3 654.1,673.4 654.1,674.4 654.2,675.5 654.2,676.5 654.3,677.6 654.3,678.6 654.3,679.6 654.4,680.7 654.4,681.7 654.5,682.7 654.5,683.7 654.6,684.7 654.6,685.7 654.7,686.7 654.7,687.7 654.7,688.6 654.8,689.6 654.8,690.5 654.9,691.5 654.9,692.4 655.0,693.3 655.0,694.2 655.0,695.1 655.1,696.0 655.1,696.9 655.2,697.8 655.2,698.6 655.2,699.5 655.3,700.3 655.3,701.1 655.3,702.0 655.4,702.8 655.4,703.6 655.4,704.3 655.5,705.1 655.5,705.9 655.5,706.6 655.6,707.3 655.6,708.0 655.6,708.7 655.7,709.4 655.7,710.1 655.7,710.8 655.8,711.4 655.8,712.0 655.8,712.6 655.8,713.2 655.9,713.8 655.9,714.4 655.9,714.9 655.9,715.5 656.0,716.0 656.0,716.5 656.0,717.0 657.0,717.5 1009.0,717.5"/>
<path d="M471.6 140.3 L462.2 155.1 L481.0 155.1 Z" fill="none" stroke="#00a8b0" stroke-width="1" shape-rendering="crispEdges"/>
<text x="472.1" y="175.5" font-family="Liberation Sans" font-size="16" fill="#00a8b0" text-anchor="middle">2</text>
<path d="M548.5 139.3 L539.1 154.1 L557.9 154.1 Z" fill="none" stroke="#00a8b0" stroke-width="1" shape-rendering="crispEdges"/>
<text x="549.0" y="174.5" font-family="Liberation Sans" font-size="16" fill="#00a8b0" text-anchor="middle">1</text>
<path d="M625.5 140.8 L616.1 155.6 L634.9 155.6 Z" fill="none" stroke="#00a8b0" stroke-width="1" shape-rendering="crispEdges"/>
<text x="626.0" y="176.0" font-family="Liberation Sans" font-size="16" fill="#00a8b0" text-anchor="middle">3</text>
<path d="M394.7 439.5 L385.3 454.3 L404.1 454.3 Z" fill="none" stroke="#00a8b0" stroke-width="1" shape-rendering="crispEdges"/>
<text x="395.2" y="474.7" font-family="Liberation Sans" font-size="16" fill="#00a8b0" text-anchor="middle">5</text>
<path d="M703.0 400.0 L693.6 414.8 L712.4 414.8 Z" fill="none" stroke="#00a8b0" stroke-width="1" shape-rendering="crispEdges"/>
<text x="703.5" y="435.2" font-family="Liberation Sans" font-size="16" fill="#00a8b0" text-anchor="middle">6</text>
<path d="M164.5 630.5 L155.1 645.3 L173.9 645.3 Z" fill="none" stroke="#00a8b0" stroke-width="1" shape-rendering="crispEdges"/>
<text x="165.5" y="666.0" font-family="Liberation Sans" font-size="16" fill="#00a8b0" text-anchor="middle">4</text>
<path d="M932.5 590.5 L923.1 575.7 L941.9 575.7 Z" fill="none" stroke="#00a8b0" stroke-width="1" shape-rendering="crispEdges"/>
<text x="933.0" y="572.0" font-family="Liberation Sans" font-size="16" fill="#00a8b0" text-anchor="middle">7</text>
<path d="M548.0 198.0 L538.6 183.2 L557.4 183.2 Z" fill="none" stroke="#e070f0" stroke-width="1" shape-rendering="crispEdges"/>
<text x="548.0" y="178.5" font-family="Liberation Sans" font-size="16" fill="#e070f0" text-anchor="middle">8</text>
<path d="M548.0 198.0 L538.6 212.8 L557.4 212.8 Z" fill="none" stroke="#e070f0" stroke-width="1" shape-rendering="crispEdges"/>
<text x="549.0" y="232.0" font-family="Liberation Sans" font-size="16" fill="#e070f0" text-anchor="middle">1</text>
<path d="M471.5 300.5 L462.1 315.3 L480.9 315.3 Z" fill="none" stroke="#e070f0" stroke-width="1" shape-rendering="crispEdges"/>
<text x="472.5" y="335.0" font-family="Liberation Sans" font-size="16" fill="#e070f0" text-anchor="middle">2</text>
<path d="M626.0 300.5 L616.6 315.3 L635.4 315.3 Z" fill="none" stroke="#e070f0" stroke-width="1" shape-rendering="crispEdges"/>
<text x="627.0" y="335.0" font-family="Liberation Sans" font-size="16" fill="#e070f0" text-anchor="middle">3</text>
<path d="M471.0 487.0 L461.6 501.8 L480.4 501.8 Z" fill="none" stroke="#b07818" stroke-width="1" shape-rendering="crispEdges"/>
<text x="472.0" y="522.0" font-family="Liberation Sans" font-size="16" fill="#b07818" text-anchor="middle">2</text>
<path d="M517.0 447.5 L507.6 432.7 L526.4 432.7 Z" fill="none" stroke="#b07818" stroke-width="1" shape-rendering="crispEdges"/>
<text x="518.0" y="427.0" font-family="Liberation Sans" font-size="16" fill="#b07818" text-anchor="middle">8</text>
<path d="M548.0 483.0 L538.6 497.8 L557.4 497.8 Z" fill="none" stroke="#b07818" stroke-width="1" shape-rendering="crispEdges"/>
<text x="549.0" y="518.0" font-family="Liberation Sans" font-size="16" fill="#b07818" text-anchor="middle">1</text>
<path d="M625.5 479.0 L616.1 493.8 L634.9 493.8 Z" fill="none" stroke="#b07818" stroke-width="1" shape-rendering="crispEdges"/>
<text x="626.0" y="516.0" font-family="Liberation Sans" font-size="16" fill="#b07818" text-anchor="middle">3</text>
<path d="M477.0 453.0 L467.6 438.2 L486.4 438.2 Z" fill="none" stroke="#40f040" stroke-width="1" shape-rendering="crispEdges"/>
<text x="478.0" y="433.0" font-family="Liberation Sans" font-size="16" fill="#40f040" text-anchor="middle">8</text>
<path d="M471.0 462.0 L461.6 476.8 L480.4 476.8 Z" fill="none" stroke="#40f040" stroke-width="1" shape-rendering="crispEdges"/>
<text x="472.0" y="496.0" font-family="Liberation Sans" font-size="16" fill="#40f040" text-anchor="middle">2</text>
<path d="M548.0 527.0 L538.6 541.8 L557.4 541.8 Z" fill="none" stroke="#40f040" stroke-width="1" shape-rendering="crispEdges"/>
<text x="549.0" y="560.0" font-family="Liberation Sans" font-size="16" fill="#40f040" text-anchor="middle">1</text>
<path d="M626.0 486.0 L616.6 500.8 L635.4 500.8 Z" fill="none" stroke="#40f040" stroke-width="1" shape-rendering="crispEdges"/>
<text x="627.0" y="521.0" font-family="Liberation Sans" font-size="16" fill="#40f040" text-anchor="middle">3</text>
<path d="M78 127 L87 133.5 L78 140 Z" fill="#00a8a8"/>
<path d="M1020 127 L1009.5 133.5 L1020 140 Z" fill="#00a8a8"/>
<path d="M1020 418 L1010 425 L1020 432 Z" fill="#e070f0"/>
</svg>
<div class="leg" style="left:87px;top:87px;color:#b07818">Tr</div><div class="leg" style="left:109px;top:87px;color:#b07818">1</div><div class="leg" style="left:130px;top:87px;color:#b07818">S11 LogM 5.000dB/  0.00dB</div>
<div class="leg" style="left:87px;top:113px;color:#e070f0">Tr</div><div class="leg" style="left:109px;top:113px;color:#e070f0">3</div><div class="leg" style="left:130px;top:113px;color:#e070f0">S12 LogM 0.170dB/  -1.58dB</div>
<div class="abs" style="left:553px;top:85px;width:33px;height:20px;background:#00a8a8"></div>
<div class="leg" style="left:554px;top:87px;color:#000">Tr</div><div class="leg" style="left:576px;top:87px;color:#000">2</div>
<div class="leg" style="left:597px;top:87px;color:#00a8b0">S21 LogM 10.00dB/  0.00dB</div>
<div class="leg" style="left:554px;top:113px;color:#40f040">Tr</div><div class="leg" style="left:576px;top:113px;color:#40f040">4</div><div class="leg" style="left:597px;top:113px;color:#40f040">S22 LogM 5.000dB/  0.00dB</div>
<div class="yl" style="top:134px">0</div>
<div class="yl" style="top:182px">-10</div>
<div class="yl" style="top:240px">-20</div>
<div class="yl" style="top:299px">-30</div>
<div class="yl" style="top:357px">-40</div>
<div class="yl" style="top:416px">-50</div>
<div class="yl" style="top:474px">-60</div>
<div class="yl" style="top:532px">-70</div>
<div class="yl" style="top:591px">-80</div>
<div class="yl" style="top:649px">-90</div>
<div class="yl" style="top:696px">-100</div>
<div class="mr" style="top:146.0px;color:#b07818"><span class="ma">1:</span><span class="mb">1.457</span><span class="mc">GHz</span><span class="md">-29.81 dB</span></div>
<div class="mr" style="top:166.0px;color:#b07818"><span class="ma">2:</span><span class="mb">1.447</span><span class="mc">GHz</span><span class="md">-30.28 dB</span></div>
<div class="mr" style="top:186.0px;color:#b07818"><span class="ma">3:</span><span class="mb">1.467</span><span class="mc">GHz</span><span class="md">-29.50 dB</span></div>
<div class="mr" style="top:206.0px;color:#b07818"><span class="ma">8:</span><span class="mb">1.453</span><span class="mc">GHz</span><span class="md">-26.88 dB</span></div>
<div class="mr" style="top:226.0px;color:#00a8b0"><span class="ma">1:</span><span class="mb">1.457</span><span class="mc">GHz</span><span class="md">-0.92 dB</span></div>
<div class="mr" style="top:246.0px;color:#00a8b0"><span class="ma">2:</span><span class="mb">1.447</span><span class="mc">GHz</span><span class="md">-1.21 dB</span></div>
<div class="mr" style="top:266.0px;color:#00a8b0"><span class="ma">3:</span><span class="mb">1.467</span><span class="mc">GHz</span><span class="md">-1.22 dB</span></div>
<div class="mr" style="top:286.0px;color:#00a8b0"><span class="ma">4:</span><span class="mb">1.407</span><span class="mc">GHz</span><span class="md">-85.17 dB</span></div>
<div class="mr" style="top:306.0px;color:#00a8b0"><span class="ma">5:</span><span class="mb">1.437</span><span class="mc">GHz</span><span class="md">-52.42 dB</span></div>
<div class="mr" style="top:326.0px;color:#00a8b0"><span class="ma">6:</span><span class="mb">1.477</span><span class="mc">GHz</span><span class="md">-45.69 dB</span></div>
<div class="mr" style="top:346.0px;color:#00a8b0"><span class="ma">> 7:</span><span class="mb">1.507</span><span class="mc">GHz</span><span class="md">-78.45 dB</span></div>
<div class="mr" style="top:366.0px;color:#e070f0"><span class="ma">1:</span><span class="mb">1.457</span><span class="mc">GHz</span><span class="md">-0.92 dB</span></div>
<div class="mr" style="top:386.0px;color:#e070f0"><span class="ma">2:</span><span class="mb">1.447</span><span class="mc">GHz</span><span class="md">-1.21 dB</span></div>
<div class="mr" style="top:406.0px;color:#e070f0"><span class="ma">3:</span><span class="mb">1.467</span><span class="mc">GHz</span><span class="md">-1.22 dB</span></div>
<div class="mr" style="top:426.0px;color:#e070f0"><span class="ma">8:</span><span class="mb">1.457</span><span class="mc">GHz</span><span class="md">-0.92 dB</span></div>
<div class="mr" style="top:446.0px;color:#40f040"><span class="ma">1:</span><span class="mb">1.457</span><span class="mc">GHz</span><span class="md">-33.66 dB</span></div>
<div class="mr" style="top:466.0px;color:#40f040"><span class="ma">2:</span><span class="mb">1.447</span><span class="mc">GHz</span><span class="md">-28.05 dB</span></div>
<div class="mr" style="top:486.0px;color:#40f040"><span class="ma">3:</span><span class="mb">1.467</span><span class="mc">GHz</span><span class="md">-30.18 dB</span></div>
<div class="mr" style="top:506.0px;color:#40f040"><span class="ma">8:</span><span class="mb">1.448</span><span class="mc">GHz</span><span class="md">-27.36 dB</span></div>
<div class="abs" style="left:16px;top:724px;width:26px;height:19px;background:#c8c8c8;font-size:15px;line-height:19px;text-align:center">1</div>
<div class="bt" style="left:87px">&gt;Ch1:</div><div class="bt" style="left:137px">Start</div><div class="bt" style="left:184px">1.39700 GHz</div>
<svg class="abs" style="left:284px;top:730px" width="110" height="10"><line x1="1" y1="4.75" x2="23" y2="4.75" stroke="#b07818" stroke-width="2"/><line x1="28.5" y1="4.75" x2="50" y2="4.75" stroke="#00a8b0" stroke-width="2"/><line x1="55" y1="4.75" x2="76" y2="4.75" stroke="#e070f0" stroke-width="2"/><line x1="81" y1="4.75" x2="103" y2="4.75" stroke="#40f040" stroke-width="2"/></svg>
<div class="bt" style="left:507px">RF</div><div class="bt" style="left:545px">0.00 dBm</div>
<div class="bt" style="left:871px">Stop</div><div class="bt" style="left:801px;width:208px;text-align:right">1.51700 GHz</div>

<div id="panel">
<div id="pleft"></div>
<div id="maintab"></div><div class="abs" style="left:159px;top:230px;width:1px;height:481px;background:#45453f"></div>
<div id="phead"><div class="abs" style="left:13px;top:11px;font-size:16px;color:#fff">Avg BW</div>
<div class="abs" style="left:215px;top:7px;width:26px;height:25px;border-radius:5px;border:1px solid #a8afbd;background:#1c2a3a">
<div class="abs" style="left:2px;top:2px;width:20px;height:19px;border-radius:2px;background:radial-gradient(ellipse at 50% 100%,#4e9c8e 0%,#336f70 55%,#2c5d66 100%)"></div>
<div class="abs" style="left:2px;top:2px;width:20px;height:6px;background:#90a4ad"></div>
<svg width="24" height="23" style="position:absolute;left:0;top:0"><path d="M7.8 7.5 L16.2 15.8 M16.2 7.5 L7.8 15.8" stroke="#fff" stroke-width="2.6"/></svg></div></div>
<div class="abs" style="left:159px;top:64px;width:90px;text-align:center;font-size:16px;color:#fff">Main</div>
<div class="tab" style="top:104px;height:64px;border-top-left-radius:6px;line-height:62px">Smoothing</div>
<div class="tab" style="top:167px;height:64px;padding-top:11px;line-height:20px">Delay<br>Aperture</div>
<div class="btn" style="top:47px;width:37px;height:73px"><div class="abs" style="left:8px;top:31px;width:21px;height:11px;border-radius:3px;background:#8a8a8a;border:1px solid #666"></div></div>
<div class="btn" style="left:47px;top:47px;width:108px;height:73px"><div style="margin-top:9.5px">Averaging</div><div class="val" style="left:7px;top:43px;width:93px">1</div></div>
<div class="btn" style="top:131px;height:72px;line-height:19px;padding-top:16px">Averaging<br>Restart</div>
<div class="btn" style="top:214px;height:72px"><div style="margin-top:8px">Average Type</div><div class="tog" style="top:42px"><span style="left:0;color:#aaa;background:#dcdcdc">point</span><span style="left:67px;color:#333">SWEEP</span></div></div>
<div class="blank" style="top:296px;height:74px"></div>
<div class="abs" style="left:2px;top:376px;width:155px;height:78px;border:2px solid #5a8fd0;border-radius:6px"></div>
<div class="btn" style="top:379px;height:72px"><div style="margin-top:8px">IF Bandwidth</div><div class="val" style="top:43px">1 kHz</div></div>
<div class="btn" style="top:463px;height:72px"><div style="margin-top:8px;padding-right:19px;letter-spacing:-0.3px">IF BW Shape</div><svg class="abs" style="left:0;top:0" width="148" height="30"><path d="M130.6 14.5 L138.2 14.5 L134.4 22 Z" fill="#6e6e6e"/></svg><div class="val" style="top:43px">Standard</div></div>
<div class="btn" style="top:546px;height:72px"><div style="margin-top:8px">LF Auto BW</div><div class="tog" style="top:42px"><span style="left:0;color:#333;background:#dcdcdc">ON</span><span style="left:67px;color:#aaa">off</span></div></div>
<div class="blank" style="top:628px;height:75px"></div>
</div>

<div class="abs" style="left:0;top:749px;width:1280px;height:52px;background:#d3d3d3;z-index:-1"></div>
<div class="sb" style="left:4px;width:46px">Tr 2</div>
<div class="sb" style="left:56px;width:51px">Ch 1</div>
<div class="sb" style="left:113px;width:59px">IntTrig</div>
<div class="sb" style="left:178px;width:51px">Swp *</div>
<div class="sb" style="left:235px;width:75px">BW=1k</div>
<div class="sb" style="left:316px;width:81px;white-space:pre">C  2-Port</div>
<div class="sb dis" style="left:403px;width:51px">SrcCal</div>
<div class="sb dis" style="left:460px;width:37px">Fix</div>
<div class="sb dis" style="left:503px;width:47px">Pulse</div>
<div class="sb" style="left:556px;width:719px"></div>
<div class="abs" style="left:0;top:776px;width:1280px;height:1px;background:#b8b8b8"></div>
<div class="abs" style="left:0;top:797px;width:1280px;height:1px;background:#b4b4b4"></div><div class="abs" style="left:0;top:798px;width:1280px;height:2px;background:#e6e6e6"></div><div class="abs" style="left:0;top:800px;width:1280px;height:1px;background:#000"></div>
<svg width="1280" height="801" style="position:absolute;left:0;top:0;mix-blend-mode:multiply;pointer-events:none"><text x="207 257 311 365 388 429 466 509 552 609 634 669 702 740 794 828 870 909 923 964 1006" y="366" font-family="Liberation Serif" font-weight="bold" font-size="66" fill="#ebebeb">www.xahxmicrowave.com</text></svg>
</body></html>
